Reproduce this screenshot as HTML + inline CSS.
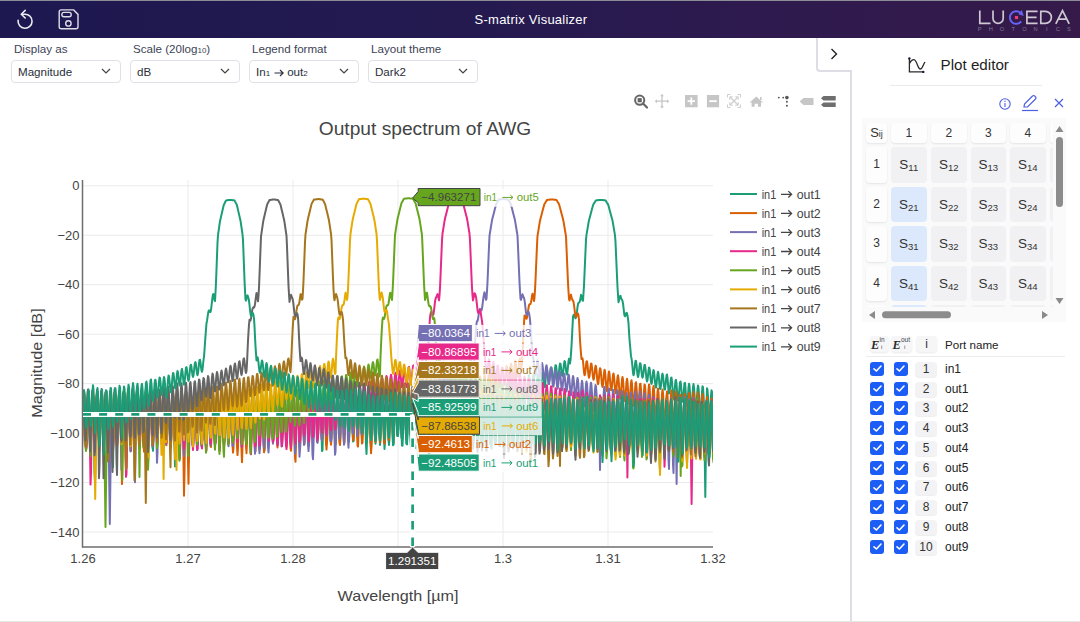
<!DOCTYPE html>
<html><head><meta charset="utf-8">
<style>
*{box-sizing:border-box;margin:0;padding:0}
html,body{width:1080px;height:622px;overflow:hidden;background:#fff;font-family:"Liberation Sans",sans-serif;position:relative}
.abs{position:absolute}
#hdr{left:0;top:0;width:1080px;height:38px;background:linear-gradient(90deg,#1d1850 0%,#231a50 40%,#2e1a4e 70%,#351a4a 100%);border-top:1px solid #8c8c96}
#title{left:0;width:1062px;top:11px;text-align:center;color:#fff;font-size:13px;letter-spacing:0.25px}
.lbl{font-size:11.6px;color:#3d4356;top:42px}
.sel{top:60px;height:23px;width:110px;border:1px solid #dfe1e6;border-radius:4px;font-size:11.6px;color:#2a2f3a;padding:4px 0 0 6px}
.sel svg{position:absolute;right:9px;top:7px}
#plotbg{left:0;top:38px;width:850px;height:584px}
#tab{left:816px;top:38px;width:35px;height:34px;border-left:2px solid #dedde5;border-bottom:2px solid #dedde5;border-bottom-left-radius:4px;background:#fff}
#pline{left:850px;top:70px;width:2px;height:551px;background:#dedde5}
#bot{left:0;top:621px;width:1080px;height:1px;background:#e2e8e6}
.cell{position:absolute;background:#f3f3f4;border-radius:4px;font-size:12px;color:#333;text-align:center}
.hc{box-shadow:0 1px 2px rgba(0,0,0,0.09)}
.blue{background:#dce8fb}
.cb{position:absolute;width:14px;height:14px;background:#1c5df5;border-radius:3px}
.cb svg{position:absolute;left:1.5px;top:1.5px}
.pn{position:absolute;left:945px;font-size:12px;color:#222}
.ix{position:absolute;left:915px;width:22px;height:15px;background:#f3f3f5;border-radius:4px;font-size:12px;color:#333;text-align:center;line-height:15px;box-shadow:0 1px 1px rgba(0,0,0,0.07)}
</style></head><body>
<div id="hdr" class="abs">
  <svg class="abs" style="left:0;top:-1px" width="90" height="38" viewBox="0 0 90 38">
  <path d="M21.6 14.2 H25 A7 7 0 1 1 18.1 20.4" fill="none" stroke="#ecebf2" stroke-width="1.6" stroke-linecap="round"/>
  <path d="M25.2 10.4 L21.3 14.2 L25.2 18" fill="none" stroke="#ecebf2" stroke-width="1.6" stroke-linecap="round" stroke-linejoin="round"/>
  <path d="M61.2 9.9 H73.7 L78 14.4 V26.8 A2 2 0 0 1 76 28.8 H61.2 A2 2 0 0 1 59.2 26.8 V11.9 A2 2 0 0 1 61.2 9.9 Z" fill="none" stroke="#dedde6" stroke-width="1.4"/>
  <rect x="61.9" y="12.4" width="9.3" height="4.3" rx="2" fill="none" stroke="#dedde6" stroke-width="1.4"/>
  <circle cx="68.4" cy="23.4" r="2.7" fill="none" stroke="#dedde6" stroke-width="1.4"/>
</svg>
  <div id="title" class="abs">S-matrix Visualizer</div>
  <!-- logo -->
  <svg class="abs" style="left:960px;top:-0.5px" width="120" height="38" viewBox="960 0 120 38">
    <g fill="none" stroke="#cdc8d2" stroke-width="1.7">
      <path d="M979.8 9.6 V22.4 H990.5"/>
      <path d="M993 9.6 V17.2 a5.1 5.1 0 0 0 10.2 0 V9.6"/>
      <path d="M1037.6 10.4 H1026.9 V22.3 H1037.6 M1026.9 16.3 H1036.6"/>
      <path d="M1040.8 10.4 V22.3 H1045.5 a5.9 5.95 0 0 0 0-11.9z"/>
      <path d="M1055.8 22.9 L1062.5 9.6 L1069.2 22.9 M1058.3 18.2 H1066.8"/>
    </g>
    <path d="M1020.4 11.8 A6.3 6.3 0 1 0 1021.2 20.4" fill="none" stroke="#6662f2" stroke-width="2"/>
    <path d="M1021.7 8.9 L1023.8 14.9 L1018.3 13.2z" fill="#6662f2"/>
    <rect x="1014.9" y="15" width="3.2" height="3.1" fill="#ec3b7f"/>
    <text x="979.8" y="29.9" font-size="4.6" fill="#7d7590" font-family="Liberation Sans" text-anchor="middle" transform="translate(979.8,0) scale(1.25,1) translate(-979.8,0)">P</text><text x="990.9" y="29.9" font-size="4.6" fill="#7d7590" font-family="Liberation Sans" text-anchor="middle" transform="translate(990.9,0) scale(1.25,1) translate(-990.9,0)">H</text><text x="1002.1" y="29.9" font-size="4.6" fill="#7d7590" font-family="Liberation Sans" text-anchor="middle" transform="translate(1002.1,0) scale(1.25,1) translate(-1002.1,0)">O</text><text x="1013.2" y="29.9" font-size="4.6" fill="#7d7590" font-family="Liberation Sans" text-anchor="middle" transform="translate(1013.2,0) scale(1.25,1) translate(-1013.2,0)">T</text><text x="1024.4" y="29.9" font-size="4.6" fill="#7d7590" font-family="Liberation Sans" text-anchor="middle" transform="translate(1024.4,0) scale(1.25,1) translate(-1024.4,0)">O</text><text x="1035.5" y="29.9" font-size="4.6" fill="#7d7590" font-family="Liberation Sans" text-anchor="middle" transform="translate(1035.5,0) scale(1.25,1) translate(-1035.5,0)">N</text><text x="1046.7" y="29.9" font-size="4.6" fill="#7d7590" font-family="Liberation Sans" text-anchor="middle" transform="translate(1046.7,0) scale(1.25,1) translate(-1046.7,0)">I</text><text x="1057.8" y="29.9" font-size="4.6" fill="#7d7590" font-family="Liberation Sans" text-anchor="middle" transform="translate(1057.8,0) scale(1.25,1) translate(-1057.8,0)">C</text><text x="1069.0" y="29.9" font-size="4.6" fill="#7d7590" font-family="Liberation Sans" text-anchor="middle" transform="translate(1069.0,0) scale(1.25,1) translate(-1069.0,0)">S</text>
  </svg>
</div>

<div class="abs lbl" style="left:14px">Display as</div>
<div class="abs lbl" style="left:133px">Scale (20log<span style="font-size:8px">10</span>)</div>
<div class="abs lbl" style="left:252px">Legend format</div>
<div class="abs lbl" style="left:371px">Layout theme</div>
<div class="abs sel" style="left:11px">Magnitude<svg width="10" height="6" viewBox="0 0 10 6"><path d="M1 1 L5 5 L9 1" fill="none" stroke="#444" stroke-width="1.2"/></svg></div>
<div class="abs sel" style="left:130px">dB<svg width="10" height="6" viewBox="0 0 10 6"><path d="M1 1 L5 5 L9 1" fill="none" stroke="#444" stroke-width="1.2"/></svg></div>
<div class="abs sel" style="left:249px">In<span style="font-size:8px">1</span><svg style="position:relative;right:auto;top:1px;margin:0 3px 0 4px" width="10" height="8" viewBox="0 0 10 8"><path d="M0.5 4 H9 M6 1 L9.2 4 L6 7" fill="none" stroke="#2a2f3a" stroke-width="1.2"/></svg>out<span style="font-size:8px">2</span><svg width="10" height="6" viewBox="0 0 10 6"><path d="M1 1 L5 5 L9 1" fill="none" stroke="#444" stroke-width="1.2"/></svg></div>
<div class="abs sel" style="left:368px">Dark2<svg width="10" height="6" viewBox="0 0 10 6"><path d="M1 1 L5 5 L9 1" fill="none" stroke="#444" stroke-width="1.2"/></svg></div>

<svg class="abs" style="left:0;top:0" width="850" height="620" viewBox="0 0 850 620">
<defs><clipPath id="pc"><rect x="83" y="180" width="630" height="367"/></clipPath></defs>
<line x1="188.0" y1="180" x2="188.0" y2="547" stroke="#ebebeb" stroke-width="1"/>
<line x1="293.0" y1="180" x2="293.0" y2="547" stroke="#ebebeb" stroke-width="1"/>
<line x1="398.0" y1="180" x2="398.0" y2="547" stroke="#ebebeb" stroke-width="1"/>
<line x1="503.0" y1="180" x2="503.0" y2="547" stroke="#ebebeb" stroke-width="1"/>
<line x1="608.0" y1="180" x2="608.0" y2="547" stroke="#ebebeb" stroke-width="1"/>
<line x1="83" y1="185.8" x2="713" y2="185.8" stroke="#ebebeb" stroke-width="1"/>
<line x1="83" y1="235.3" x2="713" y2="235.3" stroke="#ebebeb" stroke-width="1"/>
<line x1="83" y1="284.7" x2="713" y2="284.7" stroke="#ebebeb" stroke-width="1"/>
<line x1="83" y1="334.2" x2="713" y2="334.2" stroke="#ebebeb" stroke-width="1"/>
<line x1="83" y1="383.6" x2="713" y2="383.6" stroke="#ebebeb" stroke-width="1"/>
<line x1="83" y1="433.1" x2="713" y2="433.1" stroke="#ebebeb" stroke-width="1"/>
<line x1="83" y1="482.5" x2="713" y2="482.5" stroke="#ebebeb" stroke-width="1"/>
<line x1="83" y1="532.0" x2="713" y2="532.0" stroke="#ebebeb" stroke-width="1"/>
<g clip-path="url(#pc)"><polyline fill="none" stroke="#1b9e77" stroke-width="2" stroke-linejoin="round" points="81.0,422.3 81.5,433.0 82.0,434.0 82.5,424.8 83.0,409.6 83.5,395.8 84.0,390.3 84.5,395.9 85.0,410.0 85.5,425.7 86.0,435.5 86.5,434.9 87.0,424.2 87.5,408.7 88.0,395.7 88.5,391.2 89.0,397.2 89.5,410.7 90.0,425.3 90.5,434.6 91.0,434.6 91.5,425.6 92.0,411.8 92.5,399.5 93.0,394.4 93.5,399.3 94.0,412.6 94.5,428.3 95.0,439.1 95.2,440.7 95.5,439.2 96.0,428.0 96.5,410.9 97.0,396.4 97.5,391.6 98.0,398.6 98.5,413.4 99.0,428.3 99.5,435.9 100.0,432.5 100.5,420.2 101.0,405.0 101.5,394.2 102.0,392.8 102.5,401.4 103.0,416.1 103.5,429.7 104.0,435.8 104.5,431.3 105.0,418.4 105.5,403.1 106.0,392.6 106.5,391.7 107.0,400.4 107.5,414.5 108.0,427.2 108.5,432.7 109.0,428.5 109.5,416.5 109.8,407.9 110.0,402.4 110.5,392.6 111.0,392.9 111.5,403.5 112.0,421.4 112.5,450.6 113.0,467.2 113.5,439.8 114.0,414.2 114.5,398.1 115.0,390.0 115.5,393.5 116.0,406.4 116.5,422.3 117.0,433.2 117.5,434.1 118.0,424.5 118.5,409.3 119.0,395.8 119.5,390.7 120.0,396.8 120.5,411.4 121.0,427.9 121.5,438.6 122.0,438.7 122.3,433.5 122.5,428.5 123.0,412.7 123.5,398.3 124.0,391.3 124.5,394.5 125.0,406.7 125.5,422.7 126.0,435.7 126.5,439.9 127.0,432.8 127.5,417.3 128.0,400.8 128.5,391.9 129.0,395.5 129.5,409.7 130.0,426.9 130.5,437.9 131.0,437.3 131.5,425.8 132.0,409.5 132.5,396.1 133.0,391.6 133.5,397.5 134.0,410.8 134.5,425.1 135.0,433.3 135.5,431.2 136.0,419.5 136.5,403.9 137.0,392.6 137.5,391.5 138.0,401.4 138.5,417.7 139.0,436.4 139.5,447.8 140.0,436.3 140.5,418.0 141.0,402.2 141.5,392.8 142.0,393.9 142.5,405.2 143.0,421.1 143.5,433.9 144.0,437.6 144.5,430.2 145.0,415.6 145.5,400.7 145.8,394.5 146.0,392.3 146.5,394.2 147.0,405.1 147.5,419.9 148.0,432.2 148.5,436.2 149.0,430.1 149.5,416.4 150.0,401.7 150.5,393.7 151.0,397.1 151.5,410.9 152.0,429.6 152.5,446.8 153.0,450.8 153.5,437.0 154.0,417.5 154.5,399.8 155.0,391.0 155.5,394.6 156.0,408.4 156.5,425.1 157.0,436.6 157.5,437.7 158.0,428.3 158.5,412.6 159.0,397.7 159.5,390.3 160.0,393.7 160.5,406.7 161.0,423.7 161.5,437.0 162.0,440.5 162.5,432.5 163.0,416.6 163.5,400.6 163.6,398.1 164.0,392.4 164.5,396.4 165.0,410.5 165.5,427.7 166.0,439.5 166.5,440.3 167.0,429.8 167.5,413.2 168.0,398.5 168.5,393.1 169.0,399.6 169.5,415.2 170.0,432.3 170.5,442.6 171.0,441.0 171.5,428.5 172.0,411.3 172.5,397.9 173.0,394.5 173.5,402.5 174.0,418.4 174.5,441.4 175.0,466.4 175.5,455.6 176.0,428.2 176.5,409.1 177.0,396.3 177.5,393.4 178.0,401.9 178.5,417.4 179.0,432.8 179.5,440.6 180.0,437.0 180.5,423.5 181.0,406.5 181.5,394.1 182.0,392.0 182.5,400.7 183.0,415.4 183.5,428.9 184.0,435.2 184.5,431.6 185.0,420.0 185.5,405.6 186.0,394.8 186.5,392.8 187.0,401.0 187.5,416.6 188.0,438.5 188.5,460.9 189.0,452.6 189.5,429.1 190.0,411.1 190.5,398.4 191.0,395.7 191.5,404.4 192.0,420.3 192.5,435.7 193.0,443.1 193.5,439.3 194.0,426.1 194.5,409.7 195.0,397.1 195.5,393.8 196.0,401.3 196.5,416.4 197.0,432.6 197.5,442.6 198.0,441.5 198.5,429.5 199.0,412.0 199.5,397.4 200.0,392.8 200.5,400.6 201.0,416.7 201.5,433.1 202.0,441.5 202.5,437.7 203.0,423.7 203.5,406.1 204.0,392.9 204.5,389.8 205.0,397.5 205.5,411.4 206.0,424.9 206.5,431.6 207.0,427.0 207.5,414.7 208.0,401.2 208.5,392.3 209.0,392.5 209.5,402.0 210.0,416.6 210.5,429.2 211.0,433.8 211.5,427.7 212.0,414.2 212.5,400.3 213.0,393.8 213.5,398.8 214.0,413.4 214.5,430.7 215.0,442.4 215.5,440.7 216.0,427.1 216.5,409.5 217.0,396.1 217.5,393.0 218.0,401.3 218.5,416.5 219.0,430.9 219.5,437.7 220.0,433.8 220.5,421.4 221.0,406.4 221.5,395.5 222.0,393.4 222.5,400.7 223.0,414.2 223.5,428.0 224.0,436.1 224.5,434.9 225.0,424.9 225.5,410.5 226.0,398.4 226.5,394.5 227.0,401.1 227.5,415.4 228.0,431.1 228.5,441.5 229.0,439.8 229.5,427.2 230.0,410.9 230.5,397.7 231.0,393.6 231.5,400.3 232.0,414.8 232.5,430.0 233.0,438.6 233.5,436.2 234.0,424.1 234.5,408.0 235.0,395.7 235.5,392.9 236.0,400.6 236.5,415.0 237.0,430.3 237.5,439.8 238.0,434.9 238.5,420.6 239.0,404.8 239.5,394.0 240.0,393.7 240.5,404.6 241.0,421.5 241.5,437.2 242.0,443.1 242.5,434.0 243.0,417.0 243.5,400.4 244.0,391.7 244.5,395.5 245.0,410.4 245.5,429.1 246.0,442.6 246.5,443.8 247.0,432.2 247.5,414.3 248.0,398.8 248.5,392.8 249.0,398.8 249.5,413.5 250.0,430.0 250.5,440.7 251.0,441.1 251.5,431.1 252.0,415.1 252.5,400.5 253.0,394.1 253.5,398.7 254.0,412.1 254.5,427.7 255.0,437.8 255.5,437.6 256.0,427.2 256.5,411.6 257.0,398.2 257.5,392.9 258.0,398.2 258.5,411.4 259.0,426.5 259.5,436.5 260.0,436.8 260.5,427.2 261.0,412.2 261.5,398.9 262.0,393.6 262.5,399.0 263.0,412.7 263.5,430.7 264.0,450.0 264.5,450.5 265.0,431.5 265.5,413.0 266.0,398.6 266.5,392.8 267.0,398.3 267.5,412.4 268.0,428.2 268.5,438.2 269.0,437.7 269.5,427.1 270.0,411.6 270.5,398.7 271.0,394.3 271.5,400.2 272.0,413.4 272.5,427.2 273.0,435.0 273.5,433.1 274.0,422.4 274.5,408.1 275.0,396.9 275.5,394.1 276.0,400.8 276.5,414.0 277.0,427.5 277.5,434.9 278.0,432.7 278.5,421.8 279.0,407.2 279.5,396.0 280.0,393.8 280.5,402.0 281.0,416.9 281.5,431.3 282.0,438.3 282.5,434.5 283.0,421.8 283.5,406.4 284.0,395.1 284.5,393.3 285.0,401.7 285.5,416.6 286.0,431.0 286.5,438.1 287.0,434.5 287.5,421.8 288.0,406.7 288.5,396.9 289.0,398.1 289.5,410.3 290.0,428.0 290.5,442.6 291.0,446.6 291.5,437.8 292.0,420.6 292.5,403.6 293.0,395.3 293.5,399.5 294.0,413.6 294.5,430.2 295.0,441.1 295.5,441.1 296.0,430.8 296.5,415.1 297.0,401.2 297.5,395.5 298.0,400.7 298.5,414.5 299.0,430.8 299.5,441.8 300.0,442.1 300.5,431.3 301.0,414.6 301.5,399.8 302.0,394.2 302.5,399.8 303.0,413.5 303.5,428.3 304.0,437.2 304.5,436.0 305.0,425.3 305.5,410.1 306.0,397.6 306.5,393.7 307.0,400.3 307.5,414.3 308.0,429.3 308.5,438.2 309.0,436.9 309.5,426.3 310.0,411.3 310.5,398.7 311.0,393.9 311.5,398.8 312.0,411.2 312.5,425.5 313.0,435.4 313.5,436.4 314.0,428.0 314.5,413.8 315.0,400.5 315.5,394.1 316.0,397.7 316.5,409.6 317.0,424.2 317.5,434.8 318.0,436.4 318.5,428.4 319.0,414.7 319.5,401.9 320.0,396.2 320.5,400.9 321.0,414.2 321.5,432.1 322.0,451.0 322.5,450.5 323.0,431.6 323.5,413.6 324.0,399.7 324.5,395.3 325.0,402.4 325.5,417.4 326.0,433.6 326.5,443.9 327.0,440.5 327.5,426.5 328.0,410.3 328.5,398.2 329.0,395.7 329.5,404.0 330.0,419.2 330.5,434.4 331.0,442.1 331.5,437.7 332.0,423.7 332.5,407.2 333.0,395.8 333.5,395.2 334.0,405.9 334.5,422.7 335.0,438.1 335.5,444.2 336.0,436.5 336.5,420.7 337.0,404.7 337.5,395.3 338.0,396.7 338.5,407.9 339.0,423.8 339.5,438.2 340.0,442.9 340.5,433.0 341.0,417.4 341.5,403.0 342.0,395.6 342.5,398.6 343.0,410.2 343.5,424.4 344.0,434.3 344.5,435.4 345.0,427.3 345.5,413.8 346.0,401.1 346.5,395.5 347.0,400.3 347.5,413.8 348.0,429.8 348.5,440.8 349.0,441.4 349.5,431.3 350.0,415.1 350.5,400.4 351.0,394.1 351.5,399.4 352.0,413.8 352.5,430.5 353.0,441.4 353.5,441.2 354.0,430.0 354.5,413.5 355.0,399.3 355.5,394.1 356.0,399.9 356.5,413.5 357.0,428.3 357.5,437.0 358.0,435.5 358.5,424.6 359.0,410.2 359.5,399.5 360.0,397.8 360.5,406.1 361.0,420.1 361.5,433.0 362.0,438.5 362.5,433.8 363.0,421.1 363.5,406.3 364.0,396.8 364.5,397.6 365.0,408.6 365.5,425.6 366.0,444.7 366.5,453.9 367.0,440.9 367.5,422.1 368.0,405.8 368.5,396.2 369.0,397.7 369.5,409.7 370.0,427.2 370.5,442.1 371.0,447.7 371.5,441.4 372.0,426.1 372.5,408.9 373.0,398.0 373.5,398.4 374.0,409.4 374.5,425.7 375.0,439.2 375.5,443.7 376.0,437.2 376.5,422.7 377.0,406.5 377.5,395.7 378.0,394.9 378.5,404.4 379.0,420.2 379.5,436.2 380.0,445.0 380.5,440.4 381.0,425.6 381.5,408.0 382.0,395.0 382.5,392.7 383.0,402.0 383.5,418.5 384.0,436.5 384.5,449.0 385.0,442.4 385.5,425.0 386.0,407.9 386.5,396.2 387.0,395.4 387.5,406.1 388.0,423.5 388.5,438.9 389.0,444.9 389.5,438.5 390.0,423.3 390.5,406.8 391.0,396.9 391.5,398.1 392.0,409.4 392.5,425.5 393.0,439.5 393.5,443.8 394.0,434.9 394.5,418.9 395.0,403.3 395.5,395.1 396.0,398.5 396.5,411.3 397.0,426.4 397.5,436.1 398.0,435.9 398.5,426.3 399.0,412.0 399.5,399.5 400.0,394.5 400.5,399.7 401.0,413.1 401.5,428.6 402.0,438.6 402.5,438.2 403.0,427.7 403.5,412.4 404.0,399.7 404.5,395.8 405.0,402.3 405.5,416.3 406.0,432.2 406.5,443.3 407.0,441.8 407.5,429.1 408.0,412.6 408.5,399.4 409.0,395.8 409.5,403.8 410.0,419.8 410.5,436.3 411.0,445.6 411.5,443.0 412.0,429.8 412.5,412.5 413.0,399.2 413.5,396.0 414.0,404.7 414.5,421.0 415.0,437.5 415.5,446.3 416.0,443.4 416.5,429.9 417.0,412.2 417.5,398.5 418.0,395.3 418.5,404.1 419.0,420.8 419.5,439.0 420.0,450.6 420.5,443.3 421.0,425.0 421.5,407.0 422.0,395.2 422.5,394.5 423.0,404.8 423.5,420.6 424.0,433.7 424.5,437.5 425.0,429.8 425.5,414.6 426.0,399.5 426.5,392.0 427.0,395.5 427.5,408.0 428.0,422.8 428.5,432.8 429.0,433.4 429.5,424.5 430.0,410.6 430.5,398.2 431.0,393.4 431.5,398.6 432.0,411.4 432.5,427.4 433.0,442.2 433.5,443.8 434.0,430.1 434.5,414.1 435.0,400.3 435.5,393.3 436.0,396.4 436.5,408.2 437.0,423.7 437.5,435.4 438.0,437.8 438.5,429.4 439.0,414.2 439.5,399.2 440.0,391.6 440.5,394.6 441.0,406.3 441.5,420.8 442.0,430.8 442.5,431.6 443.0,422.8 443.5,408.8 444.0,396.6 444.5,392.3 445.0,398.3 445.5,412.4 446.0,427.8 446.5,437.1 447.0,435.7 447.5,424.6 448.0,409.4 448.5,397.5 449.0,394.3 449.5,401.0 450.0,414.0 450.5,426.9 451.0,433.9 451.5,431.7 452.0,421.2 452.5,407.4 453.0,396.4 453.5,393.2 454.0,399.1 454.5,410.9 455.0,422.7 455.5,428.9 456.0,426.8 456.5,417.4 457.0,404.8 457.5,394.9 458.0,392.6 458.5,399.4 459.0,412.3 459.5,424.9 460.0,431.0 460.5,427.4 461.0,416.0 461.5,402.4 462.0,393.4 462.5,393.2 463.0,401.8 463.5,414.8 464.0,426.3 464.5,430.4 465.0,424.1 465.5,412.0 466.0,400.0 466.5,393.7 467.0,395.9 467.5,405.4 468.0,417.6 468.5,427.3 469.0,428.9 469.5,421.2 470.0,409.0 470.5,397.7 471.0,392.0 471.5,394.7 472.0,404.4 472.5,416.6 473.0,425.8 473.5,427.5 474.0,420.4 474.5,408.7 475.0,397.3 475.5,390.7 476.0,391.7 476.5,399.4 477.0,410.3 477.5,419.3 478.0,422.2 478.5,417.6 479.0,407.6 479.5,396.7 480.0,390.0 480.5,390.4 481.0,397.9 481.5,408.8 482.0,418.1 482.5,421.1 483.0,416.3 483.5,406.1 484.0,395.4 484.5,389.3 485.0,390.5 485.5,398.1 486.0,408.5 486.5,417.7 487.0,420.0 487.5,413.0 488.0,402.2 488.5,392.2 489.0,387.3 489.5,389.8 490.0,398.3 490.5,408.4 491.0,415.0 491.5,414.8 492.0,407.9 492.5,397.6 493.0,388.8 493.5,385.7 494.0,389.4 494.5,398.1 495.0,407.5 495.5,412.8 496.0,411.2 496.5,403.2 497.0,392.5 497.5,384.6 498.0,383.4 498.5,389.7 499.0,400.4 499.5,411.2 500.0,417.0 500.5,412.3 501.0,402.2 501.5,392.0 502.0,385.3 502.5,385.0 503.0,390.9 503.5,400.0 504.0,408.1 504.5,411.5 505.0,408.7 505.5,401.0 506.0,392.0 506.5,385.4 507.0,383.9 507.5,387.7 508.0,394.8 508.5,401.7 509.0,405.0 509.5,403.1 510.0,396.7 510.5,388.5 511.0,382.5 511.5,381.5 512.0,386.1 512.5,394.0 513.0,401.6 513.5,405.1 514.0,402.1 514.5,394.6 515.0,386.3 515.5,380.9 516.0,381.0 516.5,386.7 517.0,395.1 517.5,402.2 518.0,404.5 518.5,400.9 519.0,393.1 519.5,385.0 520.0,380.1 520.5,380.7 521.0,386.1 521.5,393.6 522.0,399.4 522.5,400.8 523.0,397.0 523.5,389.6 524.0,382.0 524.5,377.7 525.0,378.8 525.5,384.4 526.0,391.6 526.5,396.7 527.0,396.9 527.5,392.1 528.0,384.6 528.5,377.9 529.0,375.2 529.5,377.6 530.0,383.7 530.5,390.5 531.0,394.6 531.5,394.2 532.0,389.5 532.5,382.9 533.0,377.2 533.5,375.0 534.0,377.0 534.5,382.2 535.0,388.1 535.5,392.0 536.0,392.0 536.5,388.0 537.0,381.8 537.5,376.4 538.0,374.2 538.5,375.9 539.0,380.7 539.5,386.0 540.0,389.4 540.5,389.0 541.0,385.0 541.5,379.0 542.0,373.9 542.5,372.0 543.0,374.1 543.5,379.1 544.0,384.5 544.5,387.3 545.0,386.1 545.5,381.2 546.0,375.0 546.5,370.4 547.0,369.4 547.5,372.2 548.0,376.9 548.5,381.0 549.0,382.4 549.5,380.5 550.0,375.9 550.5,370.9 551.0,367.5 551.5,367.5 552.0,370.8 552.5,375.9 553.0,380.4 553.5,381.7 554.0,379.3 554.5,374.1 555.0,368.5 555.5,365.2 556.0,365.4 556.5,369.0 557.0,374.0 557.5,378.1 558.0,379.2 558.5,376.8 559.0,371.8 559.5,366.6 560.0,363.5 560.5,363.8 561.0,367.2 561.5,371.7 562.0,375.3 562.5,376.0 563.0,373.5 563.5,368.8 564.0,364.0 564.5,361.1 565.0,361.6 565.5,365.3 566.0,370.3 566.5,374.1 567.0,374.6 567.5,371.6 568.0,366.4 568.5,361.3 569.0,358.7 569.5,359.6 570.0,363.6 570.5,359.8 571.0,353.7 571.5,346.1 572.0,336.7 572.5,326.4 573.0,317.1 573.5,315.0 574.0,314.7 574.5,315.8 575.0,317.3 575.5,318.1 576.0,317.4 576.5,314.9 577.0,311.4 577.5,307.2 578.0,304.2 578.5,302.9 579.0,302.5 579.5,302.0 580.0,300.6 580.5,298.0 581.0,294.8 581.5,295.9 582.0,298.0 582.5,300.5 583.0,300.7 583.5,293.2 584.0,285.4 584.5,274.0 585.0,262.5 585.5,251.1 586.0,239.6 586.5,234.7 587.0,231.7 587.5,228.8 588.0,225.8 588.5,222.8 589.0,220.2 589.5,218.4 590.0,216.5 590.5,214.7 591.0,212.8 591.5,210.9 592.0,209.1 592.5,207.2 593.0,205.4 593.5,204.2 594.0,203.4 594.5,202.6 595.0,201.8 595.5,200.9 596.0,200.4 596.5,200.3 597.0,200.3 597.5,200.2 598.0,200.2 598.5,200.1 599.0,200.1 599.5,200.0 600.0,200.0 600.5,199.9 601.0,199.9 601.5,200.0 602.0,200.0 602.5,200.1 603.0,200.1 603.5,200.2 604.0,200.2 604.5,200.3 605.0,200.3 605.5,200.4 606.0,201.1 606.5,201.9 607.0,202.8 607.5,203.6 608.0,204.4 608.5,205.7 609.0,207.6 609.5,209.4 610.0,211.3 610.5,213.2 611.0,215.0 611.5,216.9 612.0,218.7 612.5,220.6 613.0,223.4 613.5,226.4 614.0,229.3 614.5,232.3 615.0,235.3 615.5,241.9 616.0,253.4 616.5,264.8 617.0,276.3 617.5,287.3 618.0,294.7 618.5,302.2 619.0,300.0 619.5,297.9 620.0,296.3 620.5,295.8 621.0,298.0 621.5,299.1 622.0,299.8 622.5,300.9 623.0,303.4 623.5,307.6 624.0,312.1 624.5,315.5 625.0,316.3 625.5,315.4 626.0,313.8 626.5,312.8 627.0,313.3 627.4,315.0 627.5,315.7 628.0,319.1 628.5,323.0 629.0,332.0 629.5,339.2 630.0,345.0 630.5,350.3 631.0,356.4 631.5,358.3 632.0,361.8 632.5,367.4 633.0,372.7 633.5,375.2 634.0,373.9 634.5,369.4 635.0,364.2 635.5,360.8 636.0,361.0 636.5,364.6 637.0,370.2 637.5,375.1 638.0,377.1 638.5,375.5 639.0,371.1 639.5,366.2 640.0,363.2 640.5,363.4 641.0,366.9 641.5,371.8 642.0,376.0 642.5,377.7 643.0,376.2 643.5,372.3 644.0,367.9 644.5,365.0 645.0,365.1 645.5,368.6 646.0,374.0 646.5,379.1 647.0,381.5 647.5,380.1 648.0,375.7 648.5,370.7 649.0,367.6 649.5,368.2 650.0,372.1 650.5,377.6 651.0,382.2 651.5,383.9 652.0,381.9 652.5,377.4 653.0,372.5 653.5,370.0 654.0,371.3 654.5,376.1 655.0,382.2 655.5,386.7 656.0,387.6 656.5,384.6 657.0,379.2 657.5,374.1 658.0,371.8 658.5,373.6 659.0,378.7 659.5,384.7 660.0,388.8 660.5,388.9 661.0,385.3 661.5,379.9 662.0,375.3 662.5,373.6 663.0,375.7 663.5,380.6 664.0,386.1 664.5,389.6 665.0,389.5 665.5,385.7 666.0,380.0 666.5,375.5 667.0,374.5 667.5,377.9 668.0,384.1 668.5,390.3 669.0,393.6 669.5,392.7 670.0,388.1 670.5,382.3 671.0,378.0 671.5,377.5 672.0,381.5 672.5,388.4 673.0,395.4 673.5,399.4 674.0,398.4 674.5,392.9 675.0,385.8 675.5,380.6 676.0,379.8 676.5,383.9 676.6,385.0 677.0,390.6 677.5,397.3 678.0,400.8 678.5,399.5 679.0,394.1 679.5,387.4 680.0,382.5 680.5,381.5 680.7,382.5 681.0,385.0 681.5,391.4 682.0,397.9 682.5,401.7 683.0,400.9 683.5,395.5 684.0,388.3 684.5,383.1 685.0,382.9 685.5,388.3 686.0,396.6 686.5,403.9 687.0,406.4 687.5,403.1 688.0,395.5 688.5,387.7 689.0,383.7 689.5,385.6 690.0,392.7 690.5,401.7 691.0,408.3 691.5,409.1 691.6,408.4 692.0,403.8 692.5,395.2 693.0,387.4 693.5,384.1 694.0,387.0 694.5,394.5 695.0,403.9 695.5,413.0 696.0,414.1 696.5,405.9 697.0,396.8 697.5,389.2 698.0,385.5 698.5,387.6 699.0,394.7 699.5,404.2 700.0,413.2 700.5,416.5 701.0,410.7 701.5,401.2 702.0,391.9 702.5,386.3 703.0,387.2 703.5,394.5 704.0,404.9 704.5,437.7 705.0,474.7 705.3,497.0 705.5,482.2 706.0,445.1 706.5,408.0 707.0,388.2 707.5,389.7 708.0,397.1 708.5,407.4 709.0,417.3 709.5,421.3 710.0,415.9 710.5,405.9 711.0,395.9 711.5,390.3 712.0,392.1 712.5,400.7 713.0,411.8 713.5,420.0 714.0,421.3 714.5,415.1 715.0,404.5"/>
<polyline fill="none" stroke="#d95f02" stroke-width="2" stroke-linejoin="round" points="81.0,436.7 81.5,450.0 82.0,449.3 82.5,434.8 83.0,413.7 83.5,396.5 84.0,391.6 84.5,401.1 85.0,419.8 85.5,438.3 86.0,447.8 86.5,443.9 87.0,428.6 87.5,409.2 88.0,394.7 88.5,391.8 89.0,401.8 89.5,419.6 90.0,436.7 90.5,445.4 91.0,441.5 91.5,427.0 92.0,409.0 92.5,396.1 93.0,394.3 93.5,404.2 94.0,421.6 94.5,450.8 95.0,481.2 95.2,477.9 95.5,457.4 96.0,423.8 96.5,405.2 97.0,393.9 97.5,393.5 98.0,404.6 98.5,422.1 99.0,437.6 99.5,443.3 100.0,436.0 100.5,419.4 101.0,401.8 101.5,392.2 102.0,395.7 102.5,410.8 103.0,430.0 103.5,443.8 104.0,445.9 104.5,435.4 105.0,417.6 105.5,400.7 106.0,392.3 106.5,395.8 107.0,409.4 107.5,426.9 108.0,440.5 108.5,444.3 109.0,436.7 109.5,421.1 109.8,410.8 110.0,404.7 110.5,393.9 111.0,394.5 111.5,406.7 112.0,425.0 112.5,440.7 113.0,446.2 113.5,438.6 114.0,421.7 114.5,403.9 115.0,393.8 115.5,395.4 116.0,407.2 116.5,422.7 117.0,434.5 117.5,437.2 118.0,429.6 118.5,414.8 119.0,399.5 119.5,391.0 120.0,393.7 120.5,407.3 121.0,429.5 121.5,467.2 122.0,484.1 122.3,466.0 122.5,450.1 123.0,420.0 123.5,401.6 124.0,392.3 124.5,395.7 125.0,409.6 125.5,429.9 126.0,459.4 126.5,468.0 127.0,440.1 127.5,416.8 128.0,400.6 128.5,393.3 129.0,398.8 129.5,415.6 130.0,436.0 130.5,450.3 131.0,451.0 131.5,437.6 132.0,416.8 132.5,398.8 133.0,392.0 133.5,399.1 134.0,415.7 134.5,434.0 135.0,445.8 135.5,443.0 136.0,427.6 136.5,408.5 137.0,393.7 137.5,390.2 138.0,399.9 138.5,418.1 139.0,437.3 139.5,448.9 140.0,443.7 140.5,426.8 141.0,407.8 141.5,394.6 142.0,393.6 142.5,405.9 143.0,426.0 143.5,444.2 144.0,451.7 144.5,444.5 145.0,425.9 145.5,404.9 145.8,395.4 146.0,391.5 146.5,392.9 147.0,407.2 147.5,427.0 148.0,442.1 148.5,445.3 149.0,435.5 149.5,417.9 150.0,400.6 150.5,391.2 151.0,393.1 151.5,405.0 152.0,421.4 152.5,434.9 153.0,439.4 153.5,432.7 154.0,417.9 154.5,401.7 155.0,391.8 155.5,392.7 156.0,404.0 156.5,420.7 157.0,436.9 157.5,444.0 158.0,434.8 158.5,417.9 159.0,401.1 159.5,390.9 160.0,392.2 160.5,404.6 161.0,422.3 161.5,437.2 162.0,441.3 162.5,431.7 163.0,414.8 163.5,398.6 163.6,396.2 164.0,390.9 164.5,395.8 165.0,411.6 165.5,431.0 166.0,444.5 166.5,445.3 167.0,433.2 167.5,414.5 168.0,398.7 168.5,393.5 169.0,401.2 169.5,418.0 170.0,436.1 170.5,446.7 171.0,444.6 171.5,430.9 172.0,412.1 172.5,397.5 173.0,394.2 173.5,402.8 174.0,418.7 174.5,433.7 175.0,441.1 175.5,437.4 176.0,424.3 176.5,407.6 177.0,395.4 177.5,393.9 178.0,404.5 178.5,423.2 179.0,444.8 179.5,459.7 180.0,450.8 180.5,430.1 181.0,409.7 181.5,395.4 182.0,393.6 182.5,405.7 183.0,427.7 183.5,462.2 184.0,495.8 184.5,473.0 185.0,434.8 185.5,410.2 186.0,394.5 186.5,393.3 187.0,406.8 187.5,429.2 188.0,461.4 188.5,483.7 189.0,455.3 189.5,422.8 190.0,402.2 190.5,391.3 191.0,393.8 191.5,408.0 192.0,427.1 192.5,442.3 193.0,446.0 193.5,436.0 194.0,418.8 194.5,402.5 195.0,394.9 195.5,399.5 196.0,413.6 196.5,430.5 197.0,442.1 197.5,443.4 198.0,433.9 198.5,417.9 199.0,402.5 199.5,394.4 200.0,397.6 200.5,410.7 201.0,427.9 201.5,441.0 202.0,443.5 202.5,434.0 203.0,416.7 203.5,399.7 204.0,390.7 204.5,393.7 205.0,406.7 205.5,423.6 206.0,436.6 206.5,439.5 207.0,430.9 207.5,414.8 208.0,399.0 208.5,391.6 209.0,396.9 209.5,412.9 210.0,432.2 210.5,446.2 211.0,447.0 211.5,434.1 212.0,415.1 212.5,398.5 213.0,392.0 213.5,398.3 214.0,414.4 214.5,432.3 215.0,443.5 215.5,442.7 216.0,430.2 216.5,412.2 217.0,397.3 217.5,392.9 218.0,401.6 218.5,419.5 219.0,438.4 219.5,449.3 220.0,446.0 220.5,430.7 221.0,411.7 221.5,397.9 222.0,395.8 222.5,405.7 223.0,422.4 223.5,438.4 224.0,446.4 224.5,439.6 225.0,423.8 225.5,407.5 226.0,396.4 226.5,395.0 227.0,403.4 227.5,417.9 228.0,432.1 228.5,439.7 229.0,437.0 229.5,425.0 230.0,408.9 230.5,396.8 231.0,395.3 231.5,406.3 232.0,425.4 232.5,443.8 233.0,452.6 233.5,447.6 234.0,431.2 234.5,411.6 235.0,398.3 235.5,397.5 236.0,409.5 236.5,428.5 237.0,446.6 237.5,455.1 238.0,447.4 238.5,429.7 239.0,410.8 239.5,398.3 240.0,398.1 240.5,410.0 241.0,428.8 241.5,450.3 242.0,462.2 242.5,447.0 243.0,424.5 243.5,405.1 244.0,393.1 244.5,394.0 245.0,407.5 245.5,427.5 246.0,446.2 246.5,453.3 247.0,442.4 247.5,422.7 248.0,403.6 248.5,393.3 249.0,396.8 249.5,412.3 250.0,432.1 250.5,446.8 251.0,448.8 251.5,437.2 252.0,418.5 252.5,401.6 253.0,394.7 253.5,401.3 254.0,418.7 254.5,438.7 255.0,451.8 255.5,451.5 256.0,437.9 256.5,417.8 257.0,401.2 257.5,396.1 258.0,404.3 258.5,421.3 259.0,439.0 259.5,449.4 260.0,447.6 260.5,434.3 261.0,415.4 261.5,399.8 262.0,395.2 262.5,404.3 263.0,422.9 263.5,442.1 264.0,452.3 264.5,448.5 265.0,432.5 265.5,411.9 266.0,396.6 266.5,393.6 267.0,403.8 267.5,421.5 268.0,437.7 268.5,444.3 269.0,438.3 269.5,422.6 270.0,404.9 270.5,393.6 271.0,393.9 271.5,405.3 272.0,422.4 272.5,437.3 273.0,443.4 273.5,438.3 274.0,424.8 274.5,409.1 275.0,398.4 275.5,398.1 276.0,408.7 276.5,425.6 277.0,441.0 277.5,447.4 278.0,441.7 278.5,426.6 279.0,409.2 279.5,397.3 280.0,395.5 280.5,404.1 281.0,418.4 281.5,431.6 282.0,437.4 282.5,432.9 283.0,419.9 283.5,404.2 284.0,393.5 284.5,393.6 285.0,405.3 285.5,423.8 286.0,440.6 286.5,447.0 287.0,439.6 287.5,421.5 288.0,402.0 288.5,391.2 289.0,395.0 289.5,411.6 290.0,432.7 290.5,448.1 291.0,450.8 291.5,440.3 292.0,421.8 292.5,404.3 293.0,395.9 293.5,400.4 294.0,416.1 294.5,436.8 295.0,457.5 295.5,461.8 296.0,443.6 296.5,422.0 297.0,403.9 297.5,394.9 298.0,398.7 298.5,413.4 299.0,432.3 299.5,446.6 300.0,449.4 300.5,439.1 301.0,420.6 301.5,402.8 302.0,394.1 302.5,398.1 303.0,412.3 303.5,429.7 304.0,442.4 304.5,444.1 305.0,434.1 305.5,417.9 306.0,403.2 306.5,397.0 307.0,402.5 307.5,417.4 308.0,434.8 308.5,446.0 309.0,445.2 309.5,432.5 310.0,414.0 310.5,399.1 311.0,395.2 311.5,403.7 312.0,419.5 312.5,434.1 313.0,440.1 313.5,434.9 314.0,421.3 314.5,405.5 315.0,394.6 315.5,393.3 316.0,402.5 316.5,418.2 317.0,433.9 317.5,441.9 318.0,435.9 318.5,421.0 319.0,404.9 319.5,394.7 320.0,395.1 320.5,405.7 321.0,421.3 321.5,435.0 322.0,440.5 322.5,435.6 323.0,422.6 323.5,407.5 324.0,397.5 324.5,398.0 325.0,409.5 325.5,427.4 326.0,443.4 326.5,449.6 327.0,442.7 327.5,426.1 328.0,407.6 328.5,396.0 329.0,396.1 329.5,407.3 330.0,424.1 330.5,438.9 331.0,444.7 331.5,438.3 332.0,422.8 332.5,405.1 333.0,393.4 333.5,393.3 334.0,405.1 334.5,423.3 335.0,439.1 335.5,444.8 336.0,437.7 336.5,421.5 337.0,404.2 337.5,394.5 338.0,397.2 338.5,411.0 339.0,429.0 339.5,442.7 340.0,445.1 340.5,435.1 341.0,417.7 341.5,401.6 342.0,394.6 342.5,400.1 343.0,415.0 343.5,432.1 344.0,443.0 344.5,442.6 345.0,431.2 345.5,414.0 346.0,399.3 346.5,393.7 347.0,399.7 347.5,413.9 348.0,429.5 348.5,439.4 349.0,439.0 349.5,428.7 350.0,413.1 350.5,399.2 351.0,393.4 351.5,398.1 352.0,411.1 352.5,426.7 353.0,439.3 353.5,440.4 354.0,429.1 354.5,413.7 355.0,400.2 355.5,394.2 356.0,399.1 356.5,413.4 357.0,431.2 357.5,445.3 358.0,446.6 358.5,434.0 359.0,415.8 359.5,399.7 360.0,393.0 360.5,398.9 361.0,414.6 361.5,432.4 362.0,443.6 362.5,442.7 363.0,430.2 363.5,412.1 364.0,396.8 364.5,391.2 365.0,397.4 365.5,412.2 366.0,428.8 366.5,439.4 367.0,439.0 367.5,427.4 368.0,410.1 368.5,395.8 369.0,392.4 369.5,402.1 370.0,420.9 370.5,441.0 371.0,453.3 371.5,446.9 372.0,428.5 372.5,409.1 373.0,396.2 373.5,395.6 374.0,406.8 374.5,423.5 375.0,437.5 375.5,442.0 376.0,435.3 376.5,420.7 377.0,405.0 377.5,395.6 378.0,396.7 378.5,407.9 379.0,423.9 379.5,437.6 380.0,442.2 380.5,435.0 381.0,419.8 381.5,404.0 382.0,395.4 382.5,398.8 383.0,412.7 383.5,430.3 384.0,442.7 384.5,443.8 385.0,433.1 385.5,416.1 386.0,400.9 386.5,394.8 387.0,400.2 387.5,414.3 388.0,430.1 388.5,440.0 389.0,439.1 389.5,427.8 390.0,411.3 390.5,397.7 391.0,393.4 391.5,400.4 392.0,415.0 392.5,431.5 393.0,443.5 393.5,439.4 394.0,423.8 394.5,407.4 395.0,395.2 395.5,392.0 396.0,399.1 396.5,412.9 397.0,426.8 397.5,434.5 398.0,432.3 398.5,421.3 399.0,406.6 399.5,394.9 400.0,391.6 400.5,398.3 401.0,411.8 401.5,426.5 402.0,436.6 402.5,433.9 403.0,421.3 403.5,406.5 404.0,395.1 404.5,392.4 405.0,400.3 405.5,415.7 406.0,431.6 406.5,440.3 407.0,437.4 407.5,424.2 408.0,407.3 408.5,395.0 409.0,393.1 409.5,402.2 410.0,417.4 410.5,430.8 411.0,435.8 411.5,430.1 412.0,416.5 412.5,401.5 413.0,391.9 413.5,391.8 414.0,400.9 414.5,415.0 415.0,427.6 415.5,432.7 416.0,427.8 416.5,415.1 417.0,400.7 417.5,391.7 418.0,392.3 418.5,402.1 419.0,416.3 419.5,428.0 420.0,431.6 420.5,425.5 421.0,412.7 421.5,399.3 422.0,391.6 422.5,393.5 423.0,404.2 423.5,418.6 424.0,429.7 424.5,431.7 425.0,423.6 425.5,409.2 426.0,395.6 426.5,389.1 427.0,392.3 427.5,403.0 428.0,415.9 428.5,426.1 429.0,426.6 429.5,416.5 430.0,403.5 430.5,392.4 431.0,387.0 431.5,389.9 432.0,399.7 432.5,412.3 433.0,421.8 433.5,423.8 434.0,417.2 434.5,404.9 435.0,393.1 435.5,387.6 436.0,391.4 436.5,402.9 437.0,416.8 437.5,427.3 438.0,427.3 438.5,416.8 439.0,402.6 439.5,391.0 440.0,387.4 440.5,393.3 441.0,405.5 441.5,417.6 442.0,423.5 442.5,420.5 443.0,410.2 443.5,397.5 444.0,388.3 444.5,386.3 445.0,392.0 445.5,402.2 446.0,411.8 446.5,416.6 447.0,414.4 447.5,406.3 448.0,396.0 448.5,388.3 449.0,386.8 449.5,392.3 450.0,402.4 450.5,412.3 451.0,417.0 451.5,414.2 452.0,405.0 452.5,393.9 453.0,386.5 453.5,386.4 454.0,393.8 454.5,404.9 455.0,414.0 455.5,416.4 456.0,411.0 456.5,400.5 457.0,390.0 457.5,384.1 458.0,385.4 458.5,392.7 459.0,402.3 459.5,409.8 460.0,411.5 460.5,406.5 461.0,397.1 461.5,387.6 462.0,382.6 462.5,384.1 463.0,391.3 463.5,400.6 464.0,408.2 464.5,410.1 465.0,404.7 465.5,395.8 466.0,387.1 466.5,381.9 467.0,382.2 467.5,387.6 468.0,395.3 468.5,401.6 469.0,403.4 469.5,400.0 470.0,392.7 470.5,384.9 471.0,380.1 471.5,380.4 472.0,385.8 472.5,393.8 473.0,400.3 473.5,402.2 474.0,398.3 474.5,390.7 475.0,383.0 475.5,378.8 476.0,379.8 476.5,385.3 477.0,392.3 477.5,397.6 478.0,398.4 478.5,394.2 479.0,386.9 479.5,379.9 480.0,376.6 480.5,378.4 481.0,384.3 481.5,391.1 482.0,395.5 482.5,395.3 483.0,390.7 483.5,383.6 484.0,377.4 484.5,374.7 485.0,376.8 485.5,382.4 486.0,388.9 486.5,392.8 487.0,392.4 487.5,387.6 488.0,380.9 488.5,375.3 489.0,373.3 489.5,375.3 490.0,380.2 490.5,385.5 491.0,388.5 491.5,388.0 492.0,383.9 492.5,378.0 493.0,373.2 493.5,371.9 494.0,374.9 494.5,381.2 495.0,387.7 495.5,391.3 496.0,390.1 496.5,384.4 497.0,376.9 497.5,371.4 498.0,370.4 498.5,374.0 499.0,380.2 499.5,385.6 500.0,387.6 500.5,385.2 501.0,379.5 501.5,372.9 502.0,368.4 502.5,368.1 503.0,371.9 503.5,378.1 504.0,383.3 504.5,384.8 505.0,381.9 505.5,375.9 506.0,369.7 506.5,366.1 507.0,366.8 507.5,370.9 508.0,376.4 508.5,380.3 509.0,380.8 509.5,377.5 510.0,371.8 510.5,366.4 511.0,363.8 511.5,365.2 512.0,369.9 512.5,375.6 513.0,379.3 513.5,379.1 514.0,374.9 514.5,368.6 515.0,363.1 515.5,361.1 516.0,363.4 516.5,368.7 517.0,374.1 517.5,376.8 518.0,375.4 518.5,370.5 519.0,364.3 519.5,359.6 520.0,358.5 520.5,361.1 521.0,366.0 521.5,370.7 522.0,362.2 522.5,353.7 523.0,343.7 523.5,333.2 524.0,323.2 524.5,315.6 525.0,315.8 525.5,317.1 526.0,318.4 526.5,318.8 527.0,317.6 527.5,314.9 528.0,311.4 528.5,308.0 529.0,305.3 529.5,304.3 530.0,304.3 530.5,303.9 531.0,302.3 531.5,299.5 532.0,296.0 532.5,293.7 533.0,295.8 533.5,298.3 534.0,301.0 534.5,297.5 535.0,289.9 535.5,280.4 536.0,268.7 536.5,257.1 537.0,245.4 537.5,235.8 538.0,232.8 538.5,229.8 539.0,226.7 539.5,223.7 540.0,220.7 540.5,218.7 541.0,216.8 541.5,214.9 542.0,213.0 542.5,211.1 543.0,209.2 543.5,207.3 544.0,205.4 544.5,204.0 545.0,203.2 545.5,202.3 546.0,201.5 546.5,200.7 547.0,199.9 547.5,199.9 548.0,199.8 548.5,199.8 549.0,199.7 549.5,199.7 550.0,199.6 550.5,199.6 551.0,199.5 551.5,199.5 552.0,199.5 552.5,199.5 553.0,199.6 553.5,199.6 554.0,199.7 554.5,199.7 555.0,199.8 555.5,199.8 556.0,199.9 556.5,200.0 557.0,200.8 557.5,201.7 558.0,202.5 558.5,203.3 559.0,204.2 559.5,205.8 560.0,207.7 560.5,209.6 561.0,211.5 561.5,213.4 562.0,215.3 562.5,217.2 563.0,219.1 563.5,221.3 564.0,224.3 564.5,227.3 565.0,230.4 565.5,233.4 566.0,236.4 566.5,247.7 567.0,259.4 567.5,271.1 568.0,282.7 568.5,291.4 569.0,299.0 569.5,300.5 570.0,298.0 570.5,296.1 571.0,294.6 571.5,297.3 572.0,299.1 572.5,300.0 573.0,300.6 573.5,301.9 574.0,304.8 574.5,309.0 575.0,313.4 575.5,316.0 576.0,316.8 576.5,316.0 577.0,314.5 577.5,313.4 578.0,313.7 578.5,315.8 579.0,319.7 579.5,330.2 580.0,339.7 580.5,347.4 581.0,353.6 581.5,359.1 582.0,359.0 582.5,358.3 583.0,361.2 583.5,366.5 584.0,372.0 584.5,375.2 585.0,374.6 585.5,370.6 586.0,365.3 586.5,361.5 587.0,361.2 587.5,364.7 588.0,370.4 588.5,375.5 589.0,377.8 589.5,376.3 590.0,371.9 590.5,366.9 591.0,363.6 591.5,363.8 592.0,367.3 592.5,372.7 593.0,377.5 593.5,379.7 594.0,378.3 594.5,374.0 595.0,369.0 595.5,365.8 596.0,366.3 596.5,370.5 597.0,376.7 597.5,382.1 598.0,384.3 598.5,382.2 599.0,377.1 599.5,371.5 600.0,368.2 600.5,368.8 601.0,373.4 601.5,379.7 602.0,385.1 602.5,387.1 603.0,384.8 603.5,379.3 604.0,373.3 604.5,369.8 605.0,371.0 605.5,376.6 606.0,384.1 606.5,389.9 607.0,391.2 607.5,387.3 608.0,380.5 608.5,374.1 609.0,371.5 609.5,373.6 610.0,379.3 610.5,385.8 611.0,390.1 611.5,390.2 612.0,386.3 612.5,380.3 613.0,375.1 613.5,373.4 614.0,376.2 614.5,382.3 615.0,389.0 615.5,393.2 616.0,393.1 616.5,388.8 617.0,382.4 617.5,377.0 618.0,375.3 618.5,378.4 619.0,385.4 619.5,393.3 620.0,398.5 620.5,398.7 621.0,393.6 621.5,386.0 622.0,379.5 622.5,377.0 623.0,379.8 623.5,386.7 624.0,394.7 624.5,400.4 625.0,401.3 625.5,396.9 626.0,389.1 626.5,381.8 627.0,378.8 627.4,380.9 627.5,381.9 628.0,389.8 628.5,398.5 629.0,403.9 629.5,403.6 630.0,397.9 630.5,389.6 631.0,382.6 631.5,380.3 632.0,384.0 632.5,392.1 633.0,400.8 633.5,406.0 634.0,405.2 634.5,398.9 635.0,390.3 635.5,383.7 636.0,382.3 636.5,386.9 637.0,395.4 637.5,403.7 638.0,408.1 638.5,406.4 639.0,399.3 639.5,390.4 640.0,384.1 640.5,383.7 641.0,389.8 641.5,399.6 642.0,408.6 642.5,412.6 643.0,409.7 643.5,401.1 644.0,391.0 644.5,384.6 645.0,385.2 645.5,392.8 646.0,404.4 646.5,416.9 647.0,422.4 647.5,413.1 648.0,400.4 648.5,389.9 649.0,384.4 649.5,386.3 650.0,394.8 650.5,405.8 651.0,414.3 651.5,415.9 652.0,409.5 652.5,399.0 653.0,389.6 653.5,385.9 654.0,389.9 654.5,400.0 655.0,411.5 655.5,419.4 656.0,420.1 656.5,413.2 657.0,402.0 657.5,392.1 658.0,388.4 658.5,393.0 659.0,403.6 659.5,415.0 660.0,422.0 660.5,421.7 661.0,414.4 661.5,403.4 662.0,393.7 662.5,389.5 663.0,392.9 663.5,402.9 664.0,415.2 664.5,424.2 665.0,425.7 665.5,418.9 666.0,407.0 666.5,396.0 667.0,391.4 667.5,395.5 668.0,406.2 668.5,418.5 669.0,427.0 669.5,426.4 670.0,417.1 670.5,404.6 671.0,394.1 671.5,390.6 672.0,396.0 672.5,408.2 673.0,421.7 673.5,429.8 674.0,428.5 674.5,418.2 675.0,404.2 675.5,393.6 676.0,391.6 676.5,399.2 676.6,401.7 677.0,412.6 677.5,426.0 678.0,433.5 678.5,428.3 679.0,415.8 679.5,403.1 680.0,394.7 680.5,394.8 680.7,397.4 681.0,403.8 681.5,418.8 682.0,437.8 682.5,449.3 683.0,436.7 683.5,418.4 684.0,403.1 684.5,394.0 685.0,395.2 685.5,405.7 686.0,420.1 686.5,431.2 687.0,433.7 687.5,426.8 688.0,413.8 688.5,400.5 689.0,392.9 689.5,394.5 690.0,404.5 690.5,417.9 691.0,428.0 691.5,429.7 691.6,428.3 692.0,421.7 692.5,409.3 693.0,397.6 693.5,392.0 694.0,395.2 694.5,406.0 695.0,420.1 695.5,431.5 696.0,434.5 696.5,427.4 697.0,413.5 697.5,399.4 698.0,392.5 698.5,396.8 699.0,410.7 699.5,427.6 700.0,439.2 700.5,439.8 701.0,429.3 701.5,413.0 702.0,399.0 702.5,394.0 703.0,400.2 703.5,415.0 704.0,431.8 704.5,442.9 705.0,443.2 705.3,438.3 705.5,433.4 706.0,415.9 706.5,401.2 707.0,397.1 707.5,406.3 708.0,424.6 708.5,443.4 709.0,454.0 709.5,450.3 710.0,434.9 710.5,415.9 711.0,401.7 711.5,398.5 712.0,407.1 712.5,422.6 713.0,437.4 713.5,444.6 714.0,441.1 714.5,428.7 715.0,413.0"/>
<polyline fill="none" stroke="#7570b3" stroke-width="2" stroke-linejoin="round" points="81.0,437.1 81.5,444.7 82.0,439.7 82.5,424.0 83.0,405.0 83.5,392.0 84.0,391.6 84.5,404.5 85.0,424.7 85.5,442.5 86.0,449.6 86.5,442.9 87.0,426.0 87.5,407.1 88.0,394.9 88.5,394.7 89.0,406.3 89.5,424.4 90.0,445.1 90.5,457.3 91.0,444.0 91.5,422.6 92.0,404.4 92.5,393.3 93.0,393.9 93.5,405.8 94.0,423.9 94.5,446.0 95.0,457.3 95.2,453.1 95.5,440.6 96.0,419.4 96.5,402.0 97.0,392.8 97.5,396.3 98.0,411.1 98.5,429.8 99.0,443.2 99.5,444.5 100.0,432.9 100.5,413.8 101.0,396.4 101.5,389.1 102.0,395.1 102.5,411.6 103.0,430.6 103.5,443.8 104.0,443.1 104.5,429.3 105.0,410.7 105.5,395.5 106.0,390.3 106.5,397.4 107.0,413.1 107.5,430.3 108.0,441.0 108.5,439.3 109.0,464.7 109.5,501.7 109.8,524.0 110.0,509.2 110.5,472.1 111.0,435.0 111.5,414.0 112.0,429.6 112.5,437.0 113.0,432.6 113.5,418.2 114.0,400.9 114.5,389.3 115.0,389.4 115.5,401.6 116.0,420.3 116.5,436.7 117.0,443.2 117.5,437.1 118.0,421.7 118.5,404.4 119.0,393.0 119.5,392.5 120.0,403.1 120.5,421.0 121.0,446.2 121.5,469.8 122.0,457.5 122.3,440.9 122.5,431.1 123.0,410.1 123.5,395.5 124.0,392.4 124.5,402.1 125.0,419.8 125.5,436.7 126.0,444.7 126.5,440.0 127.0,424.7 127.5,406.2 128.0,393.4 128.5,392.6 129.0,403.9 129.5,421.9 130.0,441.2 130.5,451.4 131.0,440.5 131.5,421.4 132.0,403.3 132.5,391.9 133.0,392.7 133.5,405.8 134.0,426.9 134.5,459.8 135.0,482.3 135.5,454.0 136.0,422.8 136.5,403.4 137.0,392.6 137.5,394.1 138.0,406.8 138.5,424.1 139.0,437.5 139.5,440.6 140.0,432.0 140.5,415.8 141.0,399.7 141.5,391.4 142.0,394.8 142.5,408.6 143.0,426.4 143.5,439.6 144.0,441.9 144.5,432.1 145.0,414.8 145.5,398.4 145.8,392.6 146.0,391.1 146.5,396.6 147.0,412.1 147.5,430.1 148.0,441.8 148.5,441.6 149.0,430.1 149.5,412.9 150.0,398.6 150.5,394.1 151.0,401.9 151.5,418.6 152.0,436.4 152.5,446.8 153.0,444.5 153.5,430.6 154.0,412.1 154.5,397.8 155.0,394.3 155.5,402.6 156.0,418.4 156.5,440.0 157.0,462.7 157.5,452.4 158.0,426.0 158.5,407.5 159.0,395.1 159.5,391.6 160.0,398.3 160.5,412.0 161.0,426.7 161.5,436.1 162.0,435.7 162.5,425.1 163.0,409.1 163.5,395.6 163.6,394.0 164.0,391.9 164.5,400.4 165.0,417.7 165.5,435.3 166.0,444.7 166.5,441.2 167.0,426.7 167.5,408.0 168.0,394.5 168.5,392.8 169.0,403.6 169.5,421.8 170.0,439.7 170.5,448.3 171.0,440.1 171.5,422.1 172.0,403.4 172.5,391.7 173.0,392.2 173.5,404.4 174.0,422.8 174.5,443.4 175.0,452.9 175.5,438.0 176.0,417.7 176.5,400.0 177.0,390.4 177.5,393.5 178.0,407.8 178.5,426.0 179.0,439.1 179.5,441.0 180.0,431.1 180.5,414.1 181.0,397.9 181.5,389.7 182.0,393.5 182.5,407.9 183.0,428.0 183.5,449.9 184.0,456.0 184.5,438.1 185.0,417.3 185.5,400.3 186.0,392.4 186.5,397.1 187.0,411.3 187.5,427.6 188.0,437.8 188.5,437.3 189.0,426.3 189.5,410.1 190.0,395.8 190.5,390.3 191.0,396.9 191.5,413.4 192.0,432.6 192.5,445.4 193.0,445.6 193.5,433.1 194.0,414.2 194.5,398.2 195.0,393.2 195.5,401.6 196.0,419.6 196.5,438.7 197.0,450.1 197.5,448.4 198.0,434.6 198.5,415.3 199.0,399.7 199.5,395.0 200.0,403.1 200.5,419.9 201.0,437.1 201.5,446.3 202.0,442.8 202.5,428.1 203.0,409.4 203.5,396.3 204.0,395.7 204.5,408.0 205.0,427.0 205.5,443.0 206.0,447.7 206.5,438.9 207.0,421.3 207.5,403.8 208.0,394.7 208.5,397.7 209.0,411.0 209.5,428.2 210.0,441.6 210.5,445.2 211.0,437.3 211.5,421.0 212.0,403.9 212.5,394.1 213.0,396.3 213.5,409.3 214.0,426.7 214.5,441.3 215.0,446.0 215.5,436.9 216.0,421.0 216.5,405.4 217.0,395.9 217.5,396.2 218.0,405.7 218.5,420.4 219.0,437.1 219.5,446.7 220.0,436.4 220.5,419.8 221.0,404.5 221.5,395.2 222.0,396.9 222.5,409.8 223.0,427.8 223.5,441.8 224.0,444.8 224.5,435.3 225.0,417.9 225.5,401.1 226.0,392.7 226.5,396.4 227.0,410.7 227.5,429.2 228.0,443.2 228.5,446.2 229.0,436.3 229.5,418.4 230.0,401.0 230.5,393.0 231.0,398.4 231.5,414.6 232.0,433.6 232.5,446.0 233.0,445.8 233.5,433.5 234.0,415.2 234.5,399.8 235.0,394.1 235.5,399.7 236.0,413.3 236.5,428.0 237.0,436.9 237.5,435.3 238.0,423.8 238.5,407.8 239.0,395.2 239.5,392.8 240.0,402.6 240.5,420.5 241.0,438.0 241.5,446.6 242.0,441.3 242.5,425.7 243.0,407.7 243.5,395.9 244.0,395.2 244.5,405.5 245.0,421.4 245.5,435.7 246.0,441.8 246.5,437.4 247.0,424.3 247.5,408.4 248.0,397.0 248.5,395.6 249.0,405.2 249.5,422.1 250.0,438.7 250.5,447.0 251.0,442.7 251.5,427.5 252.0,408.6 252.5,394.9 253.0,393.0 253.5,403.9 254.0,422.6 254.5,442.3 255.0,453.8 255.5,445.4 256.0,426.6 256.5,407.4 257.0,395.0 257.5,395.6 258.0,409.3 258.5,429.9 259.0,447.3 259.5,453.2 260.0,444.8 260.5,426.6 261.0,407.6 261.5,396.6 262.0,398.1 262.5,410.7 263.0,428.2 263.5,442.7 264.0,447.8 264.5,441.3 265.0,426.1 265.5,409.1 266.0,398.2 266.5,399.1 267.0,411.8 267.5,430.5 268.0,446.6 268.5,452.4 269.0,445.2 269.5,428.3 270.0,409.6 270.5,397.8 271.0,397.9 271.5,409.4 272.0,426.1 272.5,439.6 273.0,443.4 273.5,435.8 274.0,420.5 274.5,404.4 275.0,395.0 275.5,396.5 276.0,408.6 276.5,425.9 277.0,440.3 277.5,444.5 278.0,436.3 278.5,419.6 279.0,403.0 279.5,395.0 280.0,399.9 280.5,415.2 281.0,433.5 281.5,446.5 282.0,445.7 282.5,431.6 283.0,413.3 283.5,398.5 284.0,393.7 284.5,400.4 285.0,414.8 285.5,431.7 286.0,445.4 286.5,440.9 287.0,424.1 287.5,407.7 288.0,395.6 288.5,392.9 289.0,401.3 289.5,417.3 290.0,433.6 290.5,442.3 291.0,439.1 291.5,425.2 292.0,407.6 292.5,394.9 293.0,393.1 293.5,403.2 294.0,420.4 294.5,439.9 295.0,453.5 295.5,444.9 296.0,426.3 296.5,409.2 297.0,397.7 297.5,396.5 298.0,406.1 298.5,422.3 299.0,441.3 299.5,456.7 300.0,449.5 300.5,430.1 301.0,412.6 301.5,399.7 302.0,396.4 302.5,404.4 303.0,420.2 303.5,436.3 304.0,445.0 304.5,442.0 305.0,428.4 305.5,410.5 306.0,397.2 306.5,395.4 307.0,406.6 307.5,425.8 308.0,443.6 308.5,451.1 309.0,444.5 309.5,427.0 310.0,407.5 310.5,396.1 311.0,398.8 311.5,414.5 312.0,436.0 312.5,454.8 313.0,459.2 313.5,444.4 314.0,423.2 314.5,404.3 315.0,394.9 315.5,398.3 316.0,412.2 316.5,429.4 317.0,441.6 317.5,442.9 318.0,432.8 318.5,415.8 319.0,399.8 319.5,392.1 320.0,395.9 320.5,409.4 321.0,426.2 321.5,439.0 322.0,440.5 322.5,429.5 323.0,413.1 323.5,398.5 324.0,392.3 324.5,397.1 325.0,410.5 325.5,425.9 326.0,435.7 326.5,435.3 327.0,425.1 327.5,410.0 328.0,397.1 328.5,392.7 329.0,398.8 329.5,413.1 330.0,429.5 330.5,441.0 331.0,441.1 331.5,429.6 332.0,412.6 332.5,397.7 333.0,392.1 333.5,399.3 334.0,416.2 334.5,436.8 335.0,454.7 335.5,451.9 336.0,431.7 336.5,411.6 337.0,396.7 337.5,392.3 338.0,399.9 338.5,415.1 339.0,430.5 339.5,438.7 340.0,436.0 340.5,423.9 341.0,408.0 341.5,395.9 342.0,393.8 342.5,403.0 343.0,419.5 343.5,436.4 344.0,444.8 344.5,436.4 345.0,419.1 345.5,401.8 346.0,391.3 346.5,392.2 347.0,403.8 347.5,421.1 348.0,440.1 348.5,447.7 349.0,433.9 349.5,415.3 350.0,399.4 350.5,391.0 351.0,393.8 351.5,406.0 352.0,421.1 352.5,432.0 353.0,433.6 353.5,425.7 354.0,412.0 354.5,398.7 355.0,391.7 355.5,394.6 356.0,406.4 356.5,421.8 357.0,433.6 357.5,436.1 358.0,428.1 358.5,413.6 359.0,399.4 359.5,392.2 360.0,395.3 360.5,406.9 361.0,421.8 361.5,432.7 362.0,434.4 362.5,426.0 363.0,411.1 363.5,396.8 364.0,389.8 364.5,393.2 365.0,405.2 365.5,419.5 366.0,429.0 366.5,429.1 367.0,419.6 367.5,405.4 368.0,393.0 368.5,388.0 369.0,392.8 369.5,405.2 370.0,419.5 370.5,429.0 371.0,429.1 371.5,419.7 372.0,405.6 372.5,394.0 373.0,391.2 373.5,399.2 374.0,414.3 374.5,429.3 375.0,436.9 375.5,433.5 376.0,420.9 376.5,405.4 377.0,394.6 377.5,393.2 378.0,401.7 378.5,415.7 379.0,428.5 379.5,434.4 380.0,430.4 380.5,418.4 381.0,403.6 381.5,392.8 382.0,390.9 382.5,398.7 383.0,412.3 383.5,425.7 384.0,432.7 384.5,427.5 385.0,414.4 385.5,400.5 386.0,391.0 386.5,389.7 387.0,396.6 387.5,408.2 388.0,418.7 388.5,423.2 389.0,419.6 389.5,409.4 390.0,397.7 390.5,389.7 391.0,389.2 391.5,396.4 392.0,408.1 392.5,419.5 393.0,425.0 393.5,420.4 394.0,409.0 394.5,396.4 395.0,387.9 395.5,387.7 396.0,395.5 396.5,407.3 397.0,416.8 397.5,419.4 398.0,413.8 398.5,402.9 399.0,391.7 399.5,385.4 400.0,386.4 400.5,394.1 401.0,404.7 401.5,413.3 402.0,415.4 402.5,409.6 403.0,399.4 403.5,389.6 404.0,384.6 404.5,387.0 405.0,395.8 405.5,407.1 406.0,415.6 406.5,417.2 407.0,411.0 407.5,399.9 408.0,389.4 408.5,384.4 409.0,387.0 409.5,395.4 410.0,405.0 410.5,410.8 411.0,409.9 411.5,403.0 412.0,393.4 412.5,385.5 413.0,382.7 413.5,385.8 414.0,392.9 414.5,400.4 415.0,404.5 415.5,403.2 416.0,397.1 416.5,389.1 417.0,382.7 417.5,380.9 418.0,384.3 418.5,391.1 419.0,398.2 419.5,402.2 420.0,400.6 420.5,394.2 421.0,386.5 421.5,380.6 422.0,379.4 422.5,383.5 423.0,391.3 423.5,399.7 424.0,404.9 424.5,403.5 425.0,396.7 425.5,388.1 426.0,381.4 426.5,379.6 427.0,383.4 427.5,391.0 428.0,398.8 428.5,403.1 429.0,401.7 429.5,395.1 430.0,386.6 430.5,380.0 431.0,378.3 431.5,382.0 432.0,389.0 432.5,395.5 433.0,398.2 433.5,395.7 434.0,389.2 434.5,381.7 435.0,376.5 435.5,375.8 436.0,379.6 436.5,385.9 437.0,391.5 437.5,393.4 438.0,390.5 438.5,383.9 439.0,376.9 439.5,372.7 440.0,373.2 440.5,378.1 441.0,385.0 441.5,390.6 442.0,392.3 442.5,389.0 443.0,382.3 443.5,375.5 444.0,372.0 444.5,373.6 445.0,379.7 445.5,387.0 446.0,391.8 446.5,391.6 447.0,386.5 447.5,379.0 448.0,372.7 448.5,370.1 449.0,371.9 449.5,377.0 450.0,382.9 450.5,386.6 451.0,386.5 451.5,382.4 452.0,376.2 452.5,370.7 453.0,368.4 453.5,370.1 454.0,374.9 454.5,380.4 455.0,383.9 455.5,383.8 456.0,380.1 456.5,374.2 457.0,368.9 457.5,366.5 458.0,368.2 458.5,373.4 459.0,379.4 459.5,383.3 460.0,382.8 460.5,378.1 461.0,371.6 461.5,366.2 462.0,364.5 462.5,366.9 463.0,371.8 463.5,376.7 464.0,379.0 464.5,377.7 465.0,373.2 465.5,367.5 466.0,363.2 466.5,362.1 467.0,364.5 467.5,369.2 468.0,373.7 468.5,375.7 469.0,374.2 469.5,369.7 470.0,364.2 470.5,360.2 471.0,359.5 471.5,362.5 472.0,367.8 472.5,372.7 473.0,374.9 473.5,372.9 474.0,364.4 474.5,353.6 475.0,343.8 475.5,335.7 476.0,329.2 476.5,323.6 477.0,321.3 477.5,321.1 478.0,319.1 478.5,315.8 479.0,312.3 479.5,309.7 480.0,308.8 480.5,309.5 481.0,310.2 481.5,310.4 482.0,308.6 482.5,305.0 483.0,300.8 483.5,297.0 484.0,294.2 484.5,292.2 485.0,294.8 485.5,297.5 486.0,299.9 486.5,298.8 487.0,291.1 487.5,282.2 488.0,270.3 488.5,258.4 489.0,246.6 489.5,235.7 490.0,232.6 490.5,229.5 491.0,226.5 491.5,223.4 492.0,220.3 492.5,218.3 493.0,216.3 493.5,214.4 494.0,212.5 494.5,210.5 495.0,208.6 495.5,206.7 496.0,204.7 496.5,203.4 497.0,202.6 497.5,201.7 498.0,200.9 498.5,200.0 499.0,199.5 499.5,199.4 500.0,199.4 500.5,199.3 501.0,199.3 501.5,199.2 502.0,199.2 502.5,199.1 503.0,199.0 503.5,199.0 504.0,199.0 504.5,199.1 505.0,199.2 505.5,199.2 506.0,199.3 506.5,199.3 507.0,199.4 507.5,199.4 508.0,199.5 508.5,200.0 509.0,200.9 509.5,201.7 510.0,202.6 510.5,203.4 511.0,204.7 511.5,206.7 512.0,208.6 512.5,210.5 513.0,212.5 513.5,214.4 514.0,216.3 514.5,218.3 515.0,220.3 515.5,223.4 516.0,226.5 516.5,229.5 517.0,232.6 517.5,235.7 518.0,246.6 518.5,258.4 519.0,270.3 519.5,282.2 520.0,291.1 520.5,298.8 521.0,299.9 521.5,297.6 522.0,295.9 522.5,294.2 523.0,296.0 523.5,297.0 524.0,298.1 524.5,300.1 525.0,303.7 525.5,308.4 526.0,312.5 526.5,314.9 527.0,314.8 527.5,313.4 528.0,312.0 528.5,311.7 529.0,313.1 529.5,316.0 530.0,319.6 530.5,326.0 531.0,334.6 531.5,341.5 532.0,347.3 532.5,353.1 533.0,357.9 533.5,359.2 534.0,363.9 534.5,369.9 535.0,374.4 535.5,375.4 536.0,372.6 536.5,367.5 537.0,362.5 537.5,360.3 538.0,361.9 538.5,366.6 539.0,372.3 539.5,376.4 540.0,377.0 540.5,374.1 541.0,369.1 541.5,364.6 542.0,362.9 542.5,364.8 543.0,369.7 543.5,375.4 544.0,379.5 544.5,380.1 545.0,377.0 545.5,371.7 546.0,366.9 546.5,365.2 547.0,367.8 547.5,373.6 548.0,380.0 548.5,384.1 549.0,384.1 549.5,380.1 550.0,374.1 550.5,369.1 551.0,367.4 551.5,369.9 552.0,375.6 552.5,382.1 553.0,386.4 553.5,386.5 554.0,382.4 554.5,376.3 555.0,371.2 555.5,370.0 556.0,373.4 556.5,379.7 557.0,385.8 557.5,388.7 558.0,387.0 558.5,381.8 559.0,375.8 559.5,371.9 560.0,372.0 560.5,376.2 561.0,382.6 561.5,388.3 562.0,390.5 562.5,388.2 563.0,382.6 563.5,376.8 564.0,373.5 564.5,374.4 565.0,379.0 565.5,385.0 566.0,389.9 566.5,391.6 567.0,389.3 567.5,383.9 568.0,378.1 568.5,374.5 569.0,375.4 569.5,380.5 570.0,387.6 570.5,393.5 571.0,395.3 571.5,392.3 572.0,386.0 572.5,379.5 573.0,376.1 573.5,377.5 574.0,383.1 574.5,390.4 575.0,396.2 575.5,397.8 576.0,394.6 576.5,388.0 577.0,381.3 577.5,378.0 578.0,380.0 578.5,386.9 579.0,395.8 579.5,402.7 580.0,404.5 580.5,400.3 581.0,392.2 581.5,384.3 582.0,380.7 582.5,383.4 583.0,391.1 583.5,400.2 584.0,406.2 584.5,406.5 585.0,400.9 585.5,392.3 586.0,384.5 586.5,381.4 587.0,384.3 587.5,391.9 588.0,400.6 588.5,406.4 589.0,406.6 589.5,401.4 590.0,393.2 590.5,385.8 591.0,382.7 591.5,385.5 592.0,393.2 592.5,402.5 593.0,409.3 593.5,410.7 594.0,406.1 594.5,397.7 595.0,389.5 595.5,385.1 596.0,386.5 596.5,393.2 597.0,402.7 597.5,412.2 598.0,415.9 598.5,409.5 599.0,399.5 599.5,432.9 600.0,470.0 600.5,432.9 601.0,397.2 601.5,408.3 602.0,415.8 602.5,415.9 603.0,408.3 603.5,397.3 604.0,388.5 604.5,386.9 605.0,393.6 605.5,405.4 606.0,416.4 606.5,421.1 607.0,417.3 607.5,407.2 608.0,395.7 608.5,388.4 609.0,388.8 609.5,396.8 610.0,408.8 610.5,419.4 611.0,423.7 611.5,419.6 612.0,409.0 612.5,397.1 613.0,389.8 613.5,390.7 614.0,399.2 614.5,411.1 615.0,420.7 615.5,423.6 616.0,418.6 616.5,408.1 617.0,396.9 617.5,390.2 618.0,391.3 618.5,399.8 619.0,412.0 619.5,421.9 620.0,424.9 620.5,419.4 621.0,408.1 621.5,396.7 622.0,391.0 622.5,394.1 623.0,404.9 623.5,419.3 624.0,433.5 624.5,435.6 625.0,423.2 625.5,409.1 626.0,397.6 626.5,393.2 627.0,397.8 627.4,406.5 627.5,408.9 628.0,421.3 628.5,429.2 629.0,428.9 629.5,420.5 630.0,407.8 630.5,396.8 631.0,392.8 631.5,398.0 632.0,410.1 632.5,423.2 633.0,431.1 633.5,430.0 634.0,420.6 634.5,407.1 635.0,395.9 635.5,391.8 636.0,396.8 636.5,408.7 637.0,421.9 637.5,430.4 638.0,430.1 638.5,421.2 639.0,407.6 639.5,395.8 640.0,391.6 640.5,397.2 641.0,410.3 641.5,425.2 642.0,435.4 642.5,434.7 643.0,423.6 643.5,408.9 644.0,396.9 644.5,393.2 645.0,399.7 645.5,413.5 646.0,427.9 646.5,436.1 647.0,434.2 647.5,423.3 648.0,408.8 648.5,397.5 649.0,394.8 649.5,401.8 650.0,415.4 650.5,432.5 651.0,447.2 651.5,439.5 652.0,421.5 652.5,406.8 653.0,397.2 653.5,396.9 654.0,406.2 654.5,421.1 655.0,434.7 655.5,440.6 656.0,435.8 656.5,422.7 657.0,407.9 657.5,398.9 658.0,400.3 658.5,411.6 659.0,427.8 659.5,442.6 660.0,448.6 660.5,441.0 661.0,425.7 661.5,410.0 662.0,400.0 662.5,400.5 663.0,411.6 663.5,428.3 664.0,442.8 664.5,448.1 665.0,441.4 665.5,426.0 666.0,409.4 666.5,399.7 667.0,401.9 667.5,414.8 668.0,433.8 668.5,459.2 669.0,468.9 669.5,445.7 670.0,423.0 670.5,406.6 671.0,398.2 671.5,401.6 672.0,415.5 672.5,436.2 673.0,464.1 673.5,472.9 674.0,448.2 674.5,424.7 675.0,407.4 675.5,402.4 676.0,439.5 676.5,476.6 676.6,484.0 677.0,454.3 677.5,450.3 678.0,450.1 678.5,437.7 679.0,419.0 679.5,403.0 680.0,397.5 680.5,404.8 680.7,410.6 681.0,421.2 681.5,438.8 682.0,448.9 682.5,446.9 683.0,433.7 683.5,415.6 684.0,401.2 684.5,397.1 685.0,405.2 685.5,421.6 686.0,438.8 686.5,449.8 687.0,447.2 687.5,433.3 688.0,416.4 688.5,403.1 689.0,399.2 689.5,406.5 690.0,422.0 690.5,438.6 691.0,448.3 691.5,446.6 691.6,444.9 692.0,434.2 692.5,416.7 693.0,402.4 693.5,398.0 694.0,405.9 694.5,422.8 695.0,441.3 695.5,452.6 696.0,451.4 696.5,438.1 697.0,419.2 697.5,404.5 698.0,401.5 698.5,412.0 699.0,430.9 699.5,448.7 700.0,457.0 700.5,451.7 701.0,435.5 701.5,416.2 702.0,403.4 702.5,403.2 703.0,415.7 703.5,434.7 704.0,450.4 704.5,455.2 705.0,446.8 705.3,436.6 705.5,428.8 706.0,411.2 706.5,401.4 707.0,403.7 707.5,416.5 708.0,433.9 708.5,447.4 709.0,450.8 709.5,442.1 710.0,425.5 710.5,408.9 711.0,400.6 711.5,404.9 712.0,419.7 712.5,437.9 713.0,450.5 713.5,451.6 714.0,440.6 714.5,422.8 715.0,406.5"/>
<polyline fill="none" stroke="#e7298a" stroke-width="2" stroke-linejoin="round" points="81.0,433.2 81.5,445.9 82.0,445.9 82.5,433.1 83.0,413.7 83.5,397.1 84.0,391.7 84.5,400.4 85.0,419.2 85.5,439.0 86.0,450.2 86.5,447.5 87.0,432.2 87.5,411.7 88.0,395.5 88.5,390.9 89.0,400.0 89.5,418.7 90.0,447.6 90.5,484.6 91.0,473.4 91.5,434.8 92.0,411.2 92.5,396.3 93.0,392.2 93.5,400.0 94.0,415.5 94.5,431.3 95.0,440.4 95.2,441.3 95.5,439.3 96.0,427.6 96.5,410.4 97.0,396.0 97.5,392.2 98.0,401.3 98.5,419.2 99.0,436.7 99.5,444.7 100.0,439.2 100.5,423.0 101.0,404.5 101.5,393.1 102.0,394.0 102.5,406.6 103.0,424.4 103.5,440.3 104.0,445.1 104.5,434.6 105.0,417.2 105.5,400.3 106.0,391.1 106.5,394.3 107.0,408.8 107.5,428.3 108.0,443.6 108.5,447.7 109.0,438.6 109.5,420.7 109.8,409.4 110.0,403.0 110.5,392.7 111.0,395.6 111.5,410.6 112.0,431.0 112.5,447.4 113.0,451.7 113.5,441.6 114.0,422.1 114.5,402.6 115.0,392.4 115.5,395.7 116.0,410.0 116.5,427.5 117.0,439.7 117.5,441.0 118.0,431.2 118.5,414.9 119.0,399.8 119.5,392.6 120.0,396.9 120.5,410.5 121.0,426.9 121.5,438.2 122.0,438.6 122.3,433.2 122.5,427.9 123.0,411.4 123.5,396.8 124.0,391.1 124.5,397.6 125.0,413.9 125.5,439.6 126.0,476.9 126.5,473.9 127.0,437.5 127.5,413.8 128.0,398.5 128.5,393.9 129.0,401.8 129.5,417.6 130.0,433.2 130.5,440.9 131.0,437.3 131.5,424.1 132.0,407.5 132.5,395.0 133.0,392.1 133.5,400.1 134.0,415.3 134.5,430.8 135.0,439.7 135.5,437.9 136.0,426.3 136.5,410.0 137.0,397.1 137.5,394.2 138.0,403.4 138.5,421.1 139.0,438.9 139.5,448.5 140.0,445.4 140.5,431.4 141.0,413.1 141.5,398.9 142.0,394.8 142.5,402.1 143.0,417.2 143.5,433.1 144.0,442.5 144.5,441.0 145.0,429.0 145.5,412.3 145.8,403.4 146.0,399.1 146.5,395.9 147.0,404.6 147.5,421.2 148.0,437.8 148.5,446.7 149.0,443.2 149.5,428.8 150.0,410.3 150.5,396.8 151.0,395.0 151.5,405.7 152.0,423.4 152.5,439.1 153.0,444.9 153.5,437.7 154.0,420.8 154.5,402.3 155.0,391.1 155.5,392.3 156.0,404.8 156.5,422.2 157.0,436.0 157.5,439.8 158.0,431.9 158.5,416.2 159.0,400.2 159.5,391.9 160.0,395.8 160.5,410.8 161.0,429.8 161.5,443.5 162.0,445.1 162.5,434.0 163.0,416.0 163.5,399.8 163.6,397.3 164.0,393.0 164.5,398.6 165.0,413.4 165.5,430.7 166.0,442.4 166.5,442.7 167.0,431.2 167.5,413.3 168.0,398.2 168.5,393.7 169.0,402.5 169.5,420.2 170.0,438.0 170.5,447.5 171.0,444.2 171.5,430.2 172.0,411.8 172.5,397.5 173.0,393.6 173.5,401.8 174.0,418.6 174.5,436.3 175.0,446.8 175.5,445.1 176.0,431.9 176.5,413.3 177.0,398.1 177.5,393.5 178.0,401.6 178.5,418.9 179.0,439.9 179.5,458.9 180.0,454.6 180.5,433.2 181.0,413.0 181.5,397.9 182.0,393.7 182.5,402.8 183.0,420.8 183.5,439.1 184.0,448.5 184.5,443.5 185.0,427.2 185.5,408.1 186.0,394.9 186.5,393.6 187.0,404.3 187.5,422.0 188.0,442.2 188.5,454.2 189.0,441.8 189.5,421.7 190.0,404.3 190.5,393.7 191.0,394.5 191.5,407.0 192.0,426.1 192.5,443.0 193.0,449.9 193.5,443.1 194.0,425.9 194.5,406.7 195.0,395.2 195.5,397.0 196.0,411.2 196.5,430.7 197.0,446.1 197.5,449.8 198.0,440.3 198.5,422.1 199.0,403.7 199.5,393.9 200.0,397.1 200.5,411.6 201.0,430.6 201.5,445.1 202.0,448.4 202.5,439.0 203.0,421.2 203.5,403.6 204.0,394.8 204.5,399.4 205.0,415.6 205.5,435.5 206.0,449.5 206.5,450.6 207.0,438.5 207.5,418.8 208.0,401.0 208.5,393.0 209.0,398.1 209.5,413.5 210.0,431.5 210.5,443.4 211.0,443.4 211.5,431.5 212.0,413.5 212.5,397.8 213.0,392.1 213.5,399.1 214.0,415.5 214.5,433.6 215.0,444.7 215.5,443.1 216.0,429.6 216.5,410.8 217.0,396.1 217.5,393.2 218.0,403.7 218.5,422.7 219.0,441.4 219.5,451.1 220.0,444.7 220.5,427.1 221.0,407.5 221.5,394.1 222.0,392.8 222.5,403.2 223.0,420.0 223.5,437.2 224.0,447.4 224.5,439.4 225.0,422.5 225.5,406.3 226.0,395.0 226.5,393.6 227.0,402.9 227.5,419.2 228.0,435.2 228.5,443.5 229.0,440.0 229.5,426.1 230.0,408.5 230.5,395.7 231.0,393.5 231.5,403.1 232.0,419.6 232.5,435.2 233.0,442.5 233.5,437.8 234.0,423.2 234.5,405.6 235.0,393.3 235.5,392.2 236.0,402.9 236.5,420.2 237.0,435.8 237.5,442.2 238.0,436.5 238.5,421.4 239.0,404.1 239.5,392.9 240.0,393.4 240.5,405.8 241.0,424.8 241.5,441.2 242.0,446.7 242.5,438.5 243.0,420.7 243.5,402.5 244.0,392.8 244.5,395.9 245.0,409.6 245.5,426.7 246.0,439.4 246.5,441.9 247.0,433.2 247.5,417.3 248.0,401.5 248.5,393.4 249.0,397.5 249.5,412.3 250.0,431.9 250.5,451.0 251.0,454.3 251.5,437.0 252.0,416.7 252.5,399.8 253.0,392.2 253.5,397.5 254.0,413.2 254.5,432.1 255.0,445.2 255.5,446.4 256.0,435.2 256.5,417.0 257.0,400.5 257.5,393.7 258.0,399.9 258.5,415.9 259.0,433.9 259.5,445.5 260.0,445.4 260.5,433.8 261.0,416.3 261.5,400.6 262.0,393.5 262.5,397.7 263.0,410.6 263.5,425.8 264.0,436.2 264.5,437.1 265.0,428.1 265.5,413.4 266.0,399.6 266.5,393.3 267.0,397.5 267.5,410.9 268.0,427.4 268.5,439.4 269.0,441.0 269.5,431.2 270.0,414.5 270.5,399.4 271.0,393.5 271.5,400.0 272.0,415.7 272.5,432.4 273.0,441.8 273.5,439.3 274.0,426.2 274.5,408.7 275.0,395.1 275.5,392.0 276.0,401.3 276.5,419.0 277.0,436.6 277.5,445.5 278.0,441.1 278.5,425.7 279.0,406.8 279.5,393.8 280.0,392.9 280.5,404.4 281.0,422.6 281.5,439.2 282.0,446.2 282.5,440.6 283.0,424.8 283.5,406.4 284.0,394.2 284.5,394.2 285.0,406.8 285.5,426.1 286.0,442.9 286.5,449.1 287.0,441.9 287.5,424.9 288.0,406.5 288.5,395.3 289.0,395.8 289.5,406.7 290.0,422.4 290.5,439.8 291.0,447.8 291.5,433.8 292.0,415.8 292.5,400.8 293.0,392.2 293.5,394.2 294.0,406.8 294.5,424.7 295.0,439.4 295.5,443.4 296.0,434.2 296.5,416.6 297.0,399.7 297.5,392.1 298.0,397.6 298.5,413.2 299.0,430.8 299.5,441.8 300.0,440.9 300.5,428.9 301.0,411.8 301.5,397.9 302.0,393.5 302.5,400.0 303.0,413.6 303.5,427.5 304.0,435.4 304.5,433.9 305.0,423.8 305.5,409.6 306.0,397.6 306.5,393.1 307.0,398.8 307.5,412.4 308.0,428.6 308.5,440.8 309.0,441.4 309.5,429.8 310.0,413.7 310.5,399.6 311.0,393.6 311.5,398.4 312.0,411.7 312.5,427.0 313.0,437.0 313.5,436.5 314.0,425.7 314.5,409.5 315.0,395.7 315.5,391.3 316.0,398.7 316.5,414.7 317.0,431.3 317.5,440.2 318.0,436.9 318.5,423.1 319.0,405.8 319.5,393.7 320.0,392.1 320.5,401.0 321.0,415.2 321.5,427.7 322.0,432.6 322.5,427.7 323.0,415.1 323.5,400.2 324.0,390.1 324.5,389.9 325.0,400.3 325.5,416.5 326.0,430.5 326.5,435.1 327.0,427.7 327.5,412.2 328.0,396.5 328.5,388.7 329.0,392.2 329.5,404.8 330.0,420.0 330.5,430.2 331.0,430.3 331.5,420.2 332.0,405.1 332.5,392.4 333.0,388.1 333.5,394.1 334.0,407.3 334.5,421.2 335.0,429.3 335.5,427.9 336.0,417.8 336.5,403.9 337.0,392.3 337.5,388.2 338.0,392.8 338.5,403.3 339.0,414.7 339.5,422.1 340.0,422.3 340.5,415.2 341.0,404.0 341.5,393.4 342.0,388.1 342.5,390.6 343.0,399.8 343.5,411.7 344.0,420.3 344.5,421.6 345.0,414.8 345.5,403.2 346.0,392.2 346.5,386.6 347.0,389.0 347.5,397.8 348.0,408.6 348.5,416.2 349.0,416.7 349.5,409.9 350.0,399.1 350.5,389.7 351.0,386.1 351.5,389.9 352.0,399.5 352.5,410.2 353.0,416.9 353.5,416.4 354.0,408.8 354.5,397.6 355.0,388.2 355.5,385.1 356.0,389.5 356.5,399.2 357.0,410.2 357.5,418.4 358.0,416.2 358.5,406.0 359.0,395.5 359.5,387.8 360.0,385.3 360.5,388.9 361.0,396.5 361.5,404.7 362.0,409.8 362.5,409.3 363.0,403.1 363.5,393.8 364.0,385.9 364.5,383.3 365.0,387.5 365.5,396.6 366.0,406.0 366.5,411.1 367.0,409.3 367.5,401.4 368.0,391.3 368.5,383.7 369.0,381.9 369.5,386.3 370.0,394.5 370.5,402.4 371.0,406.1 371.5,403.9 372.0,396.7 372.5,387.8 373.0,381.2 373.5,380.2 374.0,385.1 374.5,393.7 375.0,402.2 375.5,406.5 376.0,403.6 376.5,395.5 377.0,386.2 377.5,379.9 378.0,379.7 378.5,385.5 379.0,394.2 379.5,401.5 380.0,403.5 380.5,399.3 381.0,390.9 381.5,382.5 382.0,377.9 382.5,378.8 383.0,384.6 383.5,392.0 384.0,397.4 384.5,398.1 385.0,393.8 385.5,386.5 386.0,379.5 386.5,376.0 387.0,377.5 387.5,383.3 388.0,390.4 388.5,395.5 389.0,396.0 389.5,391.6 390.0,384.3 390.5,377.6 391.0,374.7 391.5,376.8 392.0,382.6 392.5,389.2 393.0,393.2 393.5,392.5 394.0,387.6 394.5,380.7 395.0,374.9 395.5,372.8 396.0,375.3 396.5,381.1 397.0,387.3 397.5,390.7 398.0,389.5 398.5,384.2 399.0,377.2 399.5,371.7 400.0,370.3 400.5,373.5 401.0,379.4 401.5,384.9 402.0,387.4 402.5,385.5 403.0,380.1 403.5,373.7 404.0,369.1 404.5,368.4 405.0,372.0 405.5,378.2 406.0,384.1 406.5,386.9 407.0,385.1 407.5,379.5 408.0,372.6 408.5,367.7 409.0,366.9 409.5,370.5 410.0,376.5 410.5,381.9 411.0,384.1 411.5,382.1 412.0,376.8 412.5,370.6 413.0,366.0 413.5,365.3 414.0,368.5 414.5,373.9 415.0,378.9 415.5,380.9 416.0,378.8 416.5,373.6 417.0,367.6 417.5,363.5 418.0,362.9 418.5,365.8 419.0,370.7 419.5,374.9 420.0,376.4 420.5,374.2 421.0,369.3 421.5,364.0 422.0,360.7 422.5,360.8 423.0,363.9 423.5,368.4 424.0,371.8 424.5,372.6 425.0,370.1 425.5,365.3 426.0,360.4 426.5,357.7 427.0,358.5 427.5,354.5 428.0,348.7 428.5,342.2 429.0,334.1 429.5,324.3 430.0,317.5 430.5,314.2 431.0,312.1 431.5,311.8 432.0,312.9 432.5,314.4 433.0,315.1 433.5,314.1 434.0,310.6 434.5,306.1 435.0,301.8 435.5,299.0 436.0,297.6 436.5,296.7 437.0,295.3 437.5,294.1 438.0,296.0 438.5,297.8 439.0,300.4 439.5,295.4 440.0,287.5 440.5,276.7 441.0,264.6 441.5,252.5 442.0,240.4 442.5,233.7 443.0,230.6 443.5,227.5 444.0,224.3 444.5,221.2 445.0,218.6 445.5,216.6 446.0,214.7 446.5,212.7 447.0,210.7 447.5,208.8 448.0,206.8 448.5,204.8 449.0,203.2 449.5,202.3 450.0,201.5 450.5,200.6 451.0,199.7 451.5,199.0 452.0,199.0 452.5,198.9 453.0,198.9 453.5,198.8 454.0,198.8 454.5,198.7 455.0,198.7 455.5,198.6 456.0,198.5 456.5,198.6 457.0,198.7 457.5,198.7 458.0,198.8 458.5,198.8 459.0,198.9 459.5,198.9 460.0,199.0 460.5,199.0 461.0,199.7 461.5,200.6 462.0,201.5 462.5,202.3 463.0,203.2 463.5,204.8 464.0,206.8 464.5,208.8 465.0,210.7 465.5,212.7 466.0,214.7 466.5,216.6 467.0,218.6 467.5,221.2 468.0,224.3 468.5,227.5 469.0,230.6 469.5,233.7 470.0,240.4 470.5,252.5 471.0,264.6 471.5,276.7 472.0,287.5 472.5,295.4 473.0,300.4 473.5,297.9 474.0,295.9 474.5,293.2 475.0,293.7 475.5,295.1 476.0,297.2 476.5,300.6 477.0,305.1 477.5,309.7 478.0,312.3 478.5,313.1 479.0,311.8 479.5,310.4 480.0,310.1 480.5,311.5 481.0,314.5 481.5,318.1 482.0,321.1 482.5,325.9 483.0,332.9 483.5,338.8 484.0,344.7 484.5,351.9 485.0,358.8 485.5,363.0 486.0,368.4 486.5,372.4 487.0,373.2 487.5,370.3 488.0,365.3 488.5,360.8 489.0,359.3 489.5,362.0 490.0,367.7 490.5,373.8 491.0,377.4 491.5,376.8 492.0,372.6 492.5,366.9 493.0,362.9 493.5,362.5 494.0,366.2 494.5,372.3 495.0,378.1 495.5,380.9 496.0,379.6 496.5,374.8 497.0,369.1 497.5,365.4 498.0,365.8 498.5,370.2 499.0,376.6 499.5,382.0 500.0,384.0 500.5,381.7 501.0,376.4 501.5,370.8 502.0,367.5 502.5,368.2 503.0,372.4 503.5,378.1 504.0,382.8 504.5,384.3 505.0,382.2 505.5,377.2 506.0,371.9 506.5,369.1 507.0,370.5 507.5,375.9 508.0,382.9 508.5,388.1 509.0,389.1 509.5,385.4 510.0,379.2 510.5,373.5 511.0,371.1 511.5,373.2 512.0,378.9 512.5,385.6 513.0,390.3 513.5,390.8 514.0,386.8 514.5,380.4 515.0,374.6 515.5,372.5 516.0,375.2 516.5,381.8 517.0,389.3 517.5,394.5 518.0,394.8 518.5,390.3 519.0,383.1 519.5,376.8 520.0,374.5 520.5,377.3 521.0,383.7 521.5,390.5 522.0,394.6 522.5,394.2 523.0,389.8 523.5,383.6 524.0,378.4 524.5,376.6 525.0,379.1 525.5,385.3 526.0,392.6 526.5,397.8 527.0,398.2 527.5,393.5 528.0,386.3 528.5,380.2 529.0,378.3 529.5,381.6 530.0,388.6 530.5,396.0 531.0,400.6 531.5,400.5 532.0,395.8 532.5,388.7 533.0,382.4 533.5,380.3 534.0,383.7 534.5,391.2 535.0,399.6 535.5,404.8 536.0,404.5 536.5,398.9 537.0,390.7 537.5,383.9 538.0,381.7 538.5,385.3 539.0,393.0 539.5,401.1 540.0,405.8 540.5,404.8 541.0,398.7 541.5,390.4 542.0,384.0 542.5,382.8 543.0,387.8 543.5,396.9 544.0,405.9 544.5,410.6 545.0,408.6 545.5,400.9 546.0,391.5 546.5,385.2 547.0,385.4 547.5,392.5 548.0,403.3 548.5,412.9 549.0,416.7 549.5,412.8 550.0,403.2 550.5,392.7 551.0,386.2 551.5,386.7 552.0,394.2 552.5,405.4 553.0,415.2 553.5,419.2 554.0,415.3 554.5,405.7 555.0,394.8 555.5,388.2 556.0,389.2 556.5,397.4 557.0,409.0 557.5,418.6 558.0,421.4 558.5,416.2 559.0,405.6 559.5,394.6 560.0,388.5 560.5,390.2 561.0,398.7 561.5,410.1 562.0,419.7 562.5,422.5 563.0,416.2 563.5,405.3 564.0,394.6 564.5,388.9 565.0,391.4 565.5,401.3 566.0,414.4 566.5,424.6 567.0,426.8 567.5,420.1 568.0,407.9 568.5,396.4 569.0,391.3 569.5,395.0 570.0,405.8 570.5,419.1 571.0,430.4 571.5,431.6 572.0,421.7 572.5,408.5 573.0,396.9 573.5,392.2 574.0,397.1 574.5,409.7 575.0,424.3 575.5,434.3 576.0,433.4 576.5,422.5 577.0,408.0 577.5,396.3 578.0,392.5 578.5,398.1 579.0,410.0 579.5,422.6 580.0,429.8 580.5,428.2 581.0,418.4 581.5,404.7 582.0,393.7 582.5,390.8 583.0,397.9 583.5,412.4 584.0,427.9 584.5,437.4 585.0,434.8 585.5,422.3 586.0,406.9 586.5,395.4 587.0,393.0 587.5,400.7 588.0,415.2 588.5,429.9 589.0,438.0 589.5,435.8 590.0,424.1 590.5,408.6 591.0,397.0 591.5,395.5 592.0,405.2 592.5,421.7 593.0,436.7 593.5,442.8 594.0,437.0 594.5,422.4 595.0,406.4 595.5,397.0 596.0,398.8 596.5,410.4 597.0,425.9 597.5,438.8 598.0,440.8 598.5,429.9 599.0,414.4 599.5,400.9 600.0,395.2 600.5,400.3 601.0,414.0 601.5,430.0 602.0,440.5 602.5,440.5 603.0,430.0 603.5,414.3 604.0,400.7 604.5,395.5 605.0,400.9 605.5,414.0 606.0,429.0 606.5,439.0 607.0,439.0 607.5,428.7 608.0,413.3 608.5,399.7 609.0,394.6 609.5,400.5 610.0,414.7 610.5,430.1 611.0,439.4 611.5,438.0 612.0,426.6 612.5,410.8 613.0,398.1 613.5,394.6 614.0,401.7 614.5,416.2 615.0,431.0 615.5,439.1 616.0,436.5 616.5,424.4 617.0,408.8 617.5,397.5 618.0,396.2 618.5,405.7 619.0,421.5 619.5,436.3 620.0,443.2 620.5,439.3 621.0,426.4 621.5,410.7 622.0,399.5 622.5,398.0 623.0,406.9 623.5,422.0 624.0,436.7 624.5,444.3 625.0,441.5 625.5,429.5 626.0,413.8 626.5,410.7 627.0,447.8 627.4,477.5 627.5,470.1 628.0,433.0 628.5,438.5 629.0,447.6 629.5,445.3 630.0,432.6 630.5,415.2 631.0,401.8 631.5,398.9 632.0,408.4 632.5,426.3 633.0,444.1 633.5,453.3 634.0,449.1 634.5,433.7 635.0,414.8 635.5,401.6 636.0,400.0 636.5,410.1 637.0,426.9 637.5,443.0 638.0,450.9 638.5,443.9 639.0,427.7 639.5,410.2 640.0,398.9 640.5,399.2 641.0,411.1 641.5,428.9 642.0,444.1 642.5,449.4 643.0,442.5 643.5,426.6 644.0,409.5 644.5,399.2 645.0,400.4 645.5,412.4 646.0,429.9 646.5,448.8 647.0,457.7 647.5,443.9 648.0,424.7 648.5,408.3 649.0,398.9 649.5,400.8 650.0,413.3 650.5,430.8 651.0,445.0 651.5,448.8 652.0,440.2 652.5,423.1 653.0,406.1 653.5,398.1 654.0,403.5 654.5,419.9 655.0,439.2 655.5,451.8 656.0,451.4 656.5,438.6 657.0,419.8 657.5,404.2 658.0,399.1 658.5,406.6 659.0,422.9 659.5,439.8 660.0,449.2 660.5,446.5 661.0,433.1 661.5,415.5 662.0,402.2 662.5,399.3 663.0,408.2 663.5,424.8 664.0,446.9 664.5,466.7 665.0,455.4 665.5,432.0 666.0,413.7 666.5,401.6 667.0,400.6 667.5,411.4 668.0,428.8 668.5,444.3 669.0,450.2 669.5,443.8 670.0,428.3 670.5,411.2 671.0,400.3 671.5,400.4 672.0,411.3 672.5,428.2 673.0,445.8 673.5,454.8 674.0,445.1 674.5,427.4 675.0,410.2 675.5,399.3 676.0,400.0 676.5,412.4 676.6,415.9 677.0,431.0 677.5,447.1 678.0,453.2 678.5,446.5 679.0,430.5 679.5,413.0 680.0,402.3 680.5,403.5 680.7,407.3 681.0,415.7 681.5,433.3 682.0,448.0 682.5,452.7 683.0,444.9 683.5,428.3 684.0,410.6 684.5,400.1 685.0,401.4 685.5,413.7 686.0,431.9 686.5,452.2 687.0,462.6 687.5,449.5 688.0,429.8 688.5,412.4 689.0,401.9 689.5,403.4 690.0,416.3 690.5,434.6 691.0,459.5 691.5,496.6 691.6,504.0 692.0,474.3 692.5,437.2 693.0,409.2 693.5,399.8 694.0,402.7 694.5,416.5 695.0,434.8 695.5,448.8 696.0,451.6 696.5,441.5 697.0,423.3 697.5,406.0 698.0,398.2 698.5,404.0 699.0,420.4 699.5,440.6 700.0,458.2 700.5,459.0 701.0,442.3 701.5,423.0 702.0,407.2 702.5,401.3 703.0,408.2 703.5,425.0 704.0,444.2 704.5,456.8 705.0,456.6 705.3,450.4 705.5,444.2 706.0,424.3 706.5,407.5 707.0,401.9 707.5,409.7 708.0,426.9 708.5,445.0 709.0,455.6 709.5,453.8 710.0,440.4 710.5,421.5 711.0,405.8 711.5,400.7 712.0,408.6 712.5,425.9 713.0,443.9 713.5,453.9 714.0,450.9 714.5,436.1 715.0,417.1"/>
<polyline fill="none" stroke="#66a61e" stroke-width="2" stroke-linejoin="round" points="81.0,440.1 81.5,444.0 82.0,435.5 82.5,418.8 83.0,401.8 83.5,392.7 84.0,396.1 84.5,410.7 85.0,430.3 85.5,446.2 86.0,451.0 86.5,442.5 87.0,424.8 87.5,406.0 88.0,394.9 88.5,396.8 89.0,410.6 89.5,430.1 90.0,448.9 90.5,456.0 91.0,442.9 91.5,422.8 92.0,404.5 92.5,394.4 93.0,397.2 93.5,411.4 94.0,434.0 94.5,472.1 95.0,482.1 95.2,468.0 95.5,443.2 96.0,415.9 96.5,398.8 97.0,391.8 97.5,397.9 98.0,413.7 98.5,431.1 99.0,441.3 99.5,439.6 100.0,427.1 100.5,409.7 101.0,395.5 101.5,390.9 102.0,398.2 102.5,414.2 103.0,431.4 103.5,442.0 104.0,441.1 104.5,452.8 105.0,489.9 105.5,527.0 106.0,489.9 106.5,452.8 107.0,417.1 107.5,435.0 108.0,445.9 108.5,444.3 109.0,431.2 109.5,412.9 109.8,403.1 110.0,398.3 110.5,394.7 111.0,403.6 111.5,420.4 112.0,436.9 112.5,444.9 113.0,440.7 113.5,426.5 114.0,409.0 114.5,396.5 115.0,394.7 115.5,404.4 116.0,420.6 116.5,435.3 117.0,441.3 117.5,435.7 118.0,421.3 118.5,404.9 119.0,394.2 119.5,393.8 120.0,403.9 120.5,419.7 121.0,433.8 121.5,439.3 122.0,457.7 122.3,480.0 122.5,465.2 123.0,428.1 123.5,391.4 124.0,392.1 124.5,402.7 125.0,418.5 125.5,437.6 126.0,447.1 126.5,431.7 127.0,412.7 127.5,397.7 128.0,388.9 128.5,390.6 129.0,402.2 129.5,418.7 130.0,432.2 130.5,436.4 131.0,429.5 131.5,414.8 132.0,399.3 132.5,390.3 133.0,392.2 133.5,404.3 134.0,421.2 134.5,435.1 135.0,439.3 135.5,431.7 136.0,415.9 136.5,399.4 137.0,390.7 137.5,394.5 138.0,409.7 138.5,429.5 139.0,444.7 139.5,477.0 140.0,439.9 140.5,417.6 141.0,398.9 141.5,390.5 142.0,396.9 142.5,414.8 143.0,435.0 143.5,447.5 144.0,446.0 144.5,431.8 145.0,412.0 145.5,396.1 145.8,392.0 146.0,392.2 146.5,401.5 147.0,419.8 147.5,444.6 148.0,469.8 148.5,458.9 149.0,430.6 149.5,410.2 150.0,396.6 150.5,393.2 151.0,400.9 151.5,415.6 152.0,430.9 152.5,439.9 153.0,438.3 153.5,426.7 154.0,410.2 154.5,396.4 155.0,391.8 155.5,398.8 156.0,414.1 156.5,432.3 157.0,448.1 157.5,444.3 158.0,425.7 158.5,407.6 159.0,394.3 159.5,391.0 160.0,399.2 160.5,414.9 161.0,430.3 161.5,437.8 162.0,433.4 162.5,419.5 163.0,403.0 163.5,392.2 163.6,391.4 164.0,392.9 164.5,404.2 165.0,420.8 165.5,434.6 166.0,439.0 166.5,432.0 167.0,417.1 167.5,401.4 168.0,392.6 168.5,395.0 169.0,407.5 169.5,424.1 170.0,437.0 170.5,439.9 171.0,431.2 171.5,414.8 172.0,398.4 172.5,389.7 173.0,393.1 173.5,406.7 174.0,425.0 174.5,442.2 175.0,445.0 175.5,429.8 176.0,410.7 176.5,394.4 177.0,386.9 177.5,391.8 178.0,407.0 178.5,428.2 179.0,454.9 179.5,460.7 180.0,436.2 180.5,413.3 181.0,396.1 181.5,387.8 182.0,391.6 182.5,405.8 183.0,423.5 183.5,436.9 184.0,439.7 184.5,430.7 185.0,414.2 185.5,398.1 186.0,390.8 186.5,396.3 187.0,412.2 187.5,433.1 188.0,455.8 188.5,455.7 189.0,433.0 189.5,413.1 190.0,398.6 190.5,394.0 191.0,401.1 191.5,416.2 192.0,431.8 192.5,440.4 193.0,437.8 193.5,425.4 194.0,408.8 194.5,395.9 195.0,392.6 195.5,400.7 196.0,417.0 196.5,434.3 197.0,444.5 197.5,442.6 198.0,429.2 198.5,410.6 199.0,395.9 199.5,392.2 200.0,401.1 200.5,417.9 201.0,435.1 201.5,444.8 202.0,440.6 202.5,425.4 203.0,407.4 203.5,394.2 204.0,392.7 204.5,404.2 205.0,423.6 205.5,443.1 206.0,452.7 206.5,443.3 207.0,424.1 207.5,405.2 208.0,393.5 208.5,393.6 209.0,404.3 209.5,420.1 210.0,433.4 210.5,437.9 211.0,431.7 211.5,417.7 212.0,402.5 212.5,393.5 213.0,395.3 213.5,407.4 214.0,425.0 214.5,442.7 215.0,449.7 215.5,437.9 216.0,419.9 216.5,403.3 217.0,394.0 217.5,396.2 218.0,408.9 218.5,426.9 219.0,446.3 219.5,453.9 220.0,439.6 220.5,420.5 221.0,404.2 221.5,395.5 222.0,398.5 222.5,411.9 223.0,430.5 223.5,451.2 224.0,456.8 224.5,438.4 225.0,418.3 225.5,402.3 226.0,394.5 226.5,398.4 227.0,412.1 227.5,429.3 228.0,442.5 228.5,444.5 229.0,433.9 229.5,417.1 230.0,401.7 230.5,394.5 231.0,398.8 231.5,412.6 232.0,429.3 232.5,441.0 233.0,442.3 233.5,432.6 234.0,416.4 234.5,401.0 235.0,393.4 235.5,396.8 236.0,409.4 236.5,425.1 237.0,436.8 237.5,438.3 238.0,428.5 238.5,412.8 239.0,398.1 239.5,390.8 240.0,394.2 240.5,406.8 241.0,423.8 241.5,440.4 242.0,444.0 242.5,430.3 243.0,412.9 243.5,397.8 244.0,391.0 244.5,396.2 245.0,411.7 245.5,430.5 246.0,443.5 246.5,444.1 247.0,432.2 247.5,413.8 248.0,398.1 248.5,392.8 249.0,400.3 249.5,416.9 250.0,437.1 250.5,453.6 251.0,446.2 251.5,425.5 252.0,406.3 252.5,393.6 253.0,393.2 253.5,405.1 254.0,423.1 254.5,437.7 255.0,441.7 255.5,433.3 256.0,417.1 256.5,401.3 257.0,393.2 257.5,396.0 258.0,407.6 258.5,422.1 259.0,433.3 259.5,435.3 260.0,426.6 260.5,412.0 261.0,397.9 261.5,390.6 262.0,393.9 262.5,406.7 263.0,423.3 263.5,435.6 264.0,437.7 264.5,428.4 265.0,412.1 265.5,396.8 266.0,390.0 266.5,395.1 267.0,409.8 267.5,426.8 268.0,437.7 268.5,437.4 269.0,425.9 269.5,409.2 270.0,395.2 270.5,390.5 271.0,397.2 271.5,412.1 272.0,428.5 272.5,438.7 273.0,437.8 273.5,426.3 274.0,409.8 274.5,396.2 275.0,391.7 275.5,398.1 276.0,412.0 276.5,427.0 277.0,436.8 277.5,434.8 278.0,422.3 278.5,406.7 279.0,393.8 279.5,389.1 280.0,394.7 280.5,408.0 281.0,422.7 281.5,431.9 282.0,431.0 282.5,420.4 283.0,405.3 283.5,393.0 284.0,389.4 284.5,396.2 285.0,409.8 285.5,423.9 286.0,431.7 286.5,427.2 287.0,414.0 287.5,399.4 288.0,389.2 288.5,387.5 289.0,394.6 289.5,406.6 290.0,417.6 290.5,422.4 291.0,418.9 291.5,409.0 292.0,397.4 292.5,389.9 293.0,390.1 293.5,398.3 294.0,410.7 294.5,421.5 295.0,425.7 295.5,421.2 296.0,410.2 296.5,397.7 297.0,389.7 297.5,389.7 298.0,397.9 298.5,410.1 299.0,421.1 299.5,425.3 300.0,419.6 300.5,407.8 301.0,395.3 301.5,387.5 302.0,387.6 302.5,395.3 303.0,406.7 303.5,418.0 304.0,423.2 304.5,416.0 305.0,404.2 305.5,393.5 306.0,386.9 306.5,387.2 307.0,394.1 307.5,404.1 308.0,412.7 308.5,415.7 309.0,411.0 309.5,401.6 310.0,392.1 310.5,386.3 311.0,386.6 311.5,392.5 312.0,401.3 312.5,408.7 313.0,411.3 313.5,407.6 314.0,399.1 314.5,389.7 315.0,384.2 315.5,385.5 316.0,393.3 316.5,403.4 317.0,410.7 317.5,411.4 318.0,405.1 318.5,395.0 319.0,385.7 319.5,381.5 320.0,383.7 320.5,391.1 321.0,400.0 321.5,406.3 322.0,406.9 322.5,401.3 323.0,392.0 323.5,383.5 324.0,380.0 324.5,383.1 325.0,391.4 325.5,400.4 326.0,405.6 326.5,404.6 327.0,397.9 327.5,388.6 328.0,381.1 328.5,379.1 329.0,383.5 329.5,392.2 330.0,401.1 330.5,405.5 331.0,403.4 331.5,395.9 332.0,386.6 332.5,379.7 333.0,378.1 333.5,381.8 334.0,388.7 334.5,395.1 335.0,398.1 335.5,396.1 336.0,390.1 336.5,382.8 337.0,377.3 337.5,376.0 338.0,379.4 338.5,386.1 339.0,392.9 339.5,396.6 340.0,395.4 340.5,389.8 341.0,382.5 341.5,377.1 342.0,376.3 342.5,380.3 343.0,387.3 343.5,393.9 344.0,396.9 344.5,394.4 345.0,387.7 345.5,380.0 346.0,375.0 346.5,375.0 347.0,379.9 347.5,387.0 348.0,392.6 348.5,394.0 349.0,390.3 349.5,383.4 350.0,376.5 350.5,372.6 351.0,373.3 351.5,378.2 352.0,384.8 352.5,390.0 353.0,391.3 353.5,387.9 354.0,381.2 354.5,374.2 355.0,370.2 355.5,370.7 356.0,375.1 356.5,381.0 357.0,385.4 357.5,386.3 358.0,383.1 358.5,377.4 359.0,371.7 359.5,368.5 360.0,369.2 360.5,373.4 361.0,378.8 361.5,382.8 362.0,383.3 362.5,380.0 363.0,374.5 363.5,369.2 364.0,366.6 364.5,367.9 365.0,372.4 365.5,377.9 366.0,381.7 366.5,381.7 367.0,377.8 367.5,371.9 368.0,366.6 368.5,364.5 369.0,366.2 369.5,370.7 370.0,375.3 370.5,377.7 371.0,376.7 371.5,372.6 372.0,367.4 372.5,363.4 373.0,362.1 373.5,364.0 374.0,368.2 374.5,372.8 375.0,375.5 375.5,374.8 376.0,370.7 376.5,365.0 377.0,360.5 377.5,359.5 378.0,362.6 378.5,368.3 379.0,373.8 379.5,376.4 380.0,374.5 380.5,356.7 381.0,345.7 381.5,335.4 382.0,326.6 382.5,319.4 383.0,317.6 383.5,318.8 384.0,319.0 384.5,317.7 385.0,314.8 385.5,311.2 386.0,308.1 386.5,306.2 387.0,305.3 387.5,305.5 388.0,305.2 388.5,303.5 389.0,300.5 389.5,296.6 390.0,293.1 390.5,292.8 391.0,295.5 391.5,298.3 392.0,300.0 392.5,291.9 393.0,283.5 393.5,271.2 394.0,258.8 394.5,246.5 395.0,235.0 395.5,231.8 396.0,228.6 396.5,225.4 397.0,222.2 397.5,219.1 398.0,217.1 398.5,215.1 399.0,213.1 399.5,211.1 400.0,209.1 400.5,207.1 401.0,205.1 401.5,203.1 402.0,202.2 402.5,201.4 403.0,200.5 403.5,199.6 404.0,198.7 404.5,198.7 405.0,198.6 405.5,198.6 406.0,198.5 406.5,198.4 407.0,198.4 407.5,198.3 408.0,198.3 408.5,198.2 409.0,198.3 409.5,198.3 410.0,198.4 410.5,198.4 411.0,198.5 411.5,198.6 412.0,198.6 412.5,198.7 413.0,198.7 413.5,199.6 414.0,200.5 414.5,201.4 415.0,202.2 415.5,203.1 416.0,205.1 416.5,207.1 417.0,209.1 417.5,211.1 418.0,213.1 418.5,215.1 419.0,217.1 419.5,219.1 420.0,222.2 420.5,225.4 421.0,228.6 421.5,231.8 422.0,235.0 422.5,246.5 423.0,258.8 423.5,271.2 424.0,283.5 424.5,291.9 425.0,300.0 425.5,298.3 426.0,295.5 426.5,292.7 427.0,292.8 427.5,296.3 428.0,300.2 428.5,303.6 429.0,305.8 429.5,306.4 430.0,306.0 430.5,306.4 431.0,307.7 431.5,310.5 432.0,314.1 432.5,317.3 433.0,319.1 433.5,319.2 434.0,317.9 434.5,319.6 435.0,326.7 435.5,335.4 436.0,345.8 436.5,356.9 437.0,372.9 437.5,373.9 438.0,371.0 438.5,365.8 439.0,361.0 439.5,358.9 440.0,360.5 440.5,364.9 441.0,370.0 441.5,373.7 442.0,374.4 442.5,372.0 443.0,367.6 443.5,363.4 444.0,361.5 444.5,363.0 445.0,367.6 445.5,373.2 446.0,377.5 446.5,378.5 447.0,375.9 447.5,371.0 448.0,366.2 448.5,364.0 449.0,365.8 449.5,371.2 450.0,377.7 450.5,382.4 451.0,383.0 451.5,379.4 452.0,373.6 452.5,368.5 453.0,366.8 453.5,369.4 454.0,375.0 454.5,381.2 455.0,385.1 455.5,385.1 456.0,381.3 456.5,375.7 457.0,370.8 457.5,369.0 458.0,371.4 458.5,377.0 459.0,383.2 459.5,387.4 460.0,387.7 460.5,384.0 461.0,378.2 461.5,373.2 462.0,371.4 462.5,374.2 463.0,380.3 463.5,387.2 464.0,391.4 464.5,391.1 465.0,386.2 465.5,379.2 466.0,373.7 466.5,372.5 467.0,376.4 467.5,383.5 468.0,390.6 468.5,394.5 469.0,393.4 469.5,388.1 470.0,381.2 470.5,375.8 471.0,374.6 471.5,378.0 472.0,384.6 472.5,391.3 473.0,395.4 473.5,394.9 474.0,390.2 474.5,383.5 475.0,378.0 475.5,376.6 476.0,380.1 476.5,387.1 477.0,394.6 477.5,398.9 478.0,397.8 478.5,391.8 479.0,384.0 479.5,378.6 480.0,378.5 480.5,383.6 481.0,391.4 481.5,398.2 482.0,400.7 482.5,397.9 483.0,391.1 483.5,383.7 484.0,379.4 484.5,380.6 485.0,387.0 485.5,395.9 486.0,403.1 486.5,405.1 487.0,400.7 487.5,392.1 488.0,383.8 488.5,380.4 489.0,383.9 489.5,392.7 490.0,402.6 490.5,409.5 491.0,409.0 491.5,401.8 492.0,392.6 492.5,385.0 493.0,382.5 493.5,386.2 494.0,394.6 494.5,403.9 495.0,410.0 495.5,410.1 496.0,404.3 496.5,395.3 497.0,387.1 497.5,383.6 498.0,386.5 498.5,394.8 499.0,404.9 499.5,412.2 500.0,413.4 500.5,407.7 501.0,397.7 501.5,388.2 502.0,383.7 502.5,386.6 503.0,395.5 503.5,406.2 504.0,413.7 504.5,414.4 505.0,408.0 505.5,397.8 506.0,389.1 506.5,386.5 507.0,391.6 507.5,402.0 508.0,412.6 508.5,418.1 509.0,415.9 509.5,407.2 510.0,396.3 510.5,388.7 511.0,387.9 511.5,394.2 512.0,404.7 512.5,414.4 513.0,418.8 513.5,416.1 514.0,407.4 514.5,397.2 515.0,390.3 515.5,390.2 516.0,397.4 516.5,408.7 517.0,418.9 517.5,423.3 518.0,419.7 518.5,410.0 519.0,398.6 519.5,391.3 520.0,391.8 520.5,400.5 521.0,413.8 521.5,425.9 522.0,431.0 522.5,426.4 523.0,414.2 523.5,400.4 524.0,391.9 524.5,393.6 525.0,405.2 525.5,421.5 526.0,434.9 526.5,438.7 527.0,431.3 527.5,416.3 528.0,401.5 528.5,393.9 529.0,397.0 529.5,409.0 530.0,424.3 530.5,435.7 531.0,438.2 531.5,430.5 532.0,416.1 532.5,401.9 533.0,394.5 533.5,397.7 534.0,410.2 534.5,426.4 535.0,439.5 535.5,442.4 536.0,432.9 536.5,417.5 537.0,402.8 537.5,394.8 538.0,396.9 538.5,408.1 539.0,423.4 539.5,435.6 540.0,438.9 540.5,431.6 541.0,417.0 541.5,402.1 542.0,394.1 542.5,396.6 543.0,408.2 543.5,422.8 544.0,433.3 544.5,434.6 545.0,426.1 545.5,411.7 546.0,398.3 546.5,392.2 547.0,396.7 547.5,410.2 548.0,426.5 548.5,437.9 549.0,439.0 549.5,429.1 550.0,412.9 550.5,398.7 551.0,393.7 551.5,400.5 552.0,415.9 552.5,432.6 553.0,443.1 553.5,441.5 554.0,429.0 554.5,412.6 555.0,399.3 555.5,394.9 556.0,401.2 556.5,414.9 557.0,430.1 557.5,440.7 558.0,439.6 558.5,427.8 559.0,412.8 559.5,400.3 560.0,396.1 560.5,402.3 561.0,416.1 561.5,431.6 562.0,441.6 562.5,439.6 563.0,427.1 563.5,411.1 564.0,398.7 564.5,395.7 565.0,403.5 565.5,418.5 566.0,433.8 566.5,442.0 567.0,439.1 567.5,426.1 568.0,409.9 568.5,399.0 569.0,399.2 569.5,410.3 570.0,426.8 570.5,443.1 571.0,450.1 571.5,439.1 572.0,422.4 572.5,407.4 573.0,398.8 573.5,400.3 574.0,411.2 574.5,426.3 575.0,438.3 575.5,441.6 576.0,434.4 576.5,420.2 577.0,405.6 577.5,397.6 578.0,399.9 578.5,411.7 579.0,427.4 579.5,439.8 580.0,442.9 580.5,435.0 581.0,419.8 581.5,404.7 582.0,397.3 582.5,401.7 583.0,416.3 583.5,434.4 584.0,447.1 584.5,447.9 585.0,436.1 585.5,417.7 586.0,401.8 586.5,396.2 587.0,403.1 587.5,418.6 588.0,435.0 588.5,444.6 589.0,443.0 589.5,431.2 590.0,414.6 590.5,401.2 591.0,397.4 591.5,405.6 592.0,422.4 592.5,440.0 593.0,450.2 593.5,448.1 594.0,434.6 594.5,416.1 595.0,401.1 595.5,396.4 596.0,404.0 596.5,420.4 597.0,438.6 597.5,451.5 598.0,450.6 598.5,436.9 599.0,419.1 599.5,404.4 600.0,399.4 600.5,406.4 601.0,422.4 601.5,440.8 602.0,454.7 602.5,451.8 603.0,435.5 603.5,417.4 604.0,403.7 604.5,400.6 605.0,409.3 605.5,425.7 606.0,444.3 606.5,458.3 607.0,452.4 607.5,434.4 608.0,417.1 608.5,404.4 609.0,400.9 609.5,407.9 610.0,422.2 610.5,437.6 611.0,447.3 611.5,446.6 612.0,435.6 612.5,418.9 613.0,404.4 613.5,399.8 614.0,408.3 614.5,426.5 615.0,445.7 615.5,456.0 616.0,452.0 616.5,435.5 617.0,414.9 617.5,401.0 618.0,400.8 618.5,414.5 619.0,435.0 619.5,451.9 620.0,457.0 620.5,447.7 621.0,428.9 621.5,409.9 622.0,399.7 622.5,402.8 623.0,417.3 623.5,436.7 624.0,455.6 624.5,460.4 625.0,445.0 625.5,424.8 626.0,407.0 626.5,397.8 627.0,401.7 627.4,413.4 627.5,417.1 628.0,436.5 628.5,450.6 629.0,452.8 629.5,442.1 630.0,424.0 630.5,407.4 631.0,400.0 631.5,404.8 632.0,419.0 632.5,439.4 633.0,467.6 633.5,468.5 634.0,440.4 634.5,420.0 635.0,406.3 635.5,401.4 636.0,408.0 636.5,423.3 637.0,440.1 637.5,450.4 638.0,449.2 638.5,436.9 639.0,419.4 639.5,405.2 640.0,401.4 640.5,410.5 641.0,428.4 641.5,446.9 642.0,456.9 642.5,453.3 643.0,437.7 643.5,417.5 644.0,402.6 644.5,400.5 645.0,412.3 645.5,432.5 646.0,451.3 646.5,459.4 647.0,452.9 647.5,435.0 648.0,414.5 648.5,400.8 649.0,399.8 649.5,410.9 650.0,428.0 650.5,443.0 651.0,449.0 651.5,443.5 652.0,429.1 652.5,412.5 653.0,401.4 653.5,401.2 654.0,412.4 654.5,429.9 655.0,445.9 655.5,452.7 656.0,446.7 656.5,430.4 657.0,411.5 657.5,399.8 658.0,401.4 658.5,415.8 659.0,437.1 659.5,462.7 660.0,472.3 660.5,450.0 661.0,426.0 661.5,407.7 662.0,398.5 662.5,402.1 663.0,416.5 663.5,434.3 664.0,447.3 664.5,449.3 665.0,439.9 665.5,423.7 666.0,408.1 666.5,400.1 667.0,403.3 667.5,416.2 668.0,433.3 668.5,446.8 669.0,450.8 669.5,443.1 670.0,427.2 670.5,410.7 671.0,402.0 671.5,405.8 672.0,420.8 672.5,440.1 673.0,454.3 673.5,456.3 674.0,445.2 674.5,426.3 675.0,408.6 675.5,400.1 676.0,404.4 676.5,419.2 676.6,422.7 677.0,438.5 677.5,456.9 678.0,458.9 678.5,442.0 679.0,421.8 679.5,405.0 680.0,424.1 680.5,461.2 680.7,476.0 681.0,453.7 681.5,444.1 682.0,466.4 682.5,464.9 683.0,441.8 683.5,420.4 684.0,404.5 684.5,398.8 685.0,405.9 685.5,422.2 686.0,440.4 686.5,452.3 687.0,452.1 687.5,439.9 688.0,421.4 688.5,405.9 689.0,401.2 689.5,410.0 690.0,427.8 690.5,446.2 691.0,456.4 691.5,452.8 691.6,450.4 692.0,437.2 692.5,417.5 693.0,403.3 693.5,402.0 694.0,414.2 694.5,433.4 695.0,449.1 695.5,453.1 696.0,443.6 696.5,425.5 697.0,407.6 697.5,398.0 698.0,400.8 698.5,414.4 699.0,432.5 699.5,446.7 700.0,450.3 700.5,441.8 701.0,425.4 701.5,409.2 702.0,400.9 702.5,404.7 703.0,419.0 703.5,437.9 704.0,454.3 704.5,460.1 705.0,450.9 705.3,441.1 705.5,433.8 706.0,415.4 706.5,404.4 707.0,405.8 707.5,418.9 708.0,437.1 708.5,451.7 709.0,455.7 709.5,447.0 710.0,429.8 710.5,412.4 711.0,403.1 711.5,406.3 712.0,420.0 712.5,438.6 713.0,458.7 713.5,462.3 714.0,443.6 714.5,424.0 715.0,408.4"/>
<polyline fill="none" stroke="#e6ab02" stroke-width="2" stroke-linejoin="round" points="81.0,433.3 81.5,444.5 82.0,443.0 82.5,429.4 83.0,410.6 83.5,395.6 84.0,391.4 84.5,399.7 85.0,415.8 85.5,431.8 86.0,440.0 86.5,436.9 87.0,424.2 87.5,407.9 88.0,395.4 88.5,392.6 89.0,400.7 89.5,416.4 90.0,432.5 90.5,441.2 91.0,438.3 91.5,425.2 92.0,408.1 92.5,395.4 93.0,393.2 93.5,402.4 94.0,418.7 94.5,447.1 95.0,484.2 95.2,499.0 95.5,476.7 96.0,439.7 96.5,405.7 97.0,393.9 97.5,392.8 98.0,403.0 98.5,420.1 99.0,438.6 99.5,449.9 100.0,442.2 100.5,424.4 101.0,405.9 101.5,393.6 102.0,393.5 102.5,406.2 103.0,426.0 103.5,447.0 104.0,457.5 104.5,444.3 105.0,423.1 105.5,404.0 106.0,392.9 106.5,394.8 107.0,408.9 107.5,428.3 108.0,443.8 108.5,447.7 109.0,437.9 109.5,419.1 109.8,407.2 110.0,400.2 110.5,391.3 111.0,396.3 111.5,412.3 112.0,432.8 112.5,451.2 113.0,452.0 113.5,433.8 114.0,412.9 114.5,395.8 115.0,389.1 115.5,396.0 116.0,413.1 116.5,432.5 117.0,445.5 117.5,444.7 118.0,430.7 118.5,411.8 119.0,396.2 119.5,390.7 120.0,397.9 120.5,414.4 121.0,432.7 121.5,444.1 122.0,443.0 122.3,436.3 122.5,429.8 123.0,411.1 123.5,396.2 124.0,391.8 124.5,399.1 125.0,414.0 125.5,432.0 126.0,449.0 126.5,443.9 127.0,424.5 127.5,407.9 128.0,395.7 128.5,392.8 129.0,401.2 129.5,418.0 130.0,435.7 130.5,446.2 131.0,444.5 131.5,431.7 132.0,414.2 132.5,400.5 133.0,397.2 133.5,405.9 134.0,422.5 134.5,439.0 135.0,447.3 135.5,443.1 136.0,428.3 136.5,409.7 137.0,396.3 137.5,394.1 138.0,403.8 138.5,419.8 139.0,433.9 139.5,439.0 140.0,432.9 140.5,418.6 141.0,402.7 141.5,392.7 142.0,392.9 142.5,402.9 143.0,418.1 143.5,431.9 144.0,437.3 144.5,429.7 145.0,414.9 145.5,399.6 145.8,393.1 146.0,390.7 146.5,393.4 147.0,407.4 147.5,427.7 148.0,450.8 148.5,457.3 149.0,437.6 149.5,416.0 150.0,399.1 150.5,391.8 151.0,397.0 151.5,411.5 152.0,428.7 152.5,442.9 153.0,442.2 153.5,427.3 154.0,410.3 154.5,396.7 155.0,392.5 155.5,399.5 156.0,414.4 156.5,429.8 157.0,438.7 157.5,437.4 158.0,426.6 158.5,411.3 159.0,398.4 159.5,394.3 160.0,401.7 160.5,417.9 161.0,437.8 161.5,454.9 162.0,451.7 162.5,432.1 163.0,434.5 163.5,471.6 163.6,479.0 164.0,449.3 164.5,412.2 165.0,414.5 165.5,431.6 166.0,442.1 166.5,440.9 167.0,428.8 167.5,411.4 168.0,396.7 168.5,391.7 169.0,398.8 169.5,415.1 170.0,433.2 170.5,445.0 171.0,444.2 171.5,431.1 172.0,412.3 172.5,396.8 173.0,392.3 173.5,401.3 174.0,419.3 174.5,440.9 175.0,459.0 175.5,450.9 176.0,432.9 176.5,470.0 177.0,432.9 177.5,395.8 178.0,402.7 178.5,419.3 179.0,435.5 179.5,443.4 180.0,438.9 180.5,424.0 181.0,406.1 181.5,394.0 182.0,393.2 182.5,403.6 183.0,420.0 183.5,434.4 184.0,439.9 184.5,434.0 185.0,419.5 185.5,403.3 186.0,393.2 186.5,393.9 187.0,405.0 187.5,421.5 188.0,435.9 188.5,441.7 189.0,435.9 189.5,420.9 190.0,403.6 190.5,392.7 191.0,393.9 191.5,407.2 192.0,426.3 192.5,441.9 193.0,446.4 193.5,437.7 194.0,420.3 194.5,402.5 195.0,392.3 195.5,393.6 196.0,405.3 196.5,421.8 197.0,435.9 197.5,440.9 198.0,433.6 198.5,418.1 199.0,401.4 199.5,391.2 200.0,392.5 200.5,405.1 201.0,423.2 201.5,438.6 202.0,443.4 202.5,434.8 203.0,417.7 203.5,400.5 204.0,391.3 204.5,393.9 205.0,406.5 205.5,423.3 206.0,438.8 206.5,443.0 207.0,431.4 207.5,414.5 208.0,399.1 208.5,391.6 209.0,395.7 209.5,409.4 210.0,425.8 210.5,437.0 211.0,437.6 211.5,427.4 212.0,411.4 212.5,396.7 213.0,390.0 213.5,394.3 214.0,407.4 214.5,423.0 215.0,433.4 215.5,433.6 216.0,423.4 216.5,407.6 217.0,393.6 217.5,387.8 218.0,393.0 218.5,407.0 219.0,423.3 219.5,434.5 220.0,435.0 220.5,424.4 221.0,407.6 221.5,393.0 222.0,387.8 222.5,394.8 223.0,410.5 223.5,427.5 224.0,437.6 224.5,436.2 225.0,424.1 225.5,407.1 226.0,393.4 226.5,389.4 227.0,397.0 227.5,412.7 228.0,429.1 228.5,438.0 229.0,434.9 229.5,421.3 230.0,404.1 230.5,392.0 231.0,390.9 231.5,401.0 232.0,416.8 232.5,430.3 233.0,434.7 233.5,427.6 234.0,413.2 234.5,398.6 235.0,390.3 235.5,391.6 236.0,401.5 236.5,415.4 237.0,426.5 237.5,429.7 238.0,423.1 238.5,409.6 239.0,395.8 239.5,388.3 240.0,390.9 240.5,402.3 241.0,416.6 241.5,426.9 242.0,428.2 242.5,420.1 243.0,406.8 243.5,394.4 244.0,388.3 244.5,391.0 245.0,401.0 245.5,414.1 246.0,425.5 246.5,429.0 247.0,421.5 247.5,408.9 248.0,396.6 248.5,389.7 249.0,391.2 249.5,400.6 250.0,413.4 250.5,424.6 251.0,428.0 251.5,420.5 252.0,407.7 252.5,395.2 253.0,388.4 253.5,390.1 254.0,399.4 254.5,411.7 255.0,420.9 255.5,422.7 256.0,416.0 256.5,404.2 257.0,392.8 257.5,387.0 258.0,389.1 258.5,397.9 259.0,409.0 259.5,417.5 260.0,418.4 260.5,410.9 261.0,399.2 261.5,388.7 262.0,384.6 262.5,389.2 263.0,400.4 263.5,412.7 264.0,419.8 264.5,418.0 265.0,408.1 265.5,395.2 266.0,385.7 266.5,384.1 267.0,390.8 267.5,402.1 268.0,412.3 268.5,416.4 269.0,412.6 269.5,402.8 270.0,391.7 270.5,384.7 271.0,385.1 271.5,392.3 272.0,402.3 272.5,410.1 273.0,411.6 273.5,405.5 274.0,395.7 274.5,386.6 275.0,381.7 275.5,382.8 276.0,389.0 276.5,397.2 277.0,403.6 277.5,405.3 278.0,401.2 278.5,393.3 279.0,385.1 279.5,380.5 280.0,381.9 280.5,388.8 281.0,398.1 281.5,405.2 282.0,406.6 282.5,401.4 283.0,392.4 283.5,383.7 284.0,378.9 284.5,379.8 285.0,385.3 285.5,392.6 286.0,398.1 286.5,399.3 287.0,395.6 287.5,388.5 288.0,381.2 288.5,376.8 289.0,377.4 289.5,382.9 290.0,390.7 290.5,397.1 291.0,399.0 291.5,395.3 292.0,387.9 292.5,380.4 293.0,376.4 293.5,377.7 294.0,383.5 294.5,390.8 295.0,395.9 295.5,396.4 296.0,392.1 296.5,385.0 297.0,378.5 297.5,375.7 298.0,377.8 298.5,383.6 299.0,390.4 299.5,394.7 300.0,394.4 300.5,389.6 301.0,382.4 301.5,376.1 302.0,374.0 302.5,377.0 303.0,383.7 303.5,390.7 304.0,394.3 304.5,392.7 305.0,386.7 305.5,379.2 306.0,373.6 306.5,372.1 307.0,374.8 307.5,380.0 308.0,385.1 308.5,387.7 309.0,386.6 309.5,382.0 310.0,376.0 310.5,371.2 311.0,369.8 311.5,372.7 312.0,378.4 312.5,384.3 313.0,387.3 313.5,386.0 314.0,380.9 314.5,374.4 315.0,369.3 315.5,367.9 316.0,370.7 316.5,376.1 317.0,381.6 317.5,384.4 318.0,383.0 318.5,378.2 319.0,372.0 319.5,367.3 320.0,366.0 320.5,368.5 321.0,373.2 321.5,377.9 322.0,380.2 322.5,378.7 323.0,374.0 323.5,368.2 324.0,364.2 324.5,364.1 325.0,367.9 325.5,373.7 326.0,378.2 326.5,379.2 327.0,376.0 327.5,370.1 328.0,364.3 328.5,361.5 329.0,362.9 329.5,367.9 330.0,373.8 330.5,377.7 331.0,377.5 331.5,373.1 332.0,366.6 332.5,361.0 333.0,358.8 333.5,360.6 334.0,365.4 334.5,370.7 335.0,373.9 335.5,373.4 336.0,358.0 336.5,346.9 337.0,336.1 337.5,326.5 338.0,318.8 338.5,317.2 339.0,318.6 339.5,319.2 340.0,318.1 340.5,315.4 341.0,311.8 341.5,308.5 342.0,306.2 342.5,305.1 343.0,305.1 343.5,304.8 344.0,303.1 344.5,300.0 345.0,296.3 345.5,292.8 346.0,294.3 346.5,297.0 347.0,299.9 347.5,297.0 348.0,288.9 348.5,278.3 349.0,265.8 349.5,253.2 350.0,240.7 350.5,233.8 351.0,230.5 351.5,227.2 352.0,224.0 352.5,220.7 353.0,218.3 353.5,216.2 354.0,214.2 354.5,212.2 355.0,210.1 355.5,208.1 356.0,206.0 356.5,204.0 357.0,202.9 357.5,202.0 358.0,201.1 358.5,200.2 359.0,199.3 359.5,199.1 360.0,199.0 360.5,199.0 361.0,198.9 361.5,198.9 362.0,198.8 362.5,198.8 363.0,198.7 363.5,198.6 364.0,198.7 364.5,198.8 365.0,198.8 365.5,198.9 366.0,198.9 366.5,199.0 367.0,199.0 367.5,199.1 368.0,199.3 368.5,200.2 369.0,201.1 369.5,202.0 370.0,202.9 370.5,204.0 371.0,206.0 371.5,208.1 372.0,210.1 372.5,212.2 373.0,214.2 373.5,216.2 374.0,218.3 374.5,220.7 375.0,224.0 375.5,227.2 376.0,230.5 376.5,233.8 377.0,240.7 377.5,253.2 378.0,265.8 378.5,278.3 379.0,288.9 379.5,297.0 380.0,299.9 380.5,297.4 381.0,294.9 381.5,292.4 382.0,294.0 382.5,296.2 383.0,299.6 383.5,304.1 384.0,308.7 384.5,311.5 385.0,312.2 385.5,311.1 386.0,309.8 386.5,309.8 387.0,311.7 387.5,315.0 388.0,318.6 388.5,321.4 389.0,325.1 389.5,332.0 390.0,338.1 390.5,344.6 391.0,352.5 391.5,359.7 392.0,364.9 392.5,370.3 393.0,373.7 393.5,373.5 394.0,369.9 394.5,364.8 395.0,360.8 395.5,359.8 396.0,362.3 396.5,367.2 397.0,372.0 397.5,374.6 398.0,373.8 398.5,370.2 399.0,365.6 399.5,362.4 400.0,362.1 400.5,364.8 401.0,369.4 401.5,373.9 402.0,376.1 402.5,375.2 403.0,371.7 403.5,367.3 404.0,364.6 404.5,365.2 405.0,369.3 405.5,375.3 406.0,380.4 406.5,382.4 407.0,380.5 407.5,375.9 408.0,370.7 408.5,367.6 409.0,367.9 409.5,371.8 410.0,377.5 410.5,382.6 411.0,385.0 411.5,383.6 412.0,379.0 412.5,373.5 413.0,369.7 413.5,369.8 414.0,374.2 414.5,381.0 415.0,387.2 415.5,390.0 416.0,388.2 416.5,382.6 417.0,376.2 417.5,372.1 418.0,372.4 418.5,377.1 419.0,384.0 419.5,390.0 420.0,392.2 420.5,389.8 421.0,384.0 421.5,377.5 422.0,373.7 422.5,374.4 423.0,379.7 423.5,387.3 424.0,393.8 424.5,396.1 425.0,393.2 425.5,386.4 426.0,379.2 426.5,375.1 427.0,376.4 427.5,382.6 428.0,390.7 428.5,396.6 429.0,397.6 429.5,393.3 430.0,386.0 430.5,379.3 431.0,376.3 431.5,378.5 432.0,384.8 432.5,392.4 433.0,397.8 433.5,398.5 434.0,394.2 434.5,387.0 435.0,380.4 435.5,377.7 436.0,380.5 436.5,387.5 437.0,395.7 437.5,401.3 438.0,401.9 438.5,397.3 439.0,389.7 439.5,383.0 440.0,380.3 440.5,383.1 441.0,390.1 441.5,398.1 442.0,403.5 442.5,403.9 443.0,399.1 443.5,391.5 444.0,384.5 444.5,381.6 445.0,384.6 445.5,392.5 446.0,401.7 446.5,407.8 447.0,407.7 447.5,401.3 448.0,391.8 448.5,384.1 449.0,382.0 449.5,386.6 450.0,395.9 450.5,405.3 451.0,410.5 451.5,408.9 452.0,401.4 452.5,391.7 453.0,384.5 453.5,383.7 454.0,389.9 454.5,400.4 455.0,410.5 455.5,415.3 456.0,411.9 456.5,402.7 457.0,392.2 457.5,385.4 458.0,385.5 458.5,392.4 459.0,402.8 459.5,412.2 460.0,416.3 460.5,412.6 461.0,403.5 461.5,393.3 462.0,386.8 462.5,387.7 463.0,396.2 463.5,409.0 464.0,420.2 464.5,424.2 465.0,418.9 465.5,406.8 466.0,393.8 466.5,386.8 467.0,389.2 467.5,400.0 468.0,413.8 468.5,423.8 469.0,425.4 469.5,418.1 470.0,405.4 470.5,393.5 471.0,387.9 471.5,391.2 472.0,401.9 472.5,414.9 473.0,424.2 473.5,425.6 474.0,418.6 474.5,406.5 475.0,395.1 475.5,389.4 476.0,392.3 476.5,402.4 477.0,415.3 477.5,425.1 478.0,427.2 478.5,420.7 479.0,408.6 479.5,396.6 480.0,390.4 480.5,393.1 481.0,403.6 481.5,417.4 482.0,428.5 482.5,430.7 483.0,422.5 483.5,408.6 484.0,395.4 484.5,389.2 485.0,393.1 485.5,405.4 486.0,420.6 486.5,431.5 487.0,432.8 487.5,423.5 488.0,407.9 488.5,393.9 489.0,388.4 489.5,394.4 490.0,409.1 490.5,425.2 491.0,435.0 491.5,433.8 492.0,422.4 492.5,406.3 493.0,393.2 493.5,389.7 494.0,397.7 494.5,413.7 495.0,430.9 495.5,441.9 496.0,439.7 496.5,426.5 497.0,410.1 497.5,397.4 498.0,394.0 498.5,401.6 499.0,416.8 499.5,433.6 500.0,444.7 500.5,441.7 501.0,427.2 501.5,409.8 502.0,396.7 502.5,394.3 503.0,403.9 503.5,421.1 504.0,437.6 504.5,445.2 505.0,439.9 505.5,424.3 506.0,406.2 506.5,394.9 507.0,396.2 507.5,409.1 508.0,427.2 508.5,441.7 509.0,445.8 509.5,437.7 510.0,421.3 510.5,404.4 511.0,394.7 511.5,396.3 512.0,408.0 512.5,423.5 513.0,435.5 513.5,438.3 514.0,431.0 514.5,417.0 515.0,402.5 515.5,394.2 516.0,395.8 516.5,406.9 517.0,422.9 517.5,436.5 518.0,441.3 518.5,434.4 519.0,419.1 519.5,402.9 520.0,394.3 520.5,398.3 521.0,413.1 521.5,431.5 522.0,444.4 522.5,445.6 523.0,434.8 523.5,417.4 524.0,402.1 524.5,396.4 525.0,402.8 525.5,418.1 526.0,436.3 526.5,451.7 527.0,450.3 527.5,434.1 528.0,416.0 528.5,401.7 529.0,397.2 529.5,404.5 530.0,419.8 530.5,435.4 531.0,443.7 531.5,440.7 532.0,427.9 532.5,411.3 533.0,398.5 533.5,395.5 534.0,404.0 534.5,420.1 535.0,436.3 535.5,444.8 536.0,441.4 536.5,428.0 537.0,411.2 537.5,398.9 538.0,396.7 538.5,405.6 539.0,421.6 539.5,437.4 540.0,445.8 540.5,442.3 541.0,428.4 541.5,410.6 542.0,398.0 542.5,397.0 543.0,408.0 543.5,425.2 544.0,440.0 544.5,445.3 545.0,438.5 545.5,423.0 546.0,406.1 546.5,395.6 547.0,396.5 547.5,408.2 548.0,424.9 548.5,438.5 549.0,442.7 549.5,435.5 550.0,420.8 550.5,405.5 551.0,397.1 551.5,399.2 552.0,410.9 552.5,426.8 553.0,440.4 553.5,444.1 554.0,434.9 554.5,419.0 555.0,403.6 555.5,396.0 556.0,400.6 556.5,416.0 557.0,435.2 557.5,449.0 558.0,450.9 558.5,439.9 559.0,421.2 559.5,404.0 560.0,396.7 560.5,402.5 561.0,418.1 561.5,435.7 562.0,447.1 562.5,447.2 563.0,436.5 563.5,419.8 564.0,404.7 564.5,398.1 565.0,403.1 565.5,417.8 566.0,435.6 566.5,449.0 567.0,449.6 567.5,436.9 568.0,419.1 568.5,404.1 569.0,398.8 569.5,405.6 570.0,420.8 570.5,437.2 571.0,446.6 571.5,444.5 572.0,431.7 572.5,414.4 573.0,401.3 573.5,399.4 574.0,409.7 574.5,427.2 575.0,443.2 575.5,449.6 576.0,443.2 576.5,427.1 577.0,409.3 577.5,398.4 578.0,399.5 578.5,411.8 579.0,429.0 579.5,442.9 580.0,447.1 580.5,440.0 581.0,425.0 581.5,408.7 582.0,398.5 582.5,399.0 583.0,410.0 583.5,426.7 584.0,441.5 584.5,447.8 585.0,442.8 585.5,428.8 586.0,412.1 586.5,400.2 587.0,398.4 587.5,407.9 588.0,424.8 588.5,441.4 589.0,450.0 589.5,446.2 590.0,431.6 590.5,413.4 591.0,400.7 591.5,399.9 592.0,411.7 592.5,430.0 593.0,446.7 593.5,452.6 594.0,442.5 594.5,424.4 595.0,407.0 595.5,397.5 596.0,400.0 596.5,413.0 597.0,430.7 597.5,445.0 598.0,449.2 598.5,441.1 599.0,424.5 599.5,407.6 600.0,399.2 600.5,404.1 601.0,420.2 601.5,440.2 602.0,454.3 602.5,456.1 603.0,444.9 603.5,426.3 604.0,408.9 604.5,400.8 605.0,405.1 605.5,419.3 606.0,436.2 606.5,447.9 607.0,447.5 607.5,435.0 608.0,417.6 608.5,402.8 609.0,397.8 609.5,405.3 610.0,422.3 610.5,441.6 611.0,454.7 611.5,453.0 612.0,438.0 612.5,418.2 613.0,402.5 613.5,398.7 614.0,409.1 614.5,429.0 615.0,449.0 615.5,459.5 616.0,455.7 616.5,439.4 617.0,418.4 617.5,402.6 618.0,399.2 618.5,409.6 619.0,428.5 619.5,446.7 620.0,455.6 620.5,451.0 621.0,435.2 621.5,415.9 622.0,402.4 622.5,401.2 623.0,413.0 623.5,432.0 624.0,448.9 624.5,455.4 625.0,448.5 625.5,431.6 626.0,412.8 626.5,400.3 627.0,399.7 627.4,407.8 627.5,410.6 628.0,428.6 628.5,445.0 629.0,452.3 629.5,446.8 630.0,431.2 630.5,412.6 631.0,400.0 631.5,399.2 632.0,410.7 632.5,429.5 633.0,448.5 633.5,458.7 634.0,450.5 634.5,432.1 635.0,413.1 635.5,400.8 636.0,401.1 636.5,413.8 637.0,432.5 637.5,448.1 638.0,453.2 638.5,445.6 639.0,429.3 639.5,412.0 640.0,402.0 640.5,403.6 641.0,416.1 641.5,433.7 642.0,449.4 642.5,454.9 643.0,445.9 643.5,429.2 644.0,412.0 644.5,401.7 645.0,403.2 645.5,416.2 646.0,434.9 646.5,450.7 647.0,455.7 647.5,447.3 648.0,429.5 648.5,410.7 649.0,399.8 649.5,402.0 650.0,416.2 650.5,435.3 651.0,449.9 651.5,452.9 652.0,442.8 652.5,425.0 653.0,408.1 653.5,400.4 654.0,405.4 654.5,420.6 655.0,438.6 655.5,450.6 656.0,450.9 656.5,439.4 657.0,421.7 657.5,406.4 658.0,400.4 658.5,406.5 659.0,421.6 659.5,438.5 660.0,475.0 660.5,448.9 661.0,437.4 661.5,420.3 662.0,406.0 662.5,401.2 663.0,408.3 663.5,423.8 664.0,440.4 664.5,450.2 665.0,448.4 665.5,435.6 666.0,417.7 666.5,403.4 667.0,400.2 667.5,409.7 668.0,427.3 668.5,443.9 669.0,451.3 669.5,445.7 670.0,430.1 670.5,412.0 671.0,399.9 671.5,398.8 672.0,408.7 672.5,424.8 673.0,440.1 673.5,447.6 674.0,442.8 674.5,429.2 675.0,413.3 675.5,402.3 676.0,401.9 676.5,413.0 676.6,416.7 677.0,432.3 677.5,450.5 678.0,459.4 678.5,454.5 679.0,437.7 679.5,417.2 680.0,403.0 680.5,402.5 680.7,406.3 681.0,415.7 681.5,436.3 682.0,454.4 682.5,461.3 683.0,453.9 683.5,435.8 684.0,415.6 684.5,402.8 685.0,402.8 685.5,415.3 686.0,434.5 686.5,455.8 687.0,468.0 687.5,454.8 688.0,433.3 688.5,414.7 689.0,403.2 689.5,403.7 690.0,415.8 690.5,433.9 691.0,451.0 691.5,458.6 691.6,458.2 692.0,450.3 692.5,433.5 693.0,416.5 693.5,405.6 694.0,405.9 694.5,417.7 695.0,435.8 695.5,452.0 696.0,458.8 696.5,453.0 697.0,437.4 697.5,418.9 698.0,406.1 698.5,405.1 699.0,416.4 699.5,435.1 700.0,452.2 700.5,459.4 701.0,452.6 701.5,435.0 702.0,415.2 702.5,402.8 703.0,403.9 703.5,417.6 704.0,436.4 704.5,450.7 705.0,453.2 705.3,448.0 705.5,442.2 706.0,424.4 706.5,408.1 707.0,401.6 707.5,408.1 708.0,424.6 708.5,443.5 709.0,456.9 709.5,454.2 710.0,438.2 710.5,419.6 711.0,405.6 711.5,402.3 712.0,411.3 712.5,428.1 713.0,444.6 713.5,452.8 714.0,448.6 714.5,433.7 715.0,415.4"/>
<polyline fill="none" stroke="#a6761d" stroke-width="2" stroke-linejoin="round" points="81.0,445.5 81.5,449.8 82.0,440.0 82.5,420.8 83.0,401.8 83.5,392.1 84.0,396.2 84.5,411.9 85.0,431.4 85.5,445.3 86.0,447.3 86.5,436.6 87.0,418.3 87.5,401.1 88.0,392.7 88.5,396.7 89.0,411.0 89.5,428.5 90.0,441.1 90.5,442.8 91.0,432.6 91.5,415.1 92.0,398.4 92.5,390.4 93.0,395.1 93.5,410.1 94.0,428.3 94.5,440.9 95.0,441.8 95.2,438.5 95.5,430.7 96.0,413.0 96.5,396.8 97.0,389.8 97.5,395.4 98.0,411.1 98.5,429.6 99.0,441.9 99.5,442.2 100.0,430.6 100.5,412.9 101.0,397.6 101.5,391.8 102.0,397.8 102.5,412.8 103.0,429.7 103.5,440.9 104.0,440.9 104.5,429.5 105.0,411.9 105.5,396.8 106.0,391.7 106.5,399.7 107.0,417.5 107.5,440.4 108.0,461.6 108.5,454.2 109.0,429.9 109.5,408.7 109.8,398.7 110.0,394.1 110.5,392.5 111.0,404.2 111.5,423.3 112.0,440.2 112.5,446.8 113.0,440.0 113.5,423.3 114.0,404.6 114.5,393.1 115.0,394.4 115.5,408.2 116.0,427.7 116.5,443.4 117.0,447.6 117.5,438.6 118.0,421.0 118.5,403.0 119.0,392.7 119.5,394.2 120.0,406.4 120.5,423.5 121.0,437.7 121.5,442.5 122.0,435.4 122.3,426.8 122.5,420.0 123.0,402.6 123.5,392.2 124.0,393.8 124.5,407.1 125.0,427.6 125.5,457.2 126.0,469.6 126.5,442.1 127.0,416.5 127.5,399.0 128.0,391.1 128.5,395.9 129.0,410.6 129.5,428.9 130.0,444.4 130.5,444.6 131.0,429.4 131.5,411.0 132.0,395.7 132.5,390.4 133.0,398.2 133.5,415.9 134.0,443.3 134.5,480.4 135.0,474.5 135.5,436.8 136.0,412.1 136.5,395.8 137.0,390.0 137.5,397.3 138.0,414.2 138.5,432.9 139.0,444.6 139.5,443.5 140.0,430.2 140.5,411.3 141.0,395.8 141.5,390.9 142.0,398.7 142.5,415.2 143.0,433.6 143.5,446.5 144.0,443.7 144.5,428.2 145.0,443.7 145.5,480.7 145.8,503.0 146.0,488.2 146.5,451.1 147.0,417.0 147.5,433.2 148.0,441.7 148.5,438.6 149.0,425.5 149.5,408.4 150.0,395.0 150.5,391.3 151.0,399.2 151.5,415.4 152.0,433.4 152.5,445.7 153.0,442.3 153.5,426.5 154.0,408.4 154.5,394.8 155.0,391.0 155.5,397.9 156.0,411.2 156.5,427.3 157.0,442.2 157.5,437.4 158.0,419.9 158.5,404.8 159.0,393.6 159.5,390.4 160.0,397.2 160.5,411.2 161.0,426.8 161.5,437.9 162.0,434.9 162.5,421.1 163.0,405.7 163.5,394.0 163.6,392.7 164.0,391.3 164.5,399.4 165.0,415.1 165.5,431.1 166.0,439.4 166.5,435.4 167.0,421.0 167.5,403.2 168.0,391.1 168.5,390.6 169.0,401.7 169.5,420.1 170.0,449.3 170.5,467.2 171.0,440.2 171.5,414.0 172.0,397.6 172.5,389.2 173.0,392.1 173.5,404.9 174.0,421.9 174.5,437.3 175.0,440.5 175.5,428.2 176.0,411.5 176.5,397.0 177.0,390.6 177.5,394.9 178.0,407.3 178.5,421.6 179.0,431.2 179.5,431.6 180.0,422.8 180.5,408.7 181.0,395.7 181.5,389.9 182.0,394.2 182.5,406.6 183.0,421.8 183.5,434.1 184.0,434.5 184.5,422.7 185.0,407.3 185.5,394.4 186.0,390.0 186.5,396.3 187.0,410.3 187.5,424.7 188.0,432.4 188.5,429.7 189.0,418.1 189.5,403.4 190.0,392.3 190.5,389.8 191.0,396.5 191.5,408.9 192.0,420.9 192.5,426.9 193.0,424.1 193.5,413.7 194.0,400.4 194.5,390.5 195.0,388.9 195.5,397.1 196.0,411.7 196.5,425.8 197.0,432.6 197.5,428.0 198.0,414.5 198.5,398.8 199.0,388.4 199.5,388.2 200.0,398.3 200.5,413.7 201.0,426.6 201.5,430.6 202.0,423.8 202.5,409.7 203.0,395.3 203.5,387.3 204.0,388.9 204.5,398.7 205.0,411.4 205.5,420.9 206.0,422.7 206.5,416.1 207.0,404.0 207.5,392.1 208.0,386.1 208.5,389.1 209.0,399.9 209.5,413.2 210.0,422.7 210.5,424.0 211.0,416.5 211.5,403.7 212.0,391.8 212.5,386.4 213.0,390.2 213.5,401.6 214.0,415.1 214.5,424.4 215.0,425.0 215.5,417.0 216.0,404.2 216.5,392.3 217.0,386.4 217.5,388.3 218.0,396.7 218.5,407.4 219.0,415.1 219.5,415.9 220.0,409.5 220.5,398.7 221.0,388.6 221.5,383.8 222.0,386.0 222.5,393.8 223.0,403.2 223.5,409.8 224.0,409.9 224.5,403.3 225.0,393.8 225.5,385.6 226.0,382.6 226.5,386.3 227.0,395.0 227.5,404.4 228.0,409.9 228.5,408.8 229.0,401.4 229.5,391.3 230.0,383.2 230.5,380.8 231.0,384.9 231.5,393.2 232.0,401.6 232.5,406.1 233.0,404.6 233.5,397.7 234.0,388.6 234.5,381.4 235.0,379.4 235.5,383.7 236.0,392.4 236.5,401.5 237.0,406.7 237.5,405.4 238.0,398.1 238.5,388.2 239.0,380.6 239.5,378.8 240.0,383.6 240.5,392.7 241.0,401.6 241.5,405.8 242.0,403.3 242.5,395.3 243.0,385.8 243.5,379.0 244.0,378.0 244.5,382.8 245.0,391.2 245.5,398.8 246.0,402.0 246.5,399.1 247.0,391.6 247.5,383.1 248.0,377.4 248.5,377.2 249.0,381.9 249.5,388.9 250.0,394.5 250.5,396.1 251.0,393.2 251.5,387.0 252.0,380.3 252.5,376.1 253.0,376.2 253.5,380.8 254.0,387.7 254.5,393.5 255.0,395.4 255.5,392.3 256.0,385.6 256.5,378.3 257.0,373.9 257.5,374.2 258.0,378.9 258.5,385.7 259.0,391.1 259.5,392.6 260.0,389.4 260.5,383.1 261.0,376.5 261.5,372.6 262.0,373.1 262.5,377.5 263.0,383.8 263.5,388.9 264.0,390.3 264.5,387.1 265.0,380.7 265.5,374.1 266.0,370.5 266.5,371.7 267.0,377.3 267.5,384.5 268.0,389.7 268.5,390.0 269.0,385.1 269.5,377.5 270.0,370.8 270.5,368.1 271.0,370.5 271.5,376.3 272.0,382.4 272.5,385.8 273.0,384.8 273.5,379.9 274.0,373.3 274.5,368.0 275.0,366.2 275.5,368.7 276.0,374.1 276.5,379.9 277.0,383.1 277.5,382.2 278.0,377.4 278.5,370.9 279.0,365.5 279.5,363.9 280.0,366.4 280.5,371.8 281.0,377.1 281.5,379.6 282.0,378.1 282.5,373.1 283.0,366.9 283.5,362.4 284.0,361.4 284.5,364.1 285.0,368.9 285.5,373.3 286.0,375.1 286.5,373.3 287.0,368.9 287.5,363.5 288.0,359.5 288.5,358.5 289.0,360.9 289.5,365.5 290.0,370.1 290.5,372.3 291.0,365.1 291.5,354.3 292.0,342.9 292.5,332.3 293.0,323.1 293.5,316.7 294.0,318.1 294.5,319.3 295.0,319.3 295.5,317.4 296.0,314.0 296.5,310.4 297.0,307.6 297.5,305.6 298.0,305.3 298.5,305.1 299.0,304.0 299.5,301.5 300.0,298.0 300.5,294.3 301.0,294.2 301.5,296.8 302.0,299.7 302.5,299.0 303.0,290.7 303.5,280.7 304.0,267.9 304.5,255.1 305.0,242.3 305.5,234.4 306.0,231.1 306.5,227.8 307.0,224.5 307.5,221.1 308.0,218.7 308.5,216.6 309.0,214.5 309.5,212.4 310.0,210.4 310.5,208.3 311.0,206.2 311.5,204.1 312.0,203.1 312.5,202.2 313.0,201.3 313.5,200.4 314.0,199.6 314.5,199.5 315.0,199.4 315.5,199.4 316.0,199.3 316.5,199.3 317.0,199.2 317.5,199.2 318.0,199.1 318.5,199.1 319.0,199.1 319.5,199.2 320.0,199.3 320.5,199.3 321.0,199.4 321.5,199.4 322.0,199.5 322.5,199.5 323.0,200.2 323.5,201.1 324.0,202.0 324.5,203.0 325.0,203.9 325.5,205.8 326.0,207.9 326.5,210.0 327.0,212.0 327.5,214.1 328.0,216.2 328.5,218.3 329.0,220.5 329.5,223.8 330.0,227.1 330.5,230.5 331.0,233.8 331.5,239.8 332.0,252.6 332.5,265.3 333.0,278.1 333.5,289.1 334.0,297.4 334.5,300.3 335.0,297.8 335.5,295.7 336.0,293.9 336.5,295.4 337.0,296.7 337.5,298.9 338.0,302.4 338.5,307.2 339.0,311.6 339.5,314.5 340.0,314.8 340.5,313.6 341.0,312.2 341.5,311.8 342.0,313.0 342.5,315.9 343.0,319.6 343.5,328.0 344.0,337.5 344.5,345.2 345.0,351.8 345.5,358.1 346.0,357.4 346.5,358.1 347.0,362.1 347.5,367.9 348.0,373.0 348.5,375.1 349.0,373.2 349.5,368.3 350.0,362.9 350.5,360.0 351.0,361.2 351.5,365.9 352.0,372.2 352.5,376.9 353.0,378.1 353.5,375.4 354.0,370.3 354.5,365.5 355.0,363.2 355.5,364.9 356.0,369.9 356.5,376.0 357.0,380.6 357.5,381.7 358.0,378.7 358.5,373.2 359.0,367.9 359.5,365.5 360.0,367.7 360.5,373.6 361.0,380.6 361.5,385.4 362.0,385.6 362.5,381.2 363.0,374.5 363.5,368.9 364.0,367.2 364.5,370.1 365.0,376.0 365.5,382.0 366.0,385.3 366.5,384.6 367.0,380.4 367.5,374.8 368.0,370.4 368.5,369.6 369.0,373.0 369.5,379.3 370.0,385.8 370.5,389.6 371.0,389.0 371.5,384.5 372.0,378.3 372.5,373.6 373.0,372.4 373.5,375.4 374.0,381.4 374.5,387.7 375.0,391.7 375.5,391.6 376.0,387.3 376.5,380.9 377.0,375.4 377.5,373.8 378.0,377.2 378.5,384.4 379.0,392.2 379.5,397.1 380.0,396.5 380.5,390.7 381.0,382.7 381.5,376.7 382.0,375.7 382.5,380.5 383.0,388.6 383.5,396.3 384.0,399.9 384.5,397.6 385.0,390.7 385.5,382.5 386.0,377.4 386.5,377.9 387.0,383.8 387.5,392.2 388.0,399.0 388.5,401.0 389.0,397.3 389.5,390.0 390.0,382.7 390.5,379.0 391.0,380.8 391.5,387.4 392.0,395.5 392.5,401.4 393.0,402.2 393.5,397.6 394.0,390.0 394.5,383.1 395.0,380.3 395.5,383.4 396.0,391.1 396.5,400.2 397.0,406.7 397.5,407.2 398.0,401.6 398.5,392.7 399.0,384.8 399.5,382.0 400.0,385.8 400.5,394.8 401.0,405.1 401.5,412.7 402.0,412.3 402.5,404.3 403.0,394.3 403.5,386.2 404.0,383.2 404.5,386.8 405.0,395.5 405.5,405.2 406.0,411.6 406.5,411.4 407.0,404.6 407.5,394.7 408.0,386.3 408.5,383.4 409.0,387.2 409.5,396.2 410.0,406.1 410.5,412.4 411.0,412.3 411.5,405.9 412.0,396.1 412.5,387.8 413.0,385.4 413.5,390.4 414.0,400.9 414.5,412.0 415.0,418.7 415.5,418.0 416.0,410.5 416.5,399.8 417.0,390.9 417.5,388.4 418.0,393.8 418.5,405.2 419.0,417.6 419.5,425.0 420.0,423.8 420.5,414.3 421.0,401.3 421.5,391.4 422.0,389.4 422.5,396.1 423.0,407.9 423.5,418.8 424.0,423.6 424.5,420.1 425.0,410.0 425.5,398.2 426.0,390.3 426.5,390.3 427.0,398.4 427.5,410.8 428.0,421.8 428.5,425.8 429.0,420.9 429.5,409.4 430.0,397.0 430.5,390.4 431.0,393.2 431.5,404.6 432.0,419.3 432.5,430.9 433.0,433.3 433.5,425.0 434.0,411.2 434.5,398.2 435.0,391.8 435.5,395.2 436.0,406.9 436.5,421.6 437.0,432.5 437.5,434.5 438.0,426.8 438.5,413.0 439.0,399.3 439.5,391.7 440.0,393.4 440.5,403.7 441.0,418.3 441.5,430.9 442.0,436.1 442.5,431.3 443.0,418.7 443.5,404.1 444.0,394.7 444.5,395.5 445.0,406.6 445.5,422.6 446.0,435.7 446.5,439.3 447.0,432.0 447.5,417.5 448.0,402.5 448.5,393.9 449.0,395.5 449.5,406.3 450.0,421.3 450.5,433.7 451.0,437.4 451.5,430.6 452.0,416.2 452.5,401.0 453.0,392.3 453.5,394.8 454.0,407.4 454.5,424.4 455.0,437.5 455.5,440.6 456.0,432.3 456.5,416.6 457.0,401.1 457.5,393.5 458.0,397.8 458.5,411.8 459.0,428.6 459.5,439.6 460.0,439.5 460.5,428.7 461.0,412.9 461.5,399.6 462.0,394.4 462.5,399.2 463.0,411.7 463.5,426.4 464.0,436.7 464.5,437.4 465.0,427.7 465.5,411.8 466.0,398.0 466.5,394.0 467.0,402.3 467.5,419.2 468.0,436.5 468.5,445.8 469.0,440.8 469.5,425.4 470.0,407.8 470.5,395.5 471.0,394.2 471.5,404.0 472.0,420.3 472.5,435.4 473.0,441.9 473.5,436.5 474.0,421.8 474.5,405.0 475.0,394.8 475.5,396.3 476.0,408.5 476.5,424.9 477.0,437.2 477.5,439.6 478.0,431.3 478.5,416.6 479.0,402.3 479.5,395.1 480.0,398.2 480.5,410.4 481.0,426.6 481.5,441.2 482.0,445.4 482.5,435.2 483.0,419.2 483.5,404.1 484.0,395.8 484.5,398.6 485.0,411.7 485.5,429.6 486.0,446.1 486.5,450.9 487.0,439.3 487.5,420.8 488.0,403.6 488.5,395.1 489.0,399.4 489.5,414.3 490.0,432.4 490.5,444.7 491.0,445.4 491.5,434.1 492.0,416.4 492.5,400.7 493.0,394.3 493.5,400.2 494.0,415.5 494.5,432.8 495.0,444.2 495.5,444.4 496.0,433.6 496.5,417.2 497.0,403.2 497.5,398.5 498.0,405.4 498.5,420.7 499.0,436.8 499.5,446.1 500.0,444.2 500.5,432.0 501.0,415.2 501.5,401.7 502.0,397.9 502.5,405.8 503.0,422.0 503.5,439.0 504.0,449.1 504.5,445.7 505.0,431.1 505.5,413.0 506.0,399.4 506.5,397.0 507.0,407.1 507.5,424.9 508.0,441.6 508.5,449.1 509.0,443.6 509.5,428.0 510.0,409.8 510.5,398.0 511.0,398.3 511.5,410.3 512.0,427.9 512.5,442.6 513.0,447.3 513.5,440.0 514.0,424.3 514.5,408.0 515.0,398.9 515.5,401.1 516.0,413.2 516.5,429.0 517.0,440.9 517.5,443.5 518.0,435.8 518.5,421.3 519.0,406.3 519.5,397.4 520.0,398.7 520.5,410.1 521.0,427.2 521.5,445.9 522.0,453.9 522.5,440.7 523.0,421.9 523.5,405.4 524.0,396.6 524.5,399.9 525.0,414.1 525.5,432.5 526.0,446.7 526.5,449.2 527.0,438.3 527.5,420.8 528.0,404.9 528.5,398.5 529.0,404.8 529.5,421.1 530.0,442.0 530.5,462.8 531.0,461.7 531.5,440.8 532.0,420.5 532.5,405.0 533.0,399.6 533.5,406.7 534.0,422.8 534.5,440.8 535.0,453.2 535.5,452.0 536.0,438.0 536.5,419.5 537.0,404.1 537.5,397.9 538.0,403.8 538.5,418.9 539.0,436.7 539.5,450.3 540.0,451.3 540.5,438.9 541.0,421.4 541.5,406.0 542.0,399.8 542.5,406.0 543.0,422.2 543.5,440.9 544.0,453.6 544.5,454.1 545.0,442.2 545.5,423.7 546.0,408.0 546.5,403.4 547.0,412.4 547.5,430.9 548.0,451.8 548.5,466.3 549.0,459.4 549.5,439.4 550.0,419.1 550.5,404.8 551.0,402.8 551.5,413.8 552.0,432.7 552.5,450.5 553.0,458.4 553.5,452.6 554.0,435.5 554.5,415.1 555.0,400.7 555.5,398.9 556.0,410.1 556.5,428.5 557.0,446.7 557.5,456.0 558.0,447.9 558.5,429.9 559.0,411.2 559.5,428.9 560.0,466.0 560.5,428.9 561.0,428.4 561.5,443.9 562.0,449.7 562.5,443.5 563.0,428.1 563.5,411.1 564.0,400.8 564.5,402.4 565.0,415.6 565.5,434.0 566.0,448.3 566.5,451.1 567.0,441.1 567.5,423.3 568.0,406.5 568.5,398.3 569.0,401.8 569.5,414.6 570.0,430.2 570.5,441.7 571.0,443.9 571.5,435.9 572.0,421.4 572.5,406.7 573.0,398.8 573.5,402.2 574.0,416.2 574.5,435.3 575.0,450.8 575.5,455.7 576.0,447.4 576.5,429.8 577.0,411.4 577.5,401.0 578.0,403.8 578.5,418.6 579.0,438.4 579.5,454.0 580.0,457.8 580.5,447.9 581.0,428.7 581.5,409.9 582.0,401.0 582.5,406.9 583.0,424.6 583.5,444.9 584.0,457.3 584.5,455.4 585.0,440.2 585.5,419.5 586.0,403.6 586.5,400.1 587.0,410.3 587.5,428.4 588.0,444.7 588.5,450.9 589.0,444.0 589.5,427.7 590.0,410.1 590.5,399.3 591.0,399.7 591.5,410.7 592.0,427.0 592.5,441.3 593.0,447.1 593.5,441.7 594.0,427.4 594.5,410.7 595.0,399.4 595.5,399.1 596.0,410.4 596.5,428.6 597.0,445.1 597.5,452.0 598.0,445.5 598.5,428.6 599.0,409.6 599.5,398.0 600.0,399.9 600.5,414.5 601.0,434.3 601.5,449.5 602.0,452.3 602.5,441.6 603.0,422.9 603.5,405.2 604.0,396.8 604.5,401.0 605.0,415.6 605.5,433.5 606.0,446.4 606.5,448.3 607.0,438.4 607.5,421.4 608.0,405.1 608.5,397.1 609.0,401.0 609.5,415.2 610.0,433.7 610.5,448.2 611.0,452.3 611.5,443.9 612.0,426.7 612.5,408.9 613.0,399.4 613.5,402.7 614.0,416.8 614.5,434.4 615.0,446.6 615.5,448.2 616.0,438.9 616.5,423.4 617.0,408.5 617.5,400.8 618.0,403.4 618.5,415.3 619.0,431.2 619.5,443.9 620.0,447.5 620.5,440.2 621.0,425.1 621.5,409.6 622.0,401.5 622.5,405.5 623.0,420.5 623.5,439.3 624.0,452.6 624.5,453.6 625.0,441.7 625.5,422.9 626.0,406.4 626.5,399.9 627.0,406.3 627.4,418.7 627.5,422.3 628.0,440.4 628.5,452.0 629.0,451.5 629.5,439.1 630.0,420.5 630.5,404.6 631.0,399.0 631.5,406.6 632.0,424.4 632.5,444.3 633.0,456.7 633.5,455.6 634.0,441.4 634.5,421.0 635.0,404.8 635.5,400.2 636.0,409.0 636.5,425.9 637.0,442.3 637.5,450.5 638.0,446.3 638.5,432.1 639.0,415.0 639.5,402.8 640.0,401.0 640.5,410.8 641.0,427.4 641.5,443.3 642.0,451.1 642.5,447.2 643.0,433.4 643.5,416.0 644.0,403.2 644.5,401.1 645.0,410.6 645.5,427.3 646.0,443.2 646.5,450.6 647.0,446.0 647.5,431.8 648.0,414.4 648.5,401.8 649.0,399.8 649.5,409.3 650.0,426.2 650.5,444.9 651.0,457.7 651.5,452.1 652.0,435.4 652.5,417.9 653.0,405.2 653.5,403.4 654.0,414.1 654.5,433.4 655.0,452.3 655.5,461.5 656.0,455.8 656.5,437.8 657.0,416.3 657.5,402.3 658.0,402.6 658.5,416.2 659.0,435.3 659.5,449.9 660.0,452.5 660.5,442.1 661.0,423.9 661.5,406.7 662.0,398.6 662.5,403.1 663.0,417.8 663.5,435.3 664.0,447.1 664.5,447.4 665.0,436.0 665.5,418.7 666.0,403.9 666.5,398.2 667.0,403.7 667.5,417.1 668.0,431.9 668.5,441.1 669.0,441.0 669.5,431.7 670.0,417.6 670.5,405.5 671.0,400.9 671.5,406.4 672.0,419.9 672.5,436.6 673.0,451.0 673.5,451.7 674.0,438.3 674.5,421.3 675.0,406.5 675.5,400.4 676.0,406.8 676.5,423.4 676.6,427.7 677.0,443.6 677.5,457.2 678.0,457.8 678.5,445.2 679.0,425.5 679.5,408.2 680.0,401.7 680.5,409.4 680.7,415.8 681.0,427.5 681.5,446.8 682.0,457.6 682.5,454.4 683.0,439.1 683.5,419.6 684.0,405.3 684.5,402.2 685.0,410.3 685.5,424.1 686.0,436.6 686.5,442.2 687.0,439.0 687.5,428.5 688.0,415.4 688.5,405.7 689.0,404.6 689.5,414.2 690.0,430.8 690.5,446.9 691.0,454.4 691.5,449.3 691.6,446.8 692.0,433.5 692.5,414.8 693.0,401.8 693.5,400.6 694.0,411.7 694.5,430.1 695.0,447.7 695.5,456.2 696.0,449.6 696.5,432.7 697.0,413.8 697.5,401.4 698.0,401.2 698.5,413.1 699.0,431.3 699.5,449.2 700.0,457.5 700.5,447.1 701.0,428.7 701.5,411.0 702.0,400.5 702.5,402.1 703.0,414.9 703.5,432.9 704.0,447.6 704.5,451.6 705.0,442.6 705.3,433.2 705.5,426.4 706.0,409.9 706.5,401.4 707.0,404.9 707.5,419.3 708.0,438.2 708.5,453.0 709.0,456.8 709.5,447.6 710.0,429.8 710.5,412.0 711.0,402.8 711.5,406.4 712.0,420.5 712.5,438.0 713.0,450.4 713.5,451.6 714.0,441.2 714.5,423.8 715.0,407.8"/>
<polyline fill="none" stroke="#666666" stroke-width="2" stroke-linejoin="round" points="81.0,451.9 81.5,453.5 82.0,434.2 82.5,412.9 83.0,396.1 83.5,390.7 84.0,398.7 84.5,415.6 85.0,432.2 85.5,440.5 86.0,436.9 86.5,423.3 87.0,405.9 87.5,392.7 88.0,389.4 88.5,397.6 89.0,413.7 89.5,433.7 90.0,451.4 90.5,445.7 91.0,425.4 91.5,407.2 92.0,394.0 92.5,390.6 93.0,398.7 93.5,414.8 94.0,435.1 94.5,455.3 95.0,451.2 95.2,443.2 95.5,430.2 96.0,411.9 96.5,398.4 97.0,394.2 97.5,401.3 98.0,416.8 98.5,442.7 99.0,478.3 99.5,466.1 100.0,429.0 100.5,407.8 101.0,394.6 101.5,391.7 102.0,400.1 102.5,416.6 103.0,446.1 103.5,478.2 104.0,456.7 104.5,423.7 105.0,404.5 105.5,392.3 106.0,391.9 106.5,404.9 107.0,425.9 107.5,445.0 108.0,452.6 108.5,444.8 109.0,425.6 109.5,404.5 109.8,395.2 110.0,391.6 110.5,392.3 111.0,405.4 111.5,425.5 112.0,454.1 112.5,472.0 113.0,448.3 113.5,421.5 114.0,403.3 114.5,393.0 115.0,394.9 115.5,408.3 116.0,429.1 116.5,460.6 117.0,475.0 117.5,446.3 118.0,419.5 118.5,401.6 119.0,392.5 119.5,395.5 120.0,408.9 120.5,425.9 121.0,438.4 121.5,440.5 122.0,431.4 122.3,422.3 122.5,415.7 123.0,400.8 123.5,393.1 124.0,396.3 124.5,408.8 125.0,425.1 125.5,437.7 126.0,440.5 126.5,431.7 127.0,415.1 127.5,398.6 128.0,389.9 128.5,393.0 129.0,406.0 129.5,422.4 130.0,434.5 130.5,436.7 131.0,428.1 131.5,412.5 132.0,397.0 132.5,388.7 133.0,391.9 133.5,405.4 134.0,422.7 134.5,435.5 135.0,437.7 135.5,428.1 136.0,411.3 136.5,395.5 137.0,388.1 137.5,392.5 138.0,406.5 138.5,423.1 139.0,434.3 139.5,434.0 140.0,422.4 140.5,406.1 141.0,392.8 141.5,388.9 142.0,395.9 142.5,410.1 143.0,424.5 143.5,432.1 144.0,429.4 144.5,417.9 145.0,403.1 145.5,392.0 145.8,389.4 146.0,389.7 146.5,397.0 147.0,411.5 147.5,431.5 148.0,452.1 148.5,445.5 149.0,423.6 149.5,405.7 150.0,392.6 150.5,389.0 151.0,396.6 151.5,411.6 152.0,426.9 152.5,435.3 153.0,432.9 153.5,420.7 154.0,404.5 154.5,392.0 155.0,389.2 155.5,397.9 156.0,413.8 156.5,429.6 157.0,437.6 157.5,431.8 158.0,416.7 158.5,400.3 159.0,389.8 159.5,389.8 160.0,399.3 160.5,413.3 161.0,427.6 161.5,433.0 162.0,421.6 162.5,406.6 163.0,394.0 163.5,387.3 163.6,386.9 164.0,389.1 164.5,398.6 165.0,411.2 165.5,420.9 166.0,423.3 166.5,417.0 167.0,404.9 167.5,392.8 168.0,386.4 168.5,388.9 169.0,399.0 169.5,413.5 170.0,432.7 170.5,439.9 171.0,422.7 171.5,405.5 172.0,392.6 172.5,385.7 173.0,387.5 173.5,396.7 174.0,408.4 174.5,416.7 175.0,417.5 175.5,410.5 176.0,398.9 176.5,388.2 177.0,383.2 177.5,386.4 178.0,396.5 178.5,409.0 179.0,418.0 179.5,419.2 180.0,411.6 180.5,399.1 181.0,387.7 181.5,383.3 182.0,388.2 182.5,399.9 183.0,412.5 183.5,420.0 184.0,418.7 184.5,409.5 185.0,396.6 185.5,386.1 186.0,382.7 186.5,387.5 187.0,397.8 187.5,408.0 188.0,413.0 188.5,410.5 189.0,401.8 189.5,391.1 190.0,383.4 190.5,382.1 191.0,387.7 191.5,397.3 192.0,406.2 192.5,409.8 193.0,406.5 193.5,397.9 194.0,388.1 194.5,381.8 195.0,381.4 195.5,386.7 196.0,394.9 196.5,402.8 197.0,406.3 197.5,401.5 198.0,392.9 198.5,384.6 199.0,379.5 199.5,380.0 200.0,385.5 200.5,393.2 201.0,399.1 201.5,400.4 202.0,396.4 202.5,389.2 203.0,382.1 203.5,378.1 204.0,378.7 204.5,383.3 205.0,389.8 205.5,395.1 206.0,396.8 206.5,393.8 207.0,387.3 207.5,380.3 208.0,376.1 208.5,377.2 209.0,383.2 209.5,391.2 210.0,397.1 210.5,397.9 211.0,393.0 211.5,384.9 212.0,377.3 212.5,373.6 213.0,374.9 213.5,380.1 214.0,386.6 214.5,391.2 215.0,391.5 215.5,387.3 216.0,380.7 216.5,374.7 217.0,372.0 217.5,373.7 218.0,379.0 218.5,385.3 219.0,389.5 219.5,389.5 220.0,385.2 220.5,378.5 221.0,372.8 221.5,370.6 222.0,372.5 222.5,377.3 223.0,382.4 223.5,385.3 224.0,384.6 224.5,380.5 225.0,374.9 225.5,370.2 226.0,368.5 226.5,370.4 227.0,374.8 227.5,379.6 228.0,382.3 228.5,381.7 229.0,377.8 229.5,372.3 230.0,367.5 230.5,365.7 231.0,367.7 231.5,372.6 232.0,377.9 232.5,381.0 233.0,380.1 233.5,375.6 234.0,369.6 234.5,364.8 235.0,363.5 235.5,366.2 236.0,371.4 236.5,376.4 237.0,378.7 237.5,377.1 238.0,372.2 238.5,366.3 239.0,362.1 239.5,361.2 240.0,364.0 240.5,368.7 241.0,373.0 241.5,374.9 242.0,373.2 242.5,368.5 243.0,362.9 243.5,358.9 244.0,358.3 244.5,361.3 245.0,366.4 245.5,371.1 246.0,373.0 246.5,371.1 247.0,363.2 247.5,351.7 248.0,341.0 248.5,332.0 249.0,324.6 249.5,319.8 250.0,320.9 250.5,320.6 251.0,318.6 251.5,315.3 252.0,311.6 252.5,308.9 253.0,307.7 253.5,307.3 254.0,307.6 254.5,306.6 255.0,304.1 255.5,300.4 256.0,296.4 256.5,293.0 257.0,295.4 257.5,298.3 258.0,301.3 258.5,295.9 259.0,287.4 259.5,275.2 260.0,262.1 260.5,249.1 261.0,236.5 261.5,233.1 262.0,229.7 262.5,226.3 263.0,222.9 263.5,219.9 264.0,217.8 264.5,215.7 265.0,213.5 265.5,211.4 266.0,209.3 266.5,207.2 267.0,205.1 267.5,203.8 268.0,202.8 268.5,201.9 269.0,201.0 269.5,200.0 270.0,199.9 270.5,199.9 271.0,199.8 271.5,199.8 272.0,199.7 272.5,199.6 273.0,199.6 273.5,199.5 274.0,199.5 274.5,199.6 275.0,199.6 275.5,199.7 276.0,199.7 276.5,199.8 277.0,199.9 277.5,199.9 278.0,200.0 278.5,200.8 279.0,201.7 279.5,202.7 280.0,203.6 280.5,204.7 281.0,206.8 281.5,208.9 282.0,211.0 282.5,213.1 283.0,215.2 283.5,217.4 284.0,219.5 284.5,222.2 285.0,225.6 285.5,229.0 286.0,232.4 286.5,235.8 287.0,246.5 287.5,259.5 288.0,272.6 288.5,285.6 289.0,294.2 289.5,301.9 290.0,299.0 290.5,297.0 291.0,294.8 291.5,296.1 292.0,297.5 292.5,298.7 293.0,300.8 293.5,304.5 294.0,309.3 294.5,313.6 295.0,315.9 295.5,316.1 296.0,314.9 296.5,313.6 297.0,313.2 297.5,314.4 298.0,317.3 298.5,325.6 299.0,336.7 299.5,346.4 300.0,354.4 300.5,361.1 301.0,360.3 301.5,357.6 302.0,358.2 302.5,362.3 303.0,367.9 303.5,372.6 304.0,374.2 304.5,372.0 305.0,367.3 305.5,362.5 306.0,360.1 306.5,361.3 307.0,365.8 307.5,371.6 308.0,376.2 308.5,377.5 309.0,374.9 309.5,369.8 310.0,365.0 310.5,363.1 311.0,365.2 311.5,370.5 312.0,376.5 312.5,380.3 313.0,380.2 313.5,376.5 314.0,370.9 314.5,366.4 315.0,365.4 315.5,368.7 316.0,375.1 316.5,381.7 317.0,385.4 317.5,384.5 318.0,379.6 318.5,373.2 319.0,368.5 319.5,367.8 320.0,371.2 320.5,377.2 321.0,382.8 321.5,385.5 322.0,384.2 322.5,379.6 323.0,373.9 323.5,369.7 324.0,369.0 324.5,372.2 325.0,378.1 325.5,384.1 326.0,387.8 326.5,387.3 327.0,383.1 327.5,377.2 328.0,372.8 328.5,372.2 329.0,375.8 329.5,382.0 330.0,388.2 330.5,391.6 331.0,390.8 331.5,386.3 332.0,380.4 332.5,376.0 333.0,375.6 333.5,379.7 334.0,386.6 334.5,393.2 335.0,396.4 335.5,394.5 336.0,388.4 336.5,381.1 337.0,376.2 337.5,376.4 338.0,381.7 338.5,389.6 339.0,396.1 339.5,398.0 340.0,394.5 340.5,387.4 341.0,380.4 341.5,376.9 342.0,378.7 342.5,384.8 343.0,392.4 343.5,398.3 344.0,399.4 344.5,395.2 345.0,388.2 345.5,381.6 346.0,378.6 346.5,380.9 347.0,387.5 347.5,395.8 348.0,402.0 348.5,403.5 349.0,399.6 349.5,392.1 350.0,384.8 350.5,381.0 351.0,382.7 351.5,389.3 352.0,397.6 352.5,404.2 353.0,405.7 353.5,401.4 354.0,393.5 354.5,385.7 355.0,382.1 355.5,385.1 356.0,393.6 356.5,403.7 357.0,410.3 357.5,410.0 358.0,403.1 358.5,393.2 359.0,385.1 359.5,382.8 360.0,387.4 360.5,396.5 361.0,406.1 361.5,411.6 362.0,410.5 362.5,403.3 363.0,393.3 363.5,385.5 364.0,383.8 364.5,389.4 365.0,399.9 365.5,410.5 366.0,416.3 366.5,414.6 367.0,406.3 367.5,395.3 368.0,387.0 368.5,385.7 369.0,392.4 369.5,404.3 370.0,415.8 370.5,421.5 371.0,418.4 371.5,408.2 372.0,395.8 372.5,387.4 373.0,387.1 373.5,394.9 374.0,407.0 374.5,417.4 375.0,421.2 375.5,416.9 376.0,406.5 376.5,394.9 377.0,387.5 377.5,387.6 378.0,395.2 378.5,407.1 379.0,417.9 379.5,422.7 380.0,419.0 380.5,408.6 381.0,396.4 381.5,388.5 382.0,388.7 382.5,397.0 383.0,409.6 383.5,420.5 384.0,424.7 384.5,420.2 385.0,409.2 385.5,396.9 386.0,389.3 386.5,390.1 387.0,399.2 387.5,412.6 388.0,424.6 388.5,428.9 389.0,422.3 389.5,409.7 390.0,396.9 390.5,389.7 391.0,391.2 391.5,400.6 392.0,413.6 392.5,424.7 393.0,427.8 393.5,420.2 394.0,407.4 394.5,395.3 395.0,389.1 395.5,392.2 396.0,403.6 396.5,418.5 397.0,431.7 397.5,435.2 398.0,426.0 398.5,412.0 399.0,399.0 399.5,392.7 400.0,396.8 400.5,409.8 401.0,425.8 401.5,437.7 402.0,438.7 402.5,428.0 403.0,411.9 403.5,397.8 404.0,392.3 404.5,397.9 405.0,411.8 405.5,427.0 406.0,436.0 406.5,434.3 407.0,422.9 407.5,407.5 408.0,395.6 408.5,392.8 409.0,400.3 409.5,414.1 410.0,427.7 410.5,434.9 411.0,432.3 411.5,421.2 412.0,406.7 412.5,395.8 413.0,394.1 413.5,402.7 414.0,417.4 414.5,431.1 415.0,436.7 415.5,431.7 416.0,418.8 416.5,404.3 417.0,395.2 417.5,395.7 418.0,406.1 418.5,421.8 419.0,435.5 419.5,440.6 420.0,434.3 420.5,419.6 421.0,403.9 421.5,395.0 422.0,397.6 422.5,410.4 423.0,427.0 423.5,439.7 424.0,442.4 424.5,433.8 425.0,418.1 425.5,402.7 426.0,394.9 426.5,398.0 427.0,410.1 427.5,425.3 428.0,436.4 428.5,438.2 429.0,430.2 429.5,415.9 430.0,401.8 430.5,394.3 431.0,397.0 431.5,409.0 432.0,425.6 432.5,440.9 433.0,446.0 433.5,436.4 434.0,420.2 434.5,404.6 435.0,396.0 435.5,398.4 436.0,410.8 436.5,427.7 437.0,441.6 437.5,445.8 438.0,437.9 438.5,421.4 439.0,404.2 439.5,395.0 440.0,398.2 440.5,411.8 441.0,428.4 441.5,439.7 442.0,440.3 442.5,430.3 443.0,414.4 443.5,399.9 444.0,393.5 444.5,398.5 445.0,412.6 445.5,429.4 446.0,440.9 446.5,441.5 447.0,430.9 447.5,414.1 448.0,398.9 448.5,392.7 449.0,398.8 449.5,414.7 450.0,433.1 450.5,445.3 451.0,445.1 451.5,432.6 452.0,413.8 452.5,397.9 453.0,392.8 453.5,401.3 454.0,419.4 454.5,438.8 455.0,450.2 455.5,448.1 456.0,433.6 456.5,414.0 457.0,398.7 457.5,394.9 458.0,403.9 458.5,420.5 459.0,436.6 459.5,444.5 460.0,440.6 460.5,426.7 461.0,409.4 461.5,396.5 462.0,394.2 462.5,403.9 463.0,421.7 463.5,439.4 464.0,448.6 464.5,444.3 465.0,428.5 465.5,409.2 466.0,396.4 466.5,396.4 467.0,408.9 467.5,427.0 468.0,441.8 468.5,446.5 469.0,439.2 469.5,423.9 470.0,407.6 470.5,397.7 471.0,398.4 471.5,409.1 472.0,425.1 472.5,440.7 473.0,448.7 473.5,441.9 474.0,427.0 474.5,411.0 475.0,399.9 475.5,398.9 476.0,409.1 476.5,426.3 477.0,443.2 477.5,451.9 478.0,446.9 478.5,431.4 479.0,413.2 479.5,400.3 480.0,398.9 480.5,409.8 481.0,427.8 481.5,444.0 482.0,450.5 482.5,443.9 483.0,427.2 483.5,408.7 484.0,397.7 484.5,399.8 485.0,414.3 485.5,434.0 486.0,448.6 486.5,450.3 487.0,438.2 487.5,418.4 488.0,401.1 488.5,395.0 489.0,402.4 489.5,418.7 490.0,435.2 490.5,443.6 491.0,440.1 491.5,427.1 492.0,411.0 492.5,399.5 493.0,397.9 493.5,406.9 494.0,422.1 494.5,436.7 495.0,443.6 495.5,438.6 496.0,424.7 496.5,408.4 497.0,397.0 497.5,395.7 498.0,405.5 498.5,422.0 499.0,438.0 499.5,446.1 500.0,442.4 500.5,428.7 501.0,411.4 501.5,398.6 502.0,396.1 502.5,405.2 503.0,421.8 503.5,441.9 504.0,458.1 504.5,450.8 505.0,431.0 505.5,412.7 506.0,399.9 506.5,398.6 507.0,409.8 507.5,428.2 508.0,444.8 508.5,451.6 509.0,445.4 509.5,429.7 510.0,411.9 510.5,400.2 511.0,399.6 511.5,409.9 512.0,426.3 512.5,441.4 513.0,448.3 513.5,443.5 514.0,429.0 514.5,411.3 515.0,398.9 515.5,398.0 516.0,409.6 516.5,428.1 517.0,444.8 517.5,451.3 518.0,444.4 518.5,427.5 519.0,408.9 519.5,397.5 520.0,398.3 520.5,410.5 521.0,428.0 521.5,442.1 522.0,446.2 522.5,438.2 523.0,421.8 523.5,405.0 524.0,395.7 524.5,398.9 525.0,412.9 525.5,431.2 526.0,445.3 526.5,447.4 527.0,436.4 527.5,419.0 528.0,403.3 528.5,396.4 529.0,401.4 529.5,415.9 530.0,433.6 530.5,446.3 531.0,448.1 531.5,438.1 532.0,420.9 532.5,405.1 533.0,398.7 533.5,404.9 534.0,420.6 534.5,440.0 535.0,457.3 535.5,454.7 536.0,435.7 536.5,416.4 537.0,401.8 537.5,398.0 538.0,407.5 538.5,425.9 539.0,444.4 539.5,454.1 540.0,450.1 540.5,434.7 541.0,415.3 541.5,401.4 542.0,399.4 542.5,409.5 543.0,426.7 543.5,442.6 544.0,450.0 544.5,445.7 545.0,431.9 545.5,414.9 546.0,402.7 546.5,400.9 547.0,410.2 547.5,426.3 548.0,441.7 548.5,449.3 549.0,445.9 549.5,432.9 550.0,416.4 550.5,404.0 551.0,401.8 551.5,411.3 552.0,428.5 552.5,445.2 553.0,453.4 553.5,449.0 554.0,433.7 554.5,414.8 555.0,401.2 555.5,399.4 556.0,410.4 556.5,428.8 557.0,445.5 557.5,452.2 558.0,445.8 558.5,429.4 559.0,410.9 559.5,398.9 560.0,398.9 560.5,410.7 561.0,428.9 561.5,444.9 562.0,451.1 562.5,444.5 563.0,428.1 563.5,409.9 564.0,398.5 564.5,398.6 565.0,409.7 565.5,426.2 566.0,441.2 566.5,447.5 567.0,439.8 567.5,424.2 568.0,408.0 568.5,397.8 569.0,397.9 569.5,408.1 570.0,423.4 570.5,436.8 571.0,442.1 571.5,436.9 572.0,424.0 572.5,409.6 573.0,400.7 573.5,402.1 574.0,413.8 574.5,431.4 575.0,451.0 575.5,459.7 576.0,445.8 576.5,426.4 577.0,409.5 577.5,400.1 578.0,402.7 578.5,416.0 579.0,433.4 579.5,446.5 580.0,448.7 580.5,438.5 581.0,422.0 581.5,406.7 582.0,399.5 582.5,403.5 583.0,416.8 583.5,433.2 584.0,444.9 584.5,446.4 585.0,437.0 585.5,421.3 586.0,406.8 586.5,400.3 587.0,404.8 587.5,418.2 588.0,434.6 588.5,448.0 589.0,449.5 589.5,437.7 590.0,421.2 590.5,406.5 591.0,400.1 591.5,405.0 592.0,419.1 592.5,435.9 593.0,447.9 593.5,448.1 594.0,436.2 594.5,419.2 595.0,404.7 595.5,399.2 596.0,405.6 596.5,420.9 597.0,438.0 597.5,448.7 598.0,447.7 598.5,435.4 599.0,417.9 599.5,403.9 600.0,400.7 600.5,410.2 601.0,428.0 601.5,445.4 602.0,453.5 602.5,448.2 603.0,432.1 603.5,413.1 604.0,400.8 604.5,401.2 605.0,413.9 605.5,432.3 606.0,447.2 606.5,451.1 607.0,442.1 607.5,424.8 608.0,407.6 608.5,398.7 609.0,401.9 609.5,415.7 610.0,433.5 610.5,447.2 611.0,450.3 611.5,441.4 612.0,425.0 612.5,409.1 613.0,401.7 613.5,406.6 614.0,421.5 614.5,439.0 615.0,450.7 615.5,450.7 616.0,439.1 616.5,421.3 617.0,405.7 617.5,399.6 618.0,406.0 618.5,422.0 619.0,439.8 619.5,450.7 620.0,449.4 620.5,436.2 621.0,417.6 621.5,402.3 622.0,397.6 622.5,405.7 623.0,422.9 623.5,441.1 624.0,451.8 624.5,449.9 625.0,436.1 625.5,417.4 626.0,402.7 626.5,399.4 627.0,409.2 627.4,423.4 627.5,427.4 628.0,445.2 628.5,454.2 629.0,450.3 629.5,435.4 630.0,416.9 630.5,403.3 631.0,400.8 631.5,410.1 632.0,426.2 632.5,441.4 633.0,448.5 633.5,444.3 634.0,431.0 634.5,414.6 635.0,402.6 635.5,400.2 636.0,408.1 636.5,422.7 637.0,441.1 637.5,456.7 638.0,448.1 638.5,428.8 639.0,412.9 639.5,402.2 640.0,401.2 640.5,410.6 641.0,426.3 641.5,441.0 642.0,447.9 642.5,443.6 643.0,430.1 643.5,413.8 644.0,402.6 644.5,402.2 645.0,413.0 645.5,430.3 646.0,445.8 646.5,452.3 647.0,446.2 647.5,430.4 648.0,412.3 648.5,400.9 649.0,401.9 649.5,414.8 650.0,434.0 650.5,454.2 651.0,463.0 651.5,448.8 652.0,428.3 652.5,410.4 653.0,400.4 653.5,402.5 654.0,415.0 654.5,432.7 655.0,452.1 655.5,459.5 656.0,443.7 656.5,424.2 657.0,408.1 657.5,399.1 658.0,400.9 658.5,413.1 659.0,430.4 659.5,444.9 660.0,449.9 660.5,442.8 661.0,427.1 661.5,410.3 662.0,400.8 662.5,403.3 663.0,416.5 663.5,434.8 664.0,453.1 664.5,458.7 665.0,444.2 665.5,425.3 666.0,409.2 666.5,401.1 667.0,405.0 667.5,419.1 668.0,436.9 668.5,449.9 669.0,451.4 669.5,440.4 670.0,422.2 670.5,405.7 671.0,399.0 671.5,405.1 672.0,420.8 672.5,437.9 673.0,448.3 673.5,446.8 674.0,434.3 674.5,416.7 675.0,402.1 675.5,397.0 676.0,403.7 676.5,419.2 676.6,422.9 677.0,436.7 677.5,447.7 678.0,447.0 678.5,434.8 679.0,417.0 679.5,402.2 680.0,398.1 680.5,407.2 680.7,414.1 681.0,426.0 681.5,445.1 682.0,455.3 682.5,451.8 683.0,436.5 683.5,416.9 684.0,402.4 684.5,399.4 685.0,408.8 685.5,425.7 686.0,442.1 686.5,450.4 687.0,447.2 687.5,434.0 688.0,417.1 688.5,404.4 689.0,401.5 689.5,409.5 690.0,424.2 690.5,438.9 691.0,446.6 691.5,441.8 691.6,439.4 692.0,427.9 692.5,412.3 693.0,401.6 693.5,401.9 694.0,413.6 694.5,431.7 695.0,447.3 695.5,452.4 696.0,444.5 696.5,427.7 697.0,410.6 697.5,401.6 698.0,404.6 698.5,417.8 699.0,435.5 699.5,453.1 700.0,457.6 700.5,443.2 701.0,425.1 701.5,409.6 702.0,401.9 702.5,405.7 703.0,419.2 703.5,436.5 704.0,449.7 704.5,452.5 705.0,443.4 705.3,433.9 705.5,426.8 706.0,409.7 706.5,401.1 707.0,405.3 707.5,420.0 708.0,439.4 708.5,459.8 709.0,465.4 709.5,448.5 710.0,428.3 710.5,411.3 711.0,402.5 711.5,405.9 712.0,419.8 712.5,437.5 713.0,450.3 713.5,452.2 714.0,442.3 714.5,425.4 715.0,409.5"/>
<polyline fill="none" stroke="#1b9e77" stroke-width="2" stroke-linejoin="round" points="81.0,418.4 81.5,428.2 82.0,428.9 82.5,420.4 83.0,407.0 83.5,395.2 84.0,390.5 84.5,394.6 85.0,405.5 85.5,418.3 86.0,427.6 86.5,428.0 87.0,419.2 87.5,406.2 88.0,394.5 88.5,389.5 89.0,393.3 89.5,404.2 90.0,417.0 90.5,425.6 91.0,425.9 91.5,417.3 92.0,403.5 92.5,390.8 93.0,385.2 93.5,389.6 94.0,402.2 94.5,417.8 95.0,430.8 95.2,433.1 95.5,431.0 96.0,418.3 96.5,403.3 97.0,391.6 97.5,388.1 98.0,394.5 98.5,408.1 99.0,426.4 99.5,445.9 100.0,439.9 100.5,419.3 101.0,403.1 101.5,391.8 102.0,389.5 102.5,397.8 103.0,413.6 103.5,435.6 104.0,454.4 104.5,440.3 105.0,417.3 105.5,400.7 106.0,390.7 106.5,390.8 107.0,400.6 107.5,414.8 108.0,426.3 108.5,429.6 109.0,423.3 109.5,410.4 109.8,401.8 110.0,396.6 110.5,388.0 111.0,388.2 111.5,397.0 112.0,410.4 112.5,422.2 113.0,426.7 113.5,421.8 114.0,409.8 114.5,396.5 115.0,388.1 115.5,388.4 116.0,396.7 116.5,408.9 117.0,418.9 117.5,422.0 118.0,416.5 118.5,405.0 119.0,392.7 119.5,385.7 120.0,387.2 120.5,396.3 121.0,409.9 121.5,429.3 122.0,437.6 122.3,428.2 122.5,419.9 123.0,403.5 123.5,392.3 124.0,386.4 124.5,388.3 125.0,397.6 125.5,410.1 126.0,420.1 126.5,422.5 127.0,416.0 127.5,403.5 128.0,391.1 128.5,384.7 129.0,387.1 129.5,396.7 130.0,408.6 130.5,418.1 131.0,418.9 131.5,410.0 132.0,398.0 132.5,387.7 133.0,383.1 133.5,386.2 134.0,395.4 134.5,406.1 135.0,413.0 135.5,412.8 136.0,405.7 136.5,395.1 137.0,386.4 137.5,383.7 138.0,388.4 138.5,397.8 139.0,408.7 139.5,417.2 140.0,413.8 140.5,403.1 141.0,392.9 141.5,385.5 142.0,383.9 142.5,388.7 143.0,397.3 143.5,405.4 144.0,409.0 144.5,406.6 145.0,399.1 145.5,390.0 145.8,385.4 146.0,383.1 146.5,381.5 147.0,385.8 147.5,394.1 148.0,402.3 148.5,406.4 149.0,404.2 149.5,396.6 150.0,387.2 150.5,380.5 151.0,379.5 151.5,384.3 152.0,392.0 152.5,398.6 153.0,401.0 153.5,398.3 154.0,391.8 154.5,384.7 155.0,380.0 155.5,379.7 156.0,383.7 156.5,390.1 157.0,395.7 157.5,397.7 158.0,394.9 158.5,388.6 159.0,381.8 159.5,377.6 160.0,377.9 160.5,382.4 161.0,388.7 161.5,393.8 162.0,395.2 162.5,392.0 163.0,386.0 163.5,380.0 163.6,379.3 164.0,377.1 164.5,378.5 165.0,384.0 165.5,391.1 166.0,396.5 166.5,397.5 167.0,393.7 167.5,386.7 168.0,379.7 168.5,375.6 169.0,376.0 169.5,380.4 170.0,386.4 170.5,391.2 171.0,392.3 171.5,389.1 172.0,383.0 172.5,376.7 173.0,373.0 173.5,373.3 174.0,377.5 174.5,383.3 175.0,387.7 175.5,388.5 176.0,385.1 176.5,379.2 177.0,373.6 177.5,371.0 178.0,372.4 178.5,377.0 179.0,382.3 179.5,385.4 180.0,384.9 180.5,380.7 181.0,374.9 181.5,370.2 182.0,368.9 182.5,371.5 183.0,376.9 183.5,382.2 184.0,384.7 184.5,383.1 185.0,378.0 185.5,371.9 186.0,367.6 186.5,367.1 187.0,370.1 187.5,375.1 188.0,379.4 188.5,380.9 189.0,378.9 189.5,374.3 190.0,369.0 190.5,365.3 191.0,364.8 191.5,367.3 192.0,371.6 192.5,375.4 193.0,376.9 193.5,375.3 194.0,371.1 194.5,366.2 195.0,362.6 195.5,362.1 196.0,364.8 196.5,369.4 197.0,373.6 197.5,375.2 198.0,373.3 198.5,368.8 199.0,363.6 199.5,360.1 200.0,359.7 200.5,362.5 201.0,367.0 201.5,370.7 202.0,371.8 202.5,369.5 203.0,364.9 203.5,359.8 204.0,356.8 204.5,350.2 205.0,342.8 205.5,336.2 206.0,329.2 206.5,323.2 207.0,320.9 207.5,317.5 208.0,313.9 208.5,311.3 209.0,310.4 209.5,311.0 210.0,311.9 210.5,311.9 211.0,309.8 211.5,305.9 212.0,301.4 212.5,297.3 213.0,294.4 213.5,294.0 214.0,297.2 214.5,300.0 215.0,301.1 215.5,292.5 216.0,282.5 216.5,269.3 217.0,256.0 217.5,242.7 218.0,235.0 218.5,231.6 219.0,228.1 219.5,224.7 220.0,221.2 220.5,219.0 221.0,216.8 221.5,214.6 222.0,212.5 222.5,210.3 223.0,208.2 223.5,206.0 224.0,204.4 224.5,203.5 225.0,202.5 225.5,201.5 226.0,200.6 226.5,200.3 227.0,200.3 227.5,200.2 228.0,200.2 228.5,200.1 229.0,200.0 229.5,200.0 230.0,199.9 230.5,199.9 231.0,200.0 231.5,200.0 232.0,200.1 232.5,200.2 233.0,200.2 233.5,200.3 234.0,200.3 234.5,200.4 235.0,201.4 235.5,202.3 236.0,203.3 236.5,204.2 237.0,205.6 237.5,207.7 238.0,209.9 238.5,212.1 239.0,214.2 239.5,216.4 240.0,218.5 240.5,220.7 241.0,224.0 241.5,227.4 242.0,230.9 242.5,234.3 243.0,240.1 243.5,253.3 244.0,266.6 244.5,279.9 245.0,290.8 245.5,299.4 246.0,300.6 246.5,298.2 247.0,295.9 247.5,295.3 248.0,296.7 248.5,298.3 249.0,300.8 249.5,304.9 250.0,310.0 250.5,314.0 251.0,315.9 251.5,315.5 252.0,314.1 252.5,313.0 253.0,313.2 253.5,315.2 254.0,318.6 254.5,326.1 255.0,336.9 255.5,346.1 256.0,353.7 256.5,360.4 257.0,358.9 257.5,357.3 258.0,358.9 258.5,362.9 259.0,367.9 259.5,371.7 260.0,372.8 260.5,370.8 261.0,366.7 261.5,362.5 262.0,360.4 262.5,361.6 263.0,366.0 263.5,371.6 264.0,376.1 264.5,377.4 265.0,375.0 265.5,370.1 266.0,365.2 266.5,363.0 267.0,364.6 267.5,369.7 268.0,376.0 268.5,380.8 269.0,381.7 269.5,378.5 270.0,372.9 270.5,367.7 271.0,365.7 271.5,367.7 272.0,373.1 272.5,379.3 273.0,383.6 273.5,384.2 274.0,380.8 274.5,375.2 275.0,370.2 275.5,368.4 276.0,370.9 276.5,376.6 277.0,382.8 277.5,386.6 278.0,386.5 278.5,382.5 279.0,376.7 279.5,371.9 280.0,370.5 280.5,373.4 281.0,379.4 281.5,385.9 282.0,389.8 282.5,389.2 283.0,384.5 283.5,378.0 284.0,373.1 284.5,372.5 285.0,376.6 285.5,383.5 286.0,389.9 286.5,392.5 287.0,390.3 287.5,384.4 288.0,377.9 288.5,374.2 289.0,374.9 289.5,379.7 290.0,386.3 290.5,391.8 291.0,393.5 291.5,390.8 292.0,385.0 292.5,379.0 293.0,375.7 293.5,376.8 294.0,382.0 294.5,388.9 295.0,394.5 295.5,396.2 296.0,393.3 296.5,387.1 297.0,380.6 297.5,376.9 298.0,377.8 298.5,383.0 299.0,390.3 299.5,396.8 300.0,399.4 300.5,396.3 301.0,389.7 301.5,382.8 302.0,378.7 302.5,379.6 303.0,385.6 303.5,394.1 304.0,401.4 304.5,404.0 305.0,400.7 305.5,393.3 306.0,385.3 306.5,380.9 307.0,382.6 307.5,389.7 308.0,399.0 308.5,406.1 309.0,407.4 309.5,402.4 310.0,393.4 310.5,385.1 311.0,381.6 311.5,384.4 312.0,392.3 312.5,401.6 313.0,408.5 313.5,409.0 314.0,402.7 314.5,393.7 315.0,386.0 315.5,383.4 316.0,387.4 316.5,396.3 317.0,406.0 317.5,412.6 318.0,411.6 318.5,404.2 319.0,394.6 319.5,387.0 320.0,384.9 320.5,389.5 321.0,398.6 321.5,408.1 322.0,413.5 322.5,412.3 323.0,405.0 323.5,395.1 324.0,387.2 324.5,385.2 325.0,390.3 325.5,400.4 326.0,410.7 326.5,416.3 327.0,414.4 327.5,405.8 328.0,394.6 328.5,386.3 329.0,384.9 329.5,391.0 330.0,401.8 330.5,412.0 331.0,416.8 331.5,414.0 332.0,405.1 332.5,394.6 333.0,387.7 333.5,387.7 334.0,394.8 334.5,405.8 335.0,415.8 335.5,420.1 336.0,416.9 336.5,407.7 337.0,397.1 337.5,390.2 338.0,390.8 338.5,398.9 339.0,411.3 339.5,422.3 340.0,426.6 340.5,422.1 341.0,410.6 341.5,398.0 342.0,390.4 342.5,391.6 343.0,401.0 343.5,414.0 344.0,424.6 344.5,427.6 345.0,421.6 345.5,409.3 346.0,396.4 346.5,389.4 347.0,392.1 347.5,403.6 348.0,418.6 348.5,429.4 349.0,430.8 349.5,422.3 350.0,408.3 350.5,395.7 351.0,390.3 351.5,394.4 352.0,405.7 352.5,418.2 353.0,425.9 353.5,424.9 354.0,415.9 354.5,403.1 355.0,392.5 355.5,389.0 356.0,394.3 356.5,406.2 357.0,419.5 357.5,428.2 358.0,428.0 358.5,418.9 359.0,405.0 359.5,393.2 360.0,389.4 360.5,395.7 361.0,409.3 361.5,424.0 362.0,432.9 362.5,432.0 363.0,421.7 363.5,407.0 364.0,395.1 364.5,391.8 365.0,399.0 365.5,413.5 366.0,429.7 366.5,441.5 367.0,438.3 367.5,424.2 368.0,408.8 368.5,397.3 369.0,394.8 369.5,402.7 370.0,417.3 370.5,431.9 371.0,440.0 371.5,436.6 372.0,424.2 372.5,409.1 373.0,397.9 373.5,395.7 374.0,403.5 374.5,417.7 375.0,432.4 375.5,441.0 376.0,438.3 376.5,426.0 377.0,410.3 377.5,398.4 378.0,396.4 378.5,405.4 379.0,420.8 379.5,434.8 380.0,440.5 380.5,435.3 381.0,421.9 381.5,406.6 382.0,396.2 382.5,395.3 383.0,404.2 383.5,418.6 384.0,432.6 384.5,439.2 385.0,433.3 385.5,419.5 386.0,404.7 386.5,395.6 387.0,397.0 387.5,408.5 388.0,424.2 388.5,436.0 389.0,437.8 389.5,428.6 390.0,413.1 390.5,398.9 391.0,392.8 391.5,397.4 392.0,410.5 392.5,427.5 393.0,445.3 393.5,444.7 394.0,426.7 394.5,410.1 395.0,397.5 395.5,392.9 396.0,398.4 396.5,411.4 397.0,426.0 397.5,435.6 398.0,436.0 398.5,426.8 399.0,412.2 399.5,399.2 400.0,394.5 400.5,401.0 401.0,416.5 401.5,434.0 402.0,445.6 402.5,445.7 403.0,434.5 403.5,417.2 404.0,401.7 404.5,395.0 405.0,400.0 405.5,413.9 406.0,430.7 406.5,443.8 407.0,444.5 407.5,432.0 408.0,415.5 408.5,401.8 409.0,396.8 409.5,403.1 410.0,417.8 410.5,435.1 411.0,449.2 411.5,446.4 412.0,430.7 412.5,414.1 413.0,401.8 413.5,399.1 414.0,407.3 414.5,422.3 415.0,438.3 415.5,447.9 416.0,441.1 416.5,425.2 417.0,409.1 417.5,398.6 418.0,398.3 418.5,408.1 419.0,423.0 419.5,435.7 420.0,440.2 420.5,434.8 421.0,421.9 421.5,407.5 422.0,398.0 422.5,397.6 423.0,406.2 423.5,420.2 424.0,433.4 424.5,439.7 425.0,436.0 425.5,423.8 426.0,408.6 426.5,398.1 427.0,397.7 427.5,408.0 428.0,424.7 428.5,444.4 429.0,456.7 429.5,444.4 430.0,425.0 430.5,408.6 431.0,398.7 431.5,399.9 432.0,411.5 432.5,427.8 433.0,440.7 433.5,443.5 434.0,434.8 434.5,418.9 435.0,403.4 435.5,395.8 436.0,399.4 436.5,412.1 437.0,427.8 437.5,438.7 438.0,440.0 438.5,430.9 439.0,416.0 439.5,402.3 440.0,396.8 440.5,402.5 441.0,417.2 441.5,434.0 442.0,444.9 442.5,444.8 443.0,433.6 443.5,416.9 444.0,402.6 444.5,397.4 445.0,403.2 445.5,417.2 446.0,432.7 446.5,442.9 447.0,443.2 447.5,433.4 448.0,418.3 448.5,404.5 449.0,398.5 449.5,403.0 450.0,415.9 450.5,431.1 451.0,441.5 451.5,442.2 452.0,432.6 452.5,417.1 453.0,403.0 453.5,397.2 454.0,402.9 454.5,417.7 455.0,434.6 455.5,445.4 456.0,444.3 456.5,431.8 457.0,414.2 457.5,400.9 458.0,398.9 458.5,409.1 459.0,426.2 459.5,441.5 460.0,447.4 460.5,441.3 461.0,426.3 461.5,409.7 462.0,399.7 462.5,401.5 463.0,414.3 463.5,432.0 464.0,447.1 464.5,450.8 465.0,439.3 465.5,422.0 466.0,406.3 466.5,398.5 467.0,401.5 467.5,413.5 468.0,429.3 468.5,444.6 469.0,447.6 469.5,434.1 470.0,417.9 470.5,404.3 471.0,398.0 471.5,402.0 472.0,414.1 472.5,428.6 473.0,438.6 473.5,439.4 474.0,430.6 474.5,416.1 475.0,402.6 475.5,396.4 476.0,400.8 476.5,414.2 477.0,430.9 477.5,443.2 478.0,445.6 478.5,436.7 479.0,420.8 479.5,405.3 480.0,397.4 480.5,401.0 481.0,414.5 481.5,431.5 482.0,444.0 482.5,446.0 483.0,436.7 483.5,420.2 484.0,404.5 484.5,396.7 485.0,400.4 485.5,413.8 486.0,430.8 486.5,443.3 487.0,445.6 487.5,436.7 488.0,420.6 488.5,405.0 489.0,397.4 489.5,401.2 490.0,414.4 490.5,431.2 491.0,446.4 491.5,448.7 492.0,434.7 492.5,418.1 493.0,404.3 493.5,398.3 494.0,403.1 494.5,416.7 495.0,432.5 495.5,442.4 496.0,441.4 496.5,429.9 497.0,414.0 497.5,401.8 498.0,399.6 498.5,408.7 499.0,424.5 499.5,439.3 500.0,445.9 500.5,441.0 501.0,427.2 501.5,411.2 502.0,400.6 502.5,400.6 503.0,410.9 503.5,426.6 504.0,440.2 504.5,445.2 505.0,439.2 505.5,424.9 506.0,408.7 506.5,397.7 507.0,396.6 507.5,405.8 508.0,421.2 508.5,436.0 509.0,443.4 509.5,439.7 510.0,426.4 510.5,409.8 511.0,398.1 511.5,397.2 512.0,407.7 512.5,424.5 513.0,439.5 513.5,445.7 514.0,440.6 514.5,427.0 515.0,411.4 515.5,401.1 516.0,400.8 516.5,410.6 517.0,426.2 517.5,440.1 518.0,445.5 518.5,439.7 519.0,425.1 519.5,408.8 520.0,398.6 520.5,399.3 521.0,410.2 521.5,425.9 522.0,438.4 522.5,442.0 523.0,434.8 523.5,420.4 524.0,405.8 524.5,397.9 525.0,400.5 525.5,412.1 526.0,427.3 526.5,440.9 527.0,443.3 527.5,432.0 528.0,416.7 528.5,403.2 529.0,397.7 529.5,403.2 530.0,417.3 530.5,433.6 531.0,445.3 531.5,443.7 532.0,430.6 532.5,414.7 533.0,402.4 533.5,399.3 534.0,406.8 534.5,421.5 535.0,436.1 535.5,443.5 536.0,440.1 536.5,427.7 537.0,412.3 537.5,401.3 538.0,399.7 538.5,407.9 539.0,421.9 539.5,435.4 540.0,442.2 540.5,439.2 541.0,428.3 541.5,414.6 542.0,404.6 542.5,403.0 543.0,410.6 543.5,424.2 544.0,437.9 544.5,445.3 545.0,442.8 545.5,431.1 546.0,415.5 546.5,403.3 547.0,400.3 547.5,407.8 548.0,421.7 548.5,435.0 549.0,441.2 549.5,437.4 550.0,425.5 550.5,410.9 551.0,400.2 551.5,398.2 552.0,405.9 552.5,420.3 553.0,434.9 553.5,443.1 554.0,440.9 554.5,428.9 555.0,412.9 555.5,400.9 556.0,399.1 556.5,408.6 557.0,425.0 557.5,441.5 558.0,450.5 558.5,443.3 559.0,426.9 559.5,410.4 560.0,399.4 560.5,398.8 561.0,408.7 561.5,424.4 562.0,438.0 562.5,442.8 563.0,436.4 563.5,422.0 564.0,406.8 564.5,398.3 565.0,400.6 565.5,412.9 566.0,429.3 566.5,441.9 567.0,444.2 567.5,434.9 568.0,418.6 568.5,403.4 569.0,397.0 569.5,402.2 570.0,415.8 570.5,431.2 571.0,442.2 571.5,442.2 572.0,431.5 572.5,416.8 573.0,404.1 573.5,399.5 574.0,405.8 574.5,420.7 575.0,437.6 575.5,448.4 576.0,447.7 576.5,436.0 577.0,418.8 577.5,404.5 578.0,399.8 578.5,406.3 579.0,420.4 579.5,434.7 580.0,442.2 580.5,439.4 581.0,427.7 581.5,412.8 582.0,401.2 582.5,397.8 583.0,403.6 583.5,415.9 584.0,432.4 584.5,448.4 585.0,442.1 585.5,424.2 586.0,409.0 586.5,398.3 587.0,397.2 587.5,407.0 588.0,423.3 588.5,438.5 589.0,445.5 589.5,441.3 590.0,428.3 590.5,413.0 591.0,402.8 591.5,402.8 592.0,413.4 592.5,429.8 593.0,444.8 593.5,451.3 594.0,446.6 594.5,432.7 595.0,415.9 595.5,403.8 596.0,401.6 596.5,410.1 597.0,425.6 597.5,440.8 598.0,448.3 598.5,444.4 599.0,430.5 599.5,413.5 600.0,401.7 600.5,400.7 601.0,411.0 601.5,427.9 602.0,448.2 602.5,462.1 603.0,450.5 603.5,430.5 604.0,413.6 604.5,402.9 605.0,402.7 605.5,413.3 606.0,429.5 606.5,443.7 607.0,449.1 607.5,443.2 608.0,428.6 608.5,412.2 609.0,401.8 609.5,402.2 610.0,413.6 610.5,431.1 611.0,450.6 611.5,461.2 612.0,449.3 612.5,429.8 613.0,412.2 613.5,401.7 614.0,403.1 614.5,415.4 615.0,432.1 615.5,444.6 616.0,446.8 616.5,437.7 617.0,421.7 617.5,406.6 618.0,399.2 618.5,402.6 619.0,414.4 619.5,428.7 620.0,439.7 620.5,442.3 621.0,429.0 621.5,413.7 622.0,401.1 622.5,396.0 623.0,400.8 623.5,413.4 624.0,428.2 624.5,438.4 625.0,439.4 625.5,430.5 626.0,415.9 626.5,402.5 627.0,396.8 627.4,399.9 627.5,401.7 628.0,415.3 628.5,431.7 629.0,443.4 629.5,445.1 630.0,435.7 630.5,419.8 631.0,405.2 631.5,399.4 632.0,405.5 632.5,420.5 633.0,441.3 633.5,466.5 634.0,462.6 634.5,436.1 635.0,417.0 635.5,404.3 636.0,401.0 636.5,408.5 637.0,423.2 637.5,437.9 638.0,445.4 638.5,441.8 639.0,428.9 639.5,412.8 640.0,401.9 640.5,401.7 641.0,412.4 641.5,429.1 642.0,446.6 642.5,455.1 643.0,444.6 643.5,427.2 644.0,411.2 644.5,402.1 645.0,404.1 645.5,416.3 646.0,433.0 646.5,447.9 647.0,452.0 647.5,441.1 648.0,425.1 648.5,410.6 649.0,403.2 649.5,406.2 650.0,418.2 650.5,433.9 651.0,447.1 651.5,450.2 652.0,440.6 652.5,424.7 653.0,409.5 653.5,401.8 654.0,405.5 654.5,418.8 655.0,435.3 655.5,446.9 656.0,447.9 656.5,437.9 657.0,421.7 657.5,407.2 658.0,401.0 658.5,405.3 659.0,417.4 659.5,431.1 660.0,439.8 660.5,439.3 661.0,429.8 661.5,415.8 662.0,404.0 662.5,400.0 663.0,406.2 663.5,419.8 664.0,434.8 664.5,444.3 665.0,443.9 665.5,433.8 666.0,418.8 666.5,406.1 667.0,401.9 667.5,408.0 668.0,421.6 668.5,436.3 669.0,445.4 669.5,444.9 670.0,435.2 670.5,420.4 671.0,406.9 671.5,400.6 672.0,404.5 672.5,417.3 673.0,433.3 673.5,445.3 674.0,447.3 674.5,438.1 675.0,422.1 675.5,407.0 676.0,400.2 676.5,404.5 676.6,406.3 677.0,416.8 677.5,435.3 678.0,461.8 678.5,461.1 679.0,433.7 679.5,415.0 680.0,402.5 680.5,398.1 680.7,399.3 681.0,404.2 681.5,418.4 682.0,436.5 682.5,453.7 683.0,450.1 683.5,431.6 684.0,414.7 684.5,402.3 685.0,399.0 685.5,406.6 686.0,422.0 686.5,438.1 687.0,447.5 687.5,445.5 688.0,433.0 688.5,416.1 689.0,403.2 689.5,400.6 690.0,409.6 690.5,425.7 691.0,441.0 691.5,448.2 691.6,448.1 692.0,443.2 692.5,429.1 693.0,412.7 693.5,402.1 694.0,402.3 694.5,412.8 695.0,428.5 695.5,441.8 696.0,446.5 696.5,440.6 697.0,427.0 697.5,412.4 698.0,403.8 698.5,405.6 699.0,416.8 699.5,432.0 700.0,443.8 700.5,446.7 701.0,439.5 701.5,425.8 702.0,412.0 702.5,404.3 703.0,406.5 703.5,417.8 704.0,433.1 704.5,445.0 705.0,447.5 705.3,443.6 705.5,439.1 706.0,423.7 706.5,408.9 707.0,401.7 707.5,406.0 708.0,419.9 708.5,438.1 709.0,455.5 709.5,457.4 710.0,441.5 710.5,422.8 711.0,407.2 711.5,401.1 712.0,407.7 712.5,423.5 713.0,440.2 713.5,449.5 714.0,447.0 714.5,434.2 715.0,417.3"/></g>
<line x1="82.5" y1="180" x2="82.5" y2="547.5" stroke="#6e6e6e" stroke-width="1.5"/>
<line x1="82" y1="547" x2="713" y2="547" stroke="#6e6e6e" stroke-width="1.5"/>
<text x="79.5" y="190.4" text-anchor="end" font-size="13" fill="#444" font-family="Liberation Sans">0</text>
<text x="79.5" y="239.9" text-anchor="end" font-size="13" fill="#444" font-family="Liberation Sans">−20</text>
<text x="79.5" y="289.3" text-anchor="end" font-size="13" fill="#444" font-family="Liberation Sans">−40</text>
<text x="79.5" y="338.8" text-anchor="end" font-size="13" fill="#444" font-family="Liberation Sans">−60</text>
<text x="79.5" y="388.2" text-anchor="end" font-size="13" fill="#444" font-family="Liberation Sans">−80</text>
<text x="79.5" y="437.7" text-anchor="end" font-size="13" fill="#444" font-family="Liberation Sans">−100</text>
<text x="79.5" y="487.1" text-anchor="end" font-size="13" fill="#444" font-family="Liberation Sans">−120</text>
<text x="79.5" y="536.6" text-anchor="end" font-size="13" fill="#444" font-family="Liberation Sans">−140</text>
<text x="83.0" y="562.5" text-anchor="middle" font-size="13" fill="#444" font-family="Liberation Sans">1.26</text>
<text x="188.0" y="562.5" text-anchor="middle" font-size="13" fill="#444" font-family="Liberation Sans">1.27</text>
<text x="293.0" y="562.5" text-anchor="middle" font-size="13" fill="#444" font-family="Liberation Sans">1.28</text>
<text x="398.0" y="562.5" text-anchor="middle" font-size="13" fill="#444" font-family="Liberation Sans">1.29</text>
<text x="503.0" y="562.5" text-anchor="middle" font-size="13" fill="#444" font-family="Liberation Sans">1.3</text>
<text x="608.0" y="562.5" text-anchor="middle" font-size="13" fill="#444" font-family="Liberation Sans">1.31</text>
<text x="713.0" y="562.5" text-anchor="middle" font-size="13" fill="#444" font-family="Liberation Sans">1.32</text>
<text x="425" y="135.3" text-anchor="middle" font-size="18" fill="#444" textLength="212.5" lengthAdjust="spacingAndGlyphs" font-family="Liberation Sans">Output spectrum of AWG</text>
<text x="398" y="600.8" text-anchor="middle" font-size="15" fill="#444" textLength="121" lengthAdjust="spacingAndGlyphs" font-family="Liberation Sans">Wavelength [µm]</text>
<text transform="translate(42.4,363) rotate(-90)" text-anchor="middle" font-size="15" fill="#444" textLength="109.4" lengthAdjust="spacingAndGlyphs" font-family="Liberation Sans">Magnitude [dB]</text>
<line x1="730" y1="194.0" x2="757" y2="194.0" stroke="#1b9e77" stroke-width="2"/>
<text x="761.7" y="198.6" font-size="12.6" fill="#444" textLength="14.6" lengthAdjust="spacingAndGlyphs" font-family="Liberation Sans">in1</text>
<path d="M781 194.3 H791.5 M788.3 191.1 L791.6 194.3 L788.3 197.5" fill="none" stroke="#444" stroke-width="1.3"/>
<text x="796.7" y="198.6" font-size="12.6" fill="#444" textLength="24" lengthAdjust="spacingAndGlyphs" font-family="Liberation Sans">out1</text>
<line x1="730" y1="213.1" x2="757" y2="213.1" stroke="#d95f02" stroke-width="2"/>
<text x="761.7" y="217.7" font-size="12.6" fill="#444" textLength="14.6" lengthAdjust="spacingAndGlyphs" font-family="Liberation Sans">in1</text>
<path d="M781 213.4 H791.5 M788.3 210.2 L791.6 213.4 L788.3 216.6" fill="none" stroke="#444" stroke-width="1.3"/>
<text x="796.7" y="217.7" font-size="12.6" fill="#444" textLength="24" lengthAdjust="spacingAndGlyphs" font-family="Liberation Sans">out2</text>
<line x1="730" y1="232.1" x2="757" y2="232.1" stroke="#7570b3" stroke-width="2"/>
<text x="761.7" y="236.7" font-size="12.6" fill="#444" textLength="14.6" lengthAdjust="spacingAndGlyphs" font-family="Liberation Sans">in1</text>
<path d="M781 232.4 H791.5 M788.3 229.2 L791.6 232.4 L788.3 235.6" fill="none" stroke="#444" stroke-width="1.3"/>
<text x="796.7" y="236.7" font-size="12.6" fill="#444" textLength="24" lengthAdjust="spacingAndGlyphs" font-family="Liberation Sans">out3</text>
<line x1="730" y1="251.2" x2="757" y2="251.2" stroke="#e7298a" stroke-width="2"/>
<text x="761.7" y="255.8" font-size="12.6" fill="#444" textLength="14.6" lengthAdjust="spacingAndGlyphs" font-family="Liberation Sans">in1</text>
<path d="M781 251.5 H791.5 M788.3 248.3 L791.6 251.5 L788.3 254.7" fill="none" stroke="#444" stroke-width="1.3"/>
<text x="796.7" y="255.8" font-size="12.6" fill="#444" textLength="24" lengthAdjust="spacingAndGlyphs" font-family="Liberation Sans">out4</text>
<line x1="730" y1="270.3" x2="757" y2="270.3" stroke="#66a61e" stroke-width="2"/>
<text x="761.7" y="274.9" font-size="12.6" fill="#444" textLength="14.6" lengthAdjust="spacingAndGlyphs" font-family="Liberation Sans">in1</text>
<path d="M781 270.6 H791.5 M788.3 267.4 L791.6 270.6 L788.3 273.8" fill="none" stroke="#444" stroke-width="1.3"/>
<text x="796.7" y="274.9" font-size="12.6" fill="#444" textLength="24" lengthAdjust="spacingAndGlyphs" font-family="Liberation Sans">out5</text>
<line x1="730" y1="289.4" x2="757" y2="289.4" stroke="#e6ab02" stroke-width="2"/>
<text x="761.7" y="294.0" font-size="12.6" fill="#444" textLength="14.6" lengthAdjust="spacingAndGlyphs" font-family="Liberation Sans">in1</text>
<path d="M781 289.7 H791.5 M788.3 286.5 L791.6 289.7 L788.3 292.9" fill="none" stroke="#444" stroke-width="1.3"/>
<text x="796.7" y="294.0" font-size="12.6" fill="#444" textLength="24" lengthAdjust="spacingAndGlyphs" font-family="Liberation Sans">out6</text>
<line x1="730" y1="308.4" x2="757" y2="308.4" stroke="#a6761d" stroke-width="2"/>
<text x="761.7" y="313.0" font-size="12.6" fill="#444" textLength="14.6" lengthAdjust="spacingAndGlyphs" font-family="Liberation Sans">in1</text>
<path d="M781 308.7 H791.5 M788.3 305.5 L791.6 308.7 L788.3 311.9" fill="none" stroke="#444" stroke-width="1.3"/>
<text x="796.7" y="313.0" font-size="12.6" fill="#444" textLength="24" lengthAdjust="spacingAndGlyphs" font-family="Liberation Sans">out7</text>
<line x1="730" y1="327.5" x2="757" y2="327.5" stroke="#666666" stroke-width="2"/>
<text x="761.7" y="332.1" font-size="12.6" fill="#444" textLength="14.6" lengthAdjust="spacingAndGlyphs" font-family="Liberation Sans">in1</text>
<path d="M781 327.8 H791.5 M788.3 324.6 L791.6 327.8 L788.3 331.0" fill="none" stroke="#444" stroke-width="1.3"/>
<text x="796.7" y="332.1" font-size="12.6" fill="#444" textLength="24" lengthAdjust="spacingAndGlyphs" font-family="Liberation Sans">out8</text>
<line x1="730" y1="346.6" x2="757" y2="346.6" stroke="#1b9e77" stroke-width="2"/>
<text x="761.7" y="351.2" font-size="12.6" fill="#444" textLength="14.6" lengthAdjust="spacingAndGlyphs" font-family="Liberation Sans">in1</text>
<path d="M781 346.9 H791.5 M788.3 343.7 L791.6 346.9 L788.3 350.1" fill="none" stroke="#444" stroke-width="1.3"/>
<text x="796.7" y="351.2" font-size="12.6" fill="#444" textLength="24" lengthAdjust="spacingAndGlyphs" font-family="Liberation Sans">out9</text>
</svg>
<svg class="abs" style="left:630px;top:90px" width="212" height="22" viewBox="630 90 212 22">
<g>
 <circle cx="639.7" cy="100.2" r="4.6" fill="none" stroke="#666" stroke-width="2"/>
 <rect x="637.6" y="98.1" width="4.2" height="4.2" fill="#666"/>
 <path d="M643 103.5 L647 107.5" stroke="#666" stroke-width="2.2" stroke-linecap="round"/>
</g>
<g stroke="#c6c6c6" stroke-width="1.3" fill="#c6c6c6">
 <path d="M655.5 101.2 H668.5 M662 94.7 V107.7" fill="none"/>
 <path d="M654.8 101.2 l2.2-2 v4z M669.2 101.2 l-2.2-2 v4z M662 94 l-2 2.2 h4z M662 108.4 l-2-2.2 h4z" stroke="none"/>
</g>
<rect x="685" y="95" width="12.6" height="12.3" fill="#c6c6c6"/>
<path d="M691.3 97.5 V104.8 M687.6 101.15 H695" stroke="#fff" stroke-width="1.8"/>
<rect x="706.9" y="95" width="12.2" height="12.3" fill="#c6c6c6"/>
<path d="M709.3 101.15 H716.7" stroke="#fff" stroke-width="1.8"/>
<g stroke="#cfcfcf" stroke-width="1" fill="none">
 <path d="M727.5 97.5 V94.5 H730.5 M737.5 94.5 H740.5 V97.5 M740.5 104.5 V107.5 H737.5 M730.5 107.5 H727.5 V104.5"/>
 <path d="M730 97 L738 105 M738 97 L730 105" stroke-width="1.3"/>
 <path d="M729.8 96.8 h3 M729.8 96.8 v3 M738.2 96.8 h-3 M738.2 96.8 v3 M729.8 105.2 h3 M729.8 105.2 v-3 M738.2 105.2 h-3 M738.2 105.2 v-3" stroke-width="1"/>
</g>
<path d="M756.3 96.6 L749.6 102.6 H751.6 V106.8 H754.6 V103.8 H758 V106.8 H761 V102.6 H763 Z" fill="#c6c6c6"/>
<rect x="760" y="97" width="1.6" height="3" fill="#c6c6c6"/>
<g fill="#555">
 <circle cx="778.8" cy="97.6" r="0.95"/>
 <circle cx="783.2" cy="97.6" r="0.95"/>
 <circle cx="786.9" cy="97.6" r="1.8"/>
 <circle cx="786.9" cy="101.7" r="1"/>
 <circle cx="786.9" cy="105.7" r="1"/>
</g>
<path d="M799.6 101.5 L803.5 98 H813.5 V105 H803.5 Z" fill="#c6c6c6"/>
<path d="M821 98.2 L823.5 96 H835.7 V100.6 H823.5 Z M821 104.8 L823.5 102.5 H835.7 V107.1 H823.5 Z" fill="#6e6e6e"/>
</svg>

<svg class="abs" style="left:0;top:0" width="850" height="620" viewBox="0 0 850 620">
<line x1="83" y1="414.4" x2="412.6" y2="414.4" stroke="#fff" stroke-width="5"/>
<line x1="83" y1="414.4" x2="412.6" y2="414.4" stroke="#1b9e77" stroke-width="2.7" stroke-dasharray="8,8.1"/>
<line x1="412.6" y1="414.4" x2="412.6" y2="547" stroke="#fff" stroke-width="5"/>
<line x1="412.6" y1="546" x2="412.6" y2="414.4" stroke="#1b9e77" stroke-width="2.7" stroke-dasharray="8.5,8"/>
<g transform="translate(412.6,198.07)">
<rect x="67.9" y="-9.17" width="62" height="17.80" fill="#fff" fill-opacity="0.8"/>
<path d="M0,0L5.6,4.63v3.00h61.80V-9.57H5.6V-6.57Z" fill="#66a61e" stroke="#444" stroke-width="1"/>
<text x="8.7" y="3.23" font-size="11.6" fill="#444" font-family="Liberation Sans">−4.963271</text>
<text x="71.2" y="3.23" font-size="11.6" fill="#66a61e" textLength="13.3" lengthAdjust="spacingAndGlyphs" font-family="Liberation Sans">in1</text>
<path d="M89.7 -0.67 H100.2 M97.8 -2.97 L100.3 -0.67 L97.8 1.63" fill="none" stroke="#66a61e" stroke-width="1.0"/>
<text x="104.1" y="3.23" font-size="11.6" fill="#66a61e" textLength="22.2" lengthAdjust="spacingAndGlyphs" font-family="Liberation Sans">out5</text>
</g>
<g transform="translate(412.6,383.72)">
<rect x="60.3" y="-58.82" width="62" height="17.80" fill="#fff" fill-opacity="0.8"/>
<path d="M0,0L5.6,-45.02v3.00h54.20V-59.22H5.6V-56.22Z" fill="#7570b3" stroke="#fff" stroke-width="1"/>
<text x="8.7" y="-46.42" font-size="11.6" fill="#fff" font-family="Liberation Sans">−80.0364</text>
<text x="63.6" y="-46.42" font-size="11.6" fill="#7570b3" textLength="13.3" lengthAdjust="spacingAndGlyphs" font-family="Liberation Sans">in1</text>
<path d="M82.1 -50.32 H92.6 M90.2 -52.62 L92.7 -50.32 L90.2 -48.02" fill="none" stroke="#7570b3" stroke-width="1.0"/>
<text x="96.5" y="-46.42" font-size="11.6" fill="#7570b3" textLength="22.2" lengthAdjust="spacingAndGlyphs" font-family="Liberation Sans">out3</text>
</g>
<g transform="translate(412.6,385.78)">
<rect x="67.1" y="-42.38" width="62" height="17.80" fill="#fff" fill-opacity="0.8"/>
<path d="M0,0L5.6,-28.58v3.00h61.00V-42.78H5.6V-39.78Z" fill="#e7298a" stroke="#fff" stroke-width="1"/>
<text x="8.7" y="-29.98" font-size="11.6" fill="#fff" font-family="Liberation Sans">−80.86895</text>
<text x="70.4" y="-29.98" font-size="11.6" fill="#e7298a" textLength="13.3" lengthAdjust="spacingAndGlyphs" font-family="Liberation Sans">in1</text>
<path d="M88.9 -33.88 H99.4 M97.0 -36.18 L99.5 -33.88 L97.0 -31.58" fill="none" stroke="#e7298a" stroke-width="1.0"/>
<text x="103.3" y="-29.98" font-size="11.6" fill="#e7298a" textLength="22.2" lengthAdjust="spacingAndGlyphs" font-family="Liberation Sans">out4</text>
</g>
<g transform="translate(412.6,389.40)">
<rect x="67.1" y="-27.50" width="62" height="17.80" fill="#fff" fill-opacity="0.8"/>
<path d="M0,0L5.6,-13.70v3.00h61.00V-27.90H5.6V-24.90Z" fill="#a6761d" stroke="#fff" stroke-width="1"/>
<text x="8.7" y="-15.10" font-size="11.6" fill="#fff" font-family="Liberation Sans">−82.33218</text>
<text x="70.4" y="-15.10" font-size="11.6" fill="#a6761d" textLength="13.3" lengthAdjust="spacingAndGlyphs" font-family="Liberation Sans">in1</text>
<path d="M88.9 -19.00 H99.4 M97.0 -21.30 L99.5 -19.00 L97.0 -16.70" fill="none" stroke="#a6761d" stroke-width="1.0"/>
<text x="103.3" y="-15.10" font-size="11.6" fill="#a6761d" textLength="22.2" lengthAdjust="spacingAndGlyphs" font-family="Liberation Sans">out7</text>
</g>
<g transform="translate(412.6,392.57)">
<rect x="67.1" y="-12.17" width="62" height="17.80" fill="#fff" fill-opacity="0.8"/>
<path d="M0,0L5.6,1.63v3.00h61.00V-12.57H5.6V-9.57Z" fill="#666666" stroke="#fff" stroke-width="1"/>
<text x="8.7" y="0.23" font-size="11.6" fill="#fff" font-family="Liberation Sans">−83.61773</text>
<text x="70.4" y="0.23" font-size="11.6" fill="#666666" textLength="13.3" lengthAdjust="spacingAndGlyphs" font-family="Liberation Sans">in1</text>
<path d="M88.9 -3.67 H99.4 M97.0 -5.97 L99.5 -3.67 L97.0 -1.37" fill="none" stroke="#666666" stroke-width="1.0"/>
<text x="103.3" y="0.23" font-size="11.6" fill="#666666" textLength="22.2" lengthAdjust="spacingAndGlyphs" font-family="Liberation Sans">out8</text>
</g>
<g transform="translate(412.6,398.28)">
<rect x="67.1" y="0.62" width="62" height="17.80" fill="#fff" fill-opacity="0.8"/>
<path d="M0,0L5.6,14.42v3.00h61.00V0.22H5.6V3.22Z" fill="#1b9e77" stroke="#fff" stroke-width="1"/>
<text x="8.7" y="13.02" font-size="11.6" fill="#fff" font-family="Liberation Sans">−85.92599</text>
<text x="70.4" y="13.02" font-size="11.6" fill="#1b9e77" textLength="13.3" lengthAdjust="spacingAndGlyphs" font-family="Liberation Sans">in1</text>
<path d="M88.9 9.12 H99.4 M97.0 6.82 L99.5 9.12 L97.0 11.42" fill="none" stroke="#1b9e77" stroke-width="1.0"/>
<text x="103.3" y="13.02" font-size="11.6" fill="#1b9e77" textLength="22.2" lengthAdjust="spacingAndGlyphs" font-family="Liberation Sans">out9</text>
</g>
<g transform="translate(412.6,403.08)">
<rect x="67.4" y="14.32" width="62" height="17.80" fill="#fff" fill-opacity="0.8"/>
<path d="M0,0L5.6,28.12v3.00h61.30V13.92H5.6V16.92Z" fill="#e6ab02" stroke="#444" stroke-width="1"/>
<text x="8.7" y="26.72" font-size="11.6" fill="#444" font-family="Liberation Sans">−87.86538</text>
<text x="70.7" y="26.72" font-size="11.6" fill="#e6ab02" textLength="13.3" lengthAdjust="spacingAndGlyphs" font-family="Liberation Sans">in1</text>
<path d="M89.2 22.82 H99.7 M97.3 20.52 L99.8 22.82 L97.3 25.12" fill="none" stroke="#e6ab02" stroke-width="1.0"/>
<text x="103.6" y="26.72" font-size="11.6" fill="#e6ab02" textLength="22.2" lengthAdjust="spacingAndGlyphs" font-family="Liberation Sans">out6</text>
</g>
<g transform="translate(412.6,414.44)">
<rect x="60.2" y="21.46" width="62" height="17.80" fill="#fff" fill-opacity="0.8"/>
<path d="M0,0L5.6,35.26v3.00h54.10V21.06H5.6V24.06Z" fill="#d95f02" stroke="#fff" stroke-width="1"/>
<text x="8.7" y="33.86" font-size="11.6" fill="#fff" font-family="Liberation Sans">−92.4613</text>
<text x="63.5" y="33.86" font-size="11.6" fill="#d95f02" textLength="13.3" lengthAdjust="spacingAndGlyphs" font-family="Liberation Sans">in1</text>
<path d="M82.0 29.96 H92.5 M90.1 27.66 L92.6 29.96 L90.1 32.26" fill="none" stroke="#d95f02" stroke-width="1.0"/>
<text x="96.4" y="33.86" font-size="11.6" fill="#d95f02" textLength="22.2" lengthAdjust="spacingAndGlyphs" font-family="Liberation Sans">out2</text>
</g>
<g transform="translate(412.6,414.50)">
<rect x="67.1" y="39.90" width="62" height="17.80" fill="#fff" fill-opacity="0.8"/>
<path d="M0,0L5.6,53.70v3.00h61.00V39.50H5.6V42.50Z" fill="#1b9e77" stroke="#fff" stroke-width="1"/>
<text x="8.7" y="52.30" font-size="11.6" fill="#fff" font-family="Liberation Sans">−92.48505</text>
<text x="70.4" y="52.30" font-size="11.6" fill="#1b9e77" textLength="13.3" lengthAdjust="spacingAndGlyphs" font-family="Liberation Sans">in1</text>
<path d="M88.9 48.40 H99.4 M97.0 46.10 L99.5 48.40 L97.0 50.70" fill="none" stroke="#1b9e77" stroke-width="1.0"/>
<text x="103.3" y="52.30" font-size="11.6" fill="#1b9e77" textLength="22.2" lengthAdjust="spacingAndGlyphs" font-family="Liberation Sans">out1</text>
</g>
<path d="M412.6,547 L418,552.3 H438.8 V569.6 H385.6 V552.3 H407.2 Z" fill="#444" stroke="#fff" stroke-width="1"/>
<text x="412.2" y="565" text-anchor="middle" font-size="11.6" fill="#fff" font-family="Liberation Sans">1.291351</text>
</svg>

<div id="tab" class="abs"><svg class="abs" style="left:12px;top:10px" width="8" height="12" viewBox="0 0 8 12"><path d="M1.5 1 L6.5 6 L1.5 11" fill="none" stroke="#222" stroke-width="1.4"/></svg></div>
<div id="pline" class="abs"></div>

<!-- Plot editor -->
<svg class="abs" style="left:900px;top:50px" width="35" height="30" viewBox="900 50 35 30"><path d="M909.4 58.4 V71.9 H923.6" fill="none" stroke="#2a2a2a" stroke-width="1.3" stroke-linejoin="round"/><path d="M909.8 63 C911 60.5 912.5 59.5 914 59.6 C917 59.8 917.5 69 920.3 69 C922.5 69 923.3 64 924.8 62.4" fill="none" stroke="#2a2a2a" stroke-width="1.3" stroke-linecap="round"/><circle cx="909.4" cy="58.4" r="1.2" fill="#1a1a40"/><circle cx="923.3" cy="71.9" r="1.2" fill="#1a1a40"/></svg>
<div class="abs" style="left:940.5px;top:55.6px;font-size:15.2px;color:#1f1f1f">Plot editor</div>
<div class="abs" style="left:890px;top:85px;width:152px;height:1px;background:#e9eaee"></div>
<svg class="abs" style="left:998px;top:97px" width="14" height="14" viewBox="0 0 14 14"><circle cx="7" cy="7" r="5.2" fill="none" stroke="#4d5fe0" stroke-width="1.1"/><path d="M7 6 V10" stroke="#4d5fe0" stroke-width="1.1"/><circle cx="7" cy="4.3" r="0.7" fill="#4d5fe0"/></svg>
<svg class="abs" style="left:1020px;top:94px" width="20" height="18" viewBox="0 0 20 18"><path d="M4 13 L4.5 10 L12.5 2 a1.5 1.5 0 0 1 2.2 0 l0.8 0.8 a1.5 1.5 0 0 1 0 2.2 L7.5 13z" fill="none" stroke="#4d5fe0" stroke-width="1.2"/><path d="M2 16.5 H18" stroke="#4d5fe0" stroke-width="1.2"/></svg>
<svg class="abs" style="left:1053px;top:97px" width="12" height="12" viewBox="0 0 12 12"><path d="M2 2 L10 10 M10 2 L2 10" stroke="#4d5fe0" stroke-width="1.2"/></svg>

<div class="abs" style="left:862px;top:118px;width:204px;height:204px;background:#fafafa"></div>
<div class="abs" style="left:862px;top:118px;width:191px;height:189px;overflow:hidden">
<div class="cell hc" style="left:4px;top:4.5px;width:21px;height:20.5px;line-height:20.5px;background:#fdfdfd;font-size:13px">S<span style="font-size:9px">ij</span></div>
<div class="cell hc" style="left:29px;top:4.5px;width:35.5px;height:20.5px;line-height:20.5px;background:#fdfdfd">1</div>
<div class="cell hc" style="left:69px;top:4.5px;width:35.5px;height:20.5px;line-height:20.5px;background:#fdfdfd">2</div>
<div class="cell hc" style="left:108.5px;top:4.5px;width:35.5px;height:20.5px;line-height:20.5px;background:#fdfdfd">3</div>
<div class="cell hc" style="left:148px;top:4.5px;width:35.5px;height:20.5px;line-height:20.5px;background:#fdfdfd">4</div>
<div class="cell hc" style="left:187.5px;top:4.5px;width:35.5px;height:20.5px;line-height:20.5px;background:#fdfdfd">5</div>
<div class="cell hc" style="left:4px;top:29.0px;width:21px;height:35.5px;line-height:35.5px;background:#fdfdfd">1</div>
<div class="cell" style="left:29px;top:29.0px;width:35.5px;height:35.5px;line-height:35.5px;background:#f1f1f3;font-size:13.5px">S<span style="font-size:9.5px;vertical-align:-2px">11</span></div>
<div class="cell" style="left:69px;top:29.0px;width:35.5px;height:35.5px;line-height:35.5px;background:#f1f1f3;font-size:13.5px">S<span style="font-size:9.5px;vertical-align:-2px">12</span></div>
<div class="cell" style="left:108.5px;top:29.0px;width:35.5px;height:35.5px;line-height:35.5px;background:#f1f1f3;font-size:13.5px">S<span style="font-size:9.5px;vertical-align:-2px">13</span></div>
<div class="cell" style="left:148px;top:29.0px;width:35.5px;height:35.5px;line-height:35.5px;background:#f1f1f3;font-size:13.5px">S<span style="font-size:9.5px;vertical-align:-2px">14</span></div>
<div class="cell" style="left:187.5px;top:29.0px;width:35.5px;height:35.5px;line-height:35.5px;background:#f1f1f3;font-size:13.5px">S<span style="font-size:9.5px;vertical-align:-2px">15</span></div>
<div class="cell hc" style="left:4px;top:68.6px;width:21px;height:35.5px;line-height:35.5px;background:#fdfdfd">2</div>
<div class="cell" style="left:29px;top:68.6px;width:35.5px;height:35.5px;line-height:35.5px;background:#dce8fb;font-size:13.5px">S<span style="font-size:9.5px;vertical-align:-2px">21</span></div>
<div class="cell" style="left:69px;top:68.6px;width:35.5px;height:35.5px;line-height:35.5px;background:#f1f1f3;font-size:13.5px">S<span style="font-size:9.5px;vertical-align:-2px">22</span></div>
<div class="cell" style="left:108.5px;top:68.6px;width:35.5px;height:35.5px;line-height:35.5px;background:#f1f1f3;font-size:13.5px">S<span style="font-size:9.5px;vertical-align:-2px">23</span></div>
<div class="cell" style="left:148px;top:68.6px;width:35.5px;height:35.5px;line-height:35.5px;background:#f1f1f3;font-size:13.5px">S<span style="font-size:9.5px;vertical-align:-2px">24</span></div>
<div class="cell" style="left:187.5px;top:68.6px;width:35.5px;height:35.5px;line-height:35.5px;background:#f1f1f3;font-size:13.5px">S<span style="font-size:9.5px;vertical-align:-2px">25</span></div>
<div class="cell hc" style="left:4px;top:108.19999999999999px;width:21px;height:35.5px;line-height:35.5px;background:#fdfdfd">3</div>
<div class="cell" style="left:29px;top:108.19999999999999px;width:35.5px;height:35.5px;line-height:35.5px;background:#dce8fb;font-size:13.5px">S<span style="font-size:9.5px;vertical-align:-2px">31</span></div>
<div class="cell" style="left:69px;top:108.19999999999999px;width:35.5px;height:35.5px;line-height:35.5px;background:#f1f1f3;font-size:13.5px">S<span style="font-size:9.5px;vertical-align:-2px">32</span></div>
<div class="cell" style="left:108.5px;top:108.19999999999999px;width:35.5px;height:35.5px;line-height:35.5px;background:#f1f1f3;font-size:13.5px">S<span style="font-size:9.5px;vertical-align:-2px">33</span></div>
<div class="cell" style="left:148px;top:108.19999999999999px;width:35.5px;height:35.5px;line-height:35.5px;background:#f1f1f3;font-size:13.5px">S<span style="font-size:9.5px;vertical-align:-2px">34</span></div>
<div class="cell" style="left:187.5px;top:108.19999999999999px;width:35.5px;height:35.5px;line-height:35.5px;background:#f1f1f3;font-size:13.5px">S<span style="font-size:9.5px;vertical-align:-2px">35</span></div>
<div class="cell hc" style="left:4px;top:147.8px;width:21px;height:35.5px;line-height:35.5px;background:#fdfdfd">4</div>
<div class="cell" style="left:29px;top:147.8px;width:35.5px;height:35.5px;line-height:35.5px;background:#dce8fb;font-size:13.5px">S<span style="font-size:9.5px;vertical-align:-2px">41</span></div>
<div class="cell" style="left:69px;top:147.8px;width:35.5px;height:35.5px;line-height:35.5px;background:#f1f1f3;font-size:13.5px">S<span style="font-size:9.5px;vertical-align:-2px">42</span></div>
<div class="cell" style="left:108.5px;top:147.8px;width:35.5px;height:35.5px;line-height:35.5px;background:#f1f1f3;font-size:13.5px">S<span style="font-size:9.5px;vertical-align:-2px">43</span></div>
<div class="cell" style="left:148px;top:147.8px;width:35.5px;height:35.5px;line-height:35.5px;background:#f1f1f3;font-size:13.5px">S<span style="font-size:9.5px;vertical-align:-2px">44</span></div>
<div class="cell" style="left:187.5px;top:147.8px;width:35.5px;height:35.5px;line-height:35.5px;background:#f1f1f3;font-size:13.5px">S<span style="font-size:9.5px;vertical-align:-2px">45</span></div>
<div class="cell hc" style="left:4px;top:187.39999999999998px;width:21px;height:35.5px;line-height:35.5px;background:#fdfdfd">5</div>
<div class="cell" style="left:29px;top:187.39999999999998px;width:35.5px;height:35.5px;line-height:35.5px;background:#dce8fb;font-size:13.5px">S<span style="font-size:9.5px;vertical-align:-2px">51</span></div>
<div class="cell" style="left:69px;top:187.39999999999998px;width:35.5px;height:35.5px;line-height:35.5px;background:#f1f1f3;font-size:13.5px">S<span style="font-size:9.5px;vertical-align:-2px">52</span></div>
<div class="cell" style="left:108.5px;top:187.39999999999998px;width:35.5px;height:35.5px;line-height:35.5px;background:#f1f1f3;font-size:13.5px">S<span style="font-size:9.5px;vertical-align:-2px">53</span></div>
<div class="cell" style="left:148px;top:187.39999999999998px;width:35.5px;height:35.5px;line-height:35.5px;background:#f1f1f3;font-size:13.5px">S<span style="font-size:9.5px;vertical-align:-2px">54</span></div>
<div class="cell" style="left:187.5px;top:187.39999999999998px;width:35.5px;height:35.5px;line-height:35.5px;background:#f1f1f3;font-size:13.5px">S<span style="font-size:9.5px;vertical-align:-2px">55</span></div>
</div>
<div class="abs" style="left:1053px;top:118px;width:13px;height:189px;background:#fafafa"></div>
<svg class="abs" style="left:1054px;top:123px" width="11" height="183" viewBox="0 0 11 183"><path d="M1.5 9 L5.5 3 L9.5 9z" fill="#8a8a8a"/><rect x="2" y="14" width="7" height="70" rx="3.5" fill="#8c8c8c"/><path d="M1.5 175 L5.5 181 L9.5 175z" fill="#8a8a8a"/></svg>
<svg class="abs" style="left:866px;top:308px" width="189" height="14" viewBox="0 0 189 14"><path d="M9 3 L3 7 L9 11z" fill="#8a8a8a"/><rect x="16" y="3.2" width="69" height="7" rx="3.5" fill="#8c8c8c"/><path d="M176 3 L182 7 L176 11z" fill="#8a8a8a"/></svg>
<div class="cell hc" style="left:869.5px;top:336px;width:19px;height:16px;background:#f6f6f8"><span style="position:absolute;left:1.5px;top:1.5px;font-family:'Liberation Serif';font-style:italic;font-weight:bold;font-size:12.5px;color:#2a2a2a">E</span><span style="position:absolute;left:10px;top:-0.5px;font-size:6.5px;color:#444">in</span><span style="position:absolute;left:11.5px;top:8px;font-size:6px;color:#444">i</span></div>
<div class="cell hc" style="left:891px;top:336px;width:21px;height:16px;background:#f6f6f8"><span style="position:absolute;left:1.5px;top:1.5px;font-family:'Liberation Serif';font-style:italic;font-weight:bold;font-size:12.5px;color:#2a2a2a">E</span><span style="position:absolute;left:10px;top:-0.5px;font-size:6.5px;color:#444">out</span><span style="position:absolute;left:13px;top:8px;font-size:6px;color:#444">i</span></div>
<div class="cell hc" style="left:916px;top:336px;width:21px;height:16px;line-height:16px;background:#f6f6f7">i</div>
<div class="abs" style="left:945px;top:337.5px;font-size:11.6px;color:#222">Port name</div>
<div class="abs" style="left:866px;top:355.5px;width:199px;height:1px;background:#ececef"></div>
<div class="cb" style="left:870.2px;top:361.7px"><svg width="11" height="11" viewBox="0 0 11 11"><path d="M2 5.8 L4.4 8 L9 3" fill="none" stroke="#fff" stroke-width="1.6" stroke-linecap="round" stroke-linejoin="round"/></svg></div>
<div class="cb" style="left:893.8px;top:361.7px"><svg width="11" height="11" viewBox="0 0 11 11"><path d="M2 5.8 L4.4 8 L9 3" fill="none" stroke="#fff" stroke-width="1.6" stroke-linecap="round" stroke-linejoin="round"/></svg></div>
<div class="ix" style="top:361.7px">1</div>
<div class="pn" style="top:361.7px">in1</div>
<div class="cb" style="left:870.2px;top:381.5px"><svg width="11" height="11" viewBox="0 0 11 11"><path d="M2 5.8 L4.4 8 L9 3" fill="none" stroke="#fff" stroke-width="1.6" stroke-linecap="round" stroke-linejoin="round"/></svg></div>
<div class="cb" style="left:893.8px;top:381.5px"><svg width="11" height="11" viewBox="0 0 11 11"><path d="M2 5.8 L4.4 8 L9 3" fill="none" stroke="#fff" stroke-width="1.6" stroke-linecap="round" stroke-linejoin="round"/></svg></div>
<div class="ix" style="top:381.5px">2</div>
<div class="pn" style="top:381.5px">out1</div>
<div class="cb" style="left:870.2px;top:401.3px"><svg width="11" height="11" viewBox="0 0 11 11"><path d="M2 5.8 L4.4 8 L9 3" fill="none" stroke="#fff" stroke-width="1.6" stroke-linecap="round" stroke-linejoin="round"/></svg></div>
<div class="cb" style="left:893.8px;top:401.3px"><svg width="11" height="11" viewBox="0 0 11 11"><path d="M2 5.8 L4.4 8 L9 3" fill="none" stroke="#fff" stroke-width="1.6" stroke-linecap="round" stroke-linejoin="round"/></svg></div>
<div class="ix" style="top:401.3px">3</div>
<div class="pn" style="top:401.3px">out2</div>
<div class="cb" style="left:870.2px;top:421.1px"><svg width="11" height="11" viewBox="0 0 11 11"><path d="M2 5.8 L4.4 8 L9 3" fill="none" stroke="#fff" stroke-width="1.6" stroke-linecap="round" stroke-linejoin="round"/></svg></div>
<div class="cb" style="left:893.8px;top:421.1px"><svg width="11" height="11" viewBox="0 0 11 11"><path d="M2 5.8 L4.4 8 L9 3" fill="none" stroke="#fff" stroke-width="1.6" stroke-linecap="round" stroke-linejoin="round"/></svg></div>
<div class="ix" style="top:421.1px">4</div>
<div class="pn" style="top:421.1px">out3</div>
<div class="cb" style="left:870.2px;top:440.9px"><svg width="11" height="11" viewBox="0 0 11 11"><path d="M2 5.8 L4.4 8 L9 3" fill="none" stroke="#fff" stroke-width="1.6" stroke-linecap="round" stroke-linejoin="round"/></svg></div>
<div class="cb" style="left:893.8px;top:440.9px"><svg width="11" height="11" viewBox="0 0 11 11"><path d="M2 5.8 L4.4 8 L9 3" fill="none" stroke="#fff" stroke-width="1.6" stroke-linecap="round" stroke-linejoin="round"/></svg></div>
<div class="ix" style="top:440.9px">5</div>
<div class="pn" style="top:440.9px">out4</div>
<div class="cb" style="left:870.2px;top:460.6px"><svg width="11" height="11" viewBox="0 0 11 11"><path d="M2 5.8 L4.4 8 L9 3" fill="none" stroke="#fff" stroke-width="1.6" stroke-linecap="round" stroke-linejoin="round"/></svg></div>
<div class="cb" style="left:893.8px;top:460.6px"><svg width="11" height="11" viewBox="0 0 11 11"><path d="M2 5.8 L4.4 8 L9 3" fill="none" stroke="#fff" stroke-width="1.6" stroke-linecap="round" stroke-linejoin="round"/></svg></div>
<div class="ix" style="top:460.6px">6</div>
<div class="pn" style="top:460.6px">out5</div>
<div class="cb" style="left:870.2px;top:480.4px"><svg width="11" height="11" viewBox="0 0 11 11"><path d="M2 5.8 L4.4 8 L9 3" fill="none" stroke="#fff" stroke-width="1.6" stroke-linecap="round" stroke-linejoin="round"/></svg></div>
<div class="cb" style="left:893.8px;top:480.4px"><svg width="11" height="11" viewBox="0 0 11 11"><path d="M2 5.8 L4.4 8 L9 3" fill="none" stroke="#fff" stroke-width="1.6" stroke-linecap="round" stroke-linejoin="round"/></svg></div>
<div class="ix" style="top:480.4px">7</div>
<div class="pn" style="top:480.4px">out6</div>
<div class="cb" style="left:870.2px;top:500.2px"><svg width="11" height="11" viewBox="0 0 11 11"><path d="M2 5.8 L4.4 8 L9 3" fill="none" stroke="#fff" stroke-width="1.6" stroke-linecap="round" stroke-linejoin="round"/></svg></div>
<div class="cb" style="left:893.8px;top:500.2px"><svg width="11" height="11" viewBox="0 0 11 11"><path d="M2 5.8 L4.4 8 L9 3" fill="none" stroke="#fff" stroke-width="1.6" stroke-linecap="round" stroke-linejoin="round"/></svg></div>
<div class="ix" style="top:500.2px">8</div>
<div class="pn" style="top:500.2px">out7</div>
<div class="cb" style="left:870.2px;top:520.0px"><svg width="11" height="11" viewBox="0 0 11 11"><path d="M2 5.8 L4.4 8 L9 3" fill="none" stroke="#fff" stroke-width="1.6" stroke-linecap="round" stroke-linejoin="round"/></svg></div>
<div class="cb" style="left:893.8px;top:520.0px"><svg width="11" height="11" viewBox="0 0 11 11"><path d="M2 5.8 L4.4 8 L9 3" fill="none" stroke="#fff" stroke-width="1.6" stroke-linecap="round" stroke-linejoin="round"/></svg></div>
<div class="ix" style="top:520.0px">9</div>
<div class="pn" style="top:520.0px">out8</div>
<div class="cb" style="left:870.2px;top:539.8px"><svg width="11" height="11" viewBox="0 0 11 11"><path d="M2 5.8 L4.4 8 L9 3" fill="none" stroke="#fff" stroke-width="1.6" stroke-linecap="round" stroke-linejoin="round"/></svg></div>
<div class="cb" style="left:893.8px;top:539.8px"><svg width="11" height="11" viewBox="0 0 11 11"><path d="M2 5.8 L4.4 8 L9 3" fill="none" stroke="#fff" stroke-width="1.6" stroke-linecap="round" stroke-linejoin="round"/></svg></div>
<div class="ix" style="top:539.8px">10</div>
<div class="pn" style="top:539.8px">out9</div>

<div id="bot" class="abs"></div>
</body></html>
